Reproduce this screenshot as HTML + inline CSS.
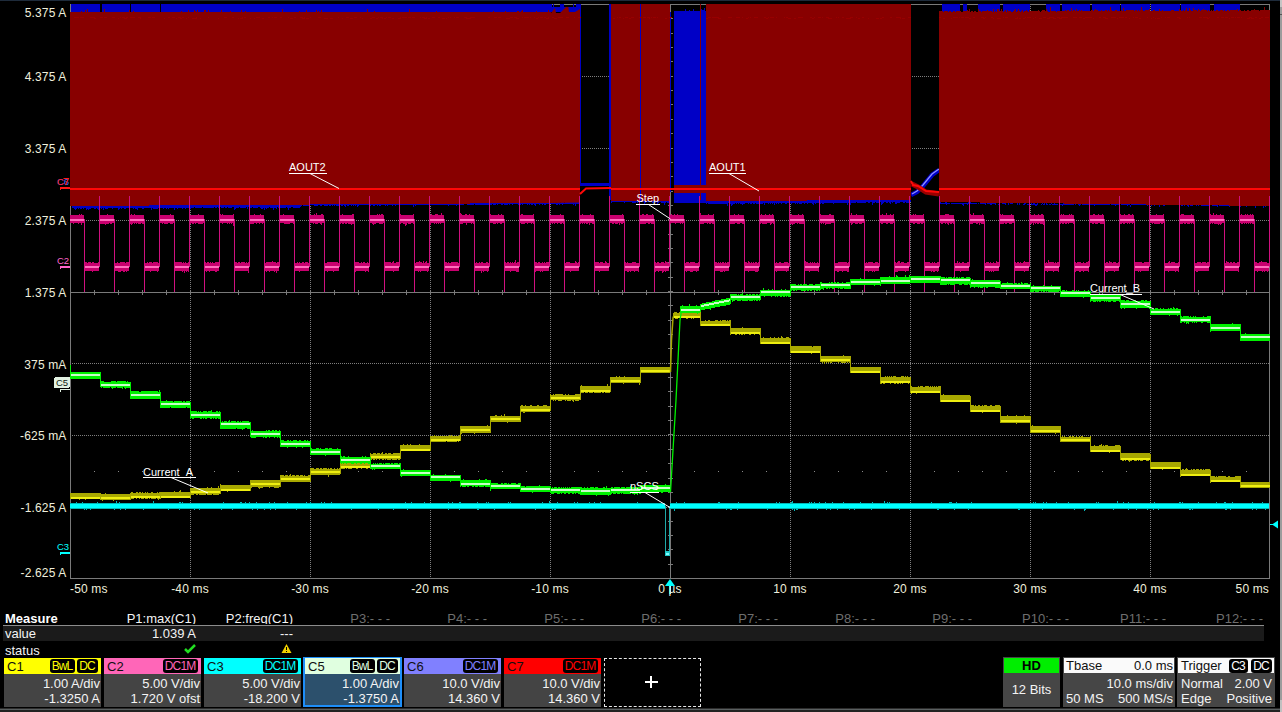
<!DOCTYPE html><html><head><meta charset="utf-8"><style>
html,body{margin:0;padding:0;background:#000;width:1282px;height:712px;overflow:hidden}
body{font-family:"Liberation Sans", sans-serif;position:relative;color:#efefdc}
svg{position:absolute;left:0;top:0}
.a{position:absolute;white-space:nowrap;line-height:1}
.bx{position:absolute;top:658px;width:97px;height:49px;background:#444}
.hd{position:absolute;left:0;top:0;right:0;height:16px}
.hl{position:absolute;left:3px;top:1px;font-size:13px;line-height:15px;color:#101010}
.bd{position:absolute;top:-1px;height:14px;border-radius:3px;background:#000;font-size:12px;line-height:14px;text-align:center;letter-spacing:-0.9px;text-indent:-0.9px}
.r1{position:absolute;right:1px;top:18px;font-size:13px;line-height:15px;color:#f4f4f4}
.r2{position:absolute;right:1px;top:33px;font-size:13px;line-height:15px;color:#f4f4f4}
</style></head><body>
<svg width="1282" height="712" viewBox="0 0 1282 712" shape-rendering="crispEdges" font-family='"Liberation Sans", sans-serif'>
<rect x="0" y="0" width="1282" height="712" fill="#000"/>
<rect x="0" y="0" width="1282" height="1" fill="#1e2b3b"/>
<rect x="1280" y="0" width="2" height="708" fill="#9c9c9c"/>
<rect x="1280" y="0" width="2" height="7" fill="#c4c4c4"/>
<rect x="1280" y="14" width="2" height="1" fill="#555"/>
<line x1="190.5" y1="4" x2="190.5" y2="578" stroke="#7e7e7e" stroke-width="1" stroke-dasharray="1 1"/>
<line x1="310.5" y1="4" x2="310.5" y2="578" stroke="#7e7e7e" stroke-width="1" stroke-dasharray="1 1"/>
<line x1="430.5" y1="4" x2="430.5" y2="578" stroke="#7e7e7e" stroke-width="1" stroke-dasharray="1 1"/>
<line x1="550.5" y1="4" x2="550.5" y2="578" stroke="#7e7e7e" stroke-width="1" stroke-dasharray="1 1"/>
<line x1="790.5" y1="4" x2="790.5" y2="578" stroke="#7e7e7e" stroke-width="1" stroke-dasharray="1 1"/>
<line x1="910.5" y1="4" x2="910.5" y2="578" stroke="#7e7e7e" stroke-width="1" stroke-dasharray="1 1"/>
<line x1="1030.5" y1="4" x2="1030.5" y2="578" stroke="#7e7e7e" stroke-width="1" stroke-dasharray="1 1"/>
<line x1="1150.5" y1="4" x2="1150.5" y2="578" stroke="#7e7e7e" stroke-width="1" stroke-dasharray="1 1"/>
<line x1="70" y1="76.5" x2="1269" y2="76.5" stroke="#7e7e7e" stroke-width="1" stroke-dasharray="1 1"/>
<line x1="70" y1="148.5" x2="1269" y2="148.5" stroke="#7e7e7e" stroke-width="1" stroke-dasharray="1 1"/>
<line x1="70" y1="220.5" x2="1269" y2="220.5" stroke="#7e7e7e" stroke-width="1" stroke-dasharray="1 1"/>
<line x1="70" y1="363.5" x2="1269" y2="363.5" stroke="#7e7e7e" stroke-width="1" stroke-dasharray="1 1"/>
<line x1="70" y1="435.5" x2="1269" y2="435.5" stroke="#7e7e7e" stroke-width="1" stroke-dasharray="1 1"/>
<line x1="70" y1="507.5" x2="1269" y2="507.5" stroke="#7e7e7e" stroke-width="1" stroke-dasharray="1 1"/>
<rect x="94" y="471" width="1" height="1" fill="#8a8a8a"/>
<rect x="118" y="471" width="1" height="1" fill="#8a8a8a"/>
<rect x="142" y="471" width="1" height="1" fill="#8a8a8a"/>
<rect x="166" y="471" width="1" height="1" fill="#8a8a8a"/>
<rect x="190" y="471" width="1" height="1" fill="#8a8a8a"/>
<rect x="214" y="471" width="1" height="1" fill="#8a8a8a"/>
<rect x="238" y="471" width="1" height="1" fill="#8a8a8a"/>
<rect x="262" y="471" width="1" height="1" fill="#8a8a8a"/>
<rect x="286" y="471" width="1" height="1" fill="#8a8a8a"/>
<rect x="310" y="471" width="1" height="1" fill="#8a8a8a"/>
<rect x="334" y="471" width="1" height="1" fill="#8a8a8a"/>
<rect x="358" y="471" width="1" height="1" fill="#8a8a8a"/>
<rect x="382" y="471" width="1" height="1" fill="#8a8a8a"/>
<rect x="406" y="471" width="1" height="1" fill="#8a8a8a"/>
<rect x="430" y="471" width="1" height="1" fill="#8a8a8a"/>
<rect x="454" y="471" width="1" height="1" fill="#8a8a8a"/>
<rect x="478" y="471" width="1" height="1" fill="#8a8a8a"/>
<rect x="502" y="471" width="1" height="1" fill="#8a8a8a"/>
<rect x="526" y="471" width="1" height="1" fill="#8a8a8a"/>
<rect x="550" y="471" width="1" height="1" fill="#8a8a8a"/>
<rect x="574" y="471" width="1" height="1" fill="#8a8a8a"/>
<rect x="598" y="471" width="1" height="1" fill="#8a8a8a"/>
<rect x="622" y="471" width="1" height="1" fill="#8a8a8a"/>
<rect x="646" y="471" width="1" height="1" fill="#8a8a8a"/>
<rect x="670" y="471" width="1" height="1" fill="#8a8a8a"/>
<rect x="694" y="471" width="1" height="1" fill="#8a8a8a"/>
<rect x="718" y="471" width="1" height="1" fill="#8a8a8a"/>
<rect x="742" y="471" width="1" height="1" fill="#8a8a8a"/>
<rect x="766" y="471" width="1" height="1" fill="#8a8a8a"/>
<rect x="790" y="471" width="1" height="1" fill="#8a8a8a"/>
<rect x="814" y="471" width="1" height="1" fill="#8a8a8a"/>
<rect x="838" y="471" width="1" height="1" fill="#8a8a8a"/>
<rect x="862" y="471" width="1" height="1" fill="#8a8a8a"/>
<rect x="886" y="471" width="1" height="1" fill="#8a8a8a"/>
<rect x="910" y="471" width="1" height="1" fill="#8a8a8a"/>
<rect x="934" y="471" width="1" height="1" fill="#8a8a8a"/>
<rect x="958" y="471" width="1" height="1" fill="#8a8a8a"/>
<rect x="982" y="471" width="1" height="1" fill="#8a8a8a"/>
<rect x="1006" y="471" width="1" height="1" fill="#8a8a8a"/>
<rect x="1030" y="471" width="1" height="1" fill="#8a8a8a"/>
<rect x="1054" y="471" width="1" height="1" fill="#8a8a8a"/>
<rect x="1078" y="471" width="1" height="1" fill="#8a8a8a"/>
<rect x="1102" y="471" width="1" height="1" fill="#8a8a8a"/>
<rect x="1126" y="471" width="1" height="1" fill="#8a8a8a"/>
<rect x="1150" y="471" width="1" height="1" fill="#8a8a8a"/>
<rect x="1174" y="471" width="1" height="1" fill="#8a8a8a"/>
<rect x="1198" y="471" width="1" height="1" fill="#8a8a8a"/>
<rect x="1222" y="471" width="1" height="1" fill="#8a8a8a"/>
<rect x="1246" y="471" width="1" height="1" fill="#8a8a8a"/>
<rect x="70" y="4" width="1200" height="1" fill="#7a7a7a"/>
<rect x="70" y="578" width="1200" height="1" fill="#7a7a7a"/>
<rect x="70" y="4" width="1" height="575" fill="#7a7a7a"/>
<rect x="1269" y="4" width="1" height="575" fill="#7a7a7a"/>
<rect x="670" y="4" width="1" height="575" fill="#7a7a7a"/>
<rect x="70" y="292" width="1200" height="1" fill="#7a7a7a"/>
<rect x="94" y="290" width="1" height="5" fill="#7a7a7a"/>
<rect x="118" y="290" width="1" height="5" fill="#7a7a7a"/>
<rect x="142" y="290" width="1" height="5" fill="#7a7a7a"/>
<rect x="166" y="290" width="1" height="5" fill="#7a7a7a"/>
<rect x="190" y="290" width="1" height="5" fill="#7a7a7a"/>
<rect x="214" y="290" width="1" height="5" fill="#7a7a7a"/>
<rect x="238" y="290" width="1" height="5" fill="#7a7a7a"/>
<rect x="262" y="290" width="1" height="5" fill="#7a7a7a"/>
<rect x="286" y="290" width="1" height="5" fill="#7a7a7a"/>
<rect x="310" y="290" width="1" height="5" fill="#7a7a7a"/>
<rect x="334" y="290" width="1" height="5" fill="#7a7a7a"/>
<rect x="358" y="290" width="1" height="5" fill="#7a7a7a"/>
<rect x="382" y="290" width="1" height="5" fill="#7a7a7a"/>
<rect x="406" y="290" width="1" height="5" fill="#7a7a7a"/>
<rect x="430" y="290" width="1" height="5" fill="#7a7a7a"/>
<rect x="454" y="290" width="1" height="5" fill="#7a7a7a"/>
<rect x="478" y="290" width="1" height="5" fill="#7a7a7a"/>
<rect x="502" y="290" width="1" height="5" fill="#7a7a7a"/>
<rect x="526" y="290" width="1" height="5" fill="#7a7a7a"/>
<rect x="550" y="290" width="1" height="5" fill="#7a7a7a"/>
<rect x="574" y="290" width="1" height="5" fill="#7a7a7a"/>
<rect x="598" y="290" width="1" height="5" fill="#7a7a7a"/>
<rect x="622" y="290" width="1" height="5" fill="#7a7a7a"/>
<rect x="646" y="290" width="1" height="5" fill="#7a7a7a"/>
<rect x="670" y="290" width="1" height="5" fill="#7a7a7a"/>
<rect x="694" y="290" width="1" height="5" fill="#7a7a7a"/>
<rect x="718" y="290" width="1" height="5" fill="#7a7a7a"/>
<rect x="742" y="290" width="1" height="5" fill="#7a7a7a"/>
<rect x="766" y="290" width="1" height="5" fill="#7a7a7a"/>
<rect x="790" y="290" width="1" height="5" fill="#7a7a7a"/>
<rect x="814" y="290" width="1" height="5" fill="#7a7a7a"/>
<rect x="838" y="290" width="1" height="5" fill="#7a7a7a"/>
<rect x="862" y="290" width="1" height="5" fill="#7a7a7a"/>
<rect x="886" y="290" width="1" height="5" fill="#7a7a7a"/>
<rect x="910" y="290" width="1" height="5" fill="#7a7a7a"/>
<rect x="934" y="290" width="1" height="5" fill="#7a7a7a"/>
<rect x="958" y="290" width="1" height="5" fill="#7a7a7a"/>
<rect x="982" y="290" width="1" height="5" fill="#7a7a7a"/>
<rect x="1006" y="290" width="1" height="5" fill="#7a7a7a"/>
<rect x="1030" y="290" width="1" height="5" fill="#7a7a7a"/>
<rect x="1054" y="290" width="1" height="5" fill="#7a7a7a"/>
<rect x="1078" y="290" width="1" height="5" fill="#7a7a7a"/>
<rect x="1102" y="290" width="1" height="5" fill="#7a7a7a"/>
<rect x="1126" y="290" width="1" height="5" fill="#7a7a7a"/>
<rect x="1150" y="290" width="1" height="5" fill="#7a7a7a"/>
<rect x="1174" y="290" width="1" height="5" fill="#7a7a7a"/>
<rect x="1198" y="290" width="1" height="5" fill="#7a7a7a"/>
<rect x="1222" y="290" width="1" height="5" fill="#7a7a7a"/>
<rect x="1246" y="290" width="1" height="5" fill="#7a7a7a"/>
<rect x="668" y="18" width="5" height="1" fill="#7a7a7a"/>
<rect x="668" y="33" width="5" height="1" fill="#7a7a7a"/>
<rect x="668" y="47" width="5" height="1" fill="#7a7a7a"/>
<rect x="668" y="61" width="5" height="1" fill="#7a7a7a"/>
<rect x="668" y="76" width="5" height="1" fill="#7a7a7a"/>
<rect x="668" y="90" width="5" height="1" fill="#7a7a7a"/>
<rect x="668" y="104" width="5" height="1" fill="#7a7a7a"/>
<rect x="668" y="119" width="5" height="1" fill="#7a7a7a"/>
<rect x="668" y="133" width="5" height="1" fill="#7a7a7a"/>
<rect x="668" y="148" width="5" height="1" fill="#7a7a7a"/>
<rect x="668" y="162" width="5" height="1" fill="#7a7a7a"/>
<rect x="668" y="176" width="5" height="1" fill="#7a7a7a"/>
<rect x="668" y="191" width="5" height="1" fill="#7a7a7a"/>
<rect x="668" y="205" width="5" height="1" fill="#7a7a7a"/>
<rect x="668" y="219" width="5" height="1" fill="#7a7a7a"/>
<rect x="668" y="234" width="5" height="1" fill="#7a7a7a"/>
<rect x="668" y="248" width="5" height="1" fill="#7a7a7a"/>
<rect x="668" y="262" width="5" height="1" fill="#7a7a7a"/>
<rect x="668" y="277" width="5" height="1" fill="#7a7a7a"/>
<rect x="668" y="291" width="5" height="1" fill="#7a7a7a"/>
<rect x="668" y="305" width="5" height="1" fill="#7a7a7a"/>
<rect x="668" y="320" width="5" height="1" fill="#7a7a7a"/>
<rect x="668" y="334" width="5" height="1" fill="#7a7a7a"/>
<rect x="668" y="348" width="5" height="1" fill="#7a7a7a"/>
<rect x="668" y="363" width="5" height="1" fill="#7a7a7a"/>
<rect x="668" y="377" width="5" height="1" fill="#7a7a7a"/>
<rect x="668" y="391" width="5" height="1" fill="#7a7a7a"/>
<rect x="668" y="406" width="5" height="1" fill="#7a7a7a"/>
<rect x="668" y="420" width="5" height="1" fill="#7a7a7a"/>
<rect x="668" y="434" width="5" height="1" fill="#7a7a7a"/>
<rect x="668" y="449" width="5" height="1" fill="#7a7a7a"/>
<rect x="668" y="463" width="5" height="1" fill="#7a7a7a"/>
<rect x="668" y="478" width="5" height="1" fill="#7a7a7a"/>
<rect x="668" y="492" width="5" height="1" fill="#7a7a7a"/>
<rect x="668" y="506" width="5" height="1" fill="#7a7a7a"/>
<rect x="668" y="521" width="5" height="1" fill="#7a7a7a"/>
<rect x="668" y="535" width="5" height="1" fill="#7a7a7a"/>
<rect x="668" y="549" width="5" height="1" fill="#7a7a7a"/>
<rect x="668" y="564" width="5" height="1" fill="#7a7a7a"/>
<rect x="71" y="4" width="509" height="8" fill="#0000c6"/>
<rect x="100" y="4" width="2" height="8" fill="#000"/>
<rect x="130" y="4" width="1" height="8" fill="#000"/>
<rect x="160" y="4" width="1" height="8" fill="#000"/>
<path fill="#0000c6" d="M72 205V205H73V205H74V205H75V205H76V204H77V205H78V202H79V204H80V205H81V205H82V204H83V205H84V205H85V205H86V205H87V204H88V205H89V205H90V205H91V205H92V205H93V205H94V204H95V204H96V204H97V205H98V205H99V205H100V205H101V205H102V205H103V205H104V205H105V204H106V204H107V205H108V205H109V204H110V204H111V204H112V205H113V205H114V204H115V205H116V205H117V204H118V205H119V205H120V205H121V204H122V205H123V205H124V204H125V204H126V204H127V204H128V204H129V204H130V202H131V205H132V205H133V205H134V205H135V203H136V204H137V205H138V204H139V203H140V205H141V205H142V205H143V204H144V205H145V204H146V205H147V204H148V205H149V204H150V205H151V205H152V205H153V204H154V205H155V205H156V205H157V204H158V204H159V204H160V204H161V203H162V205H163V202H164V204H165V205H166V205H167V204H168V205H169V205H170V205H171V204H172V205H173V204H174V205H175V204H176V204H177V204H178V205H179V204H180V204H181V204H182V205H183V204H184V205H185V205H186V203H187V205H188V205H189V205H190V204H191V205H192V204H193V205H194V204H195V204H196V204H197V204H198V205H199V204H200V205H201V205H202V204H203V204H204V204H205V203H206V204H207V205H208V203H209V204H210V204H211V205H212V204H213V205H214V203H215V204H216V204H217V205H218V204H219V204H220V204H221V205H222V204H223V205H224V204H225V204H226V204H227V204H228V205H229V204H230V204H231V204H232V204H233V205H234V204H235V204H236V204H237V204H238V205H239V204H240V205H241V204H242V204H243V204H244V204H245V205H246V204H247V204H248V205H249V204H250V202H251V204H252V203H253V204H254V204H255V204H256V205H257V204H258V204H259V204H260V205H261V204H262V204H263V203H264V204H265V205H266V202H267V204H268V204H269V204H270V203H271V204H272V204H273V204H274V204H275V204H276V204H277V204H278V204H279V203H280V205H281V204H282V204H283V204H284V204H285V205H286V204H287V204H288V203H289V202H290V204H291V204H292V204H293V202H294V204H295V204H296V205H297V203H298V204H299V204H300V208H299V208H298V208H297V208H296V208H295V208H294V208H293V207H292V207H291V208H290V208H289V210H288V208H287V207H286V208H285V208H284V208H283V208H282V208H281V208H280V207H279V208H278V207H277V209H276V208H275V208H274V210H273V208H272V208H271V208H270V207H269V208H268V208H267V209H266V208H265V210H264V208H263V209H262V209H261V208H260V207H259V207H258V208H257V208H256V208H255V208H254V208H253V207H252V208H251V208H250V208H249V207H248V209H247V207H246V208H245V208H244V208H243V208H242V208H241V208H240V207H239V208H238V208H237V208H236V209H235V210H234V207H233V207H232V208H231V208H230V208H229V208H228V207H227V208H226V208H225V207H224V208H223V208H222V208H221V207H220V208H219V208H218V207H217V208H216V208H215V207H214V208H213V208H212V208H211V208H210V208H209V208H208V208H207V208H206V208H205V208H204V208H203V207H202V208H201V208H200V208H199V208H198V208H197V208H196V208H195V207H194V208H193V208H192V208H191V209H190V208H189V208H188V208H187V208H186V209H185V208H184V208H183V209H182V208H181V208H180V208H179V208H178V209H177V208H176V208H175V210H174V208H173V208H172V208H171V208H170V208H169V209H168V208H167V209H166V208H165V208H164V209H163V208H162V208H161V208H160V208H159V208H158V209H157V209H156V209H155V209H154V209H153V208H152V210H151V208H150V208H149V208H148V208H147V208H146V208H145V208H144V209H143V209H142V208H141V208H140V208H139V208H138V210H137V209H136V209H135V208H134V209H133V208H132V208H131V208H130V208H129V208H128V208H127V208H126V209H125V209H124V208H123V208H122V209H121V208H120V209H119V210H118V208H117V208H116V208H115V208H114V208H113V209H112V208H111V208H110V208H109V208H108V209H107V209H106V209H105V208H104V210H103V208H102V209H101V208H100V210H99V210H98V209H97V208H96V209H95V209H94V208H93V208H92V208H91V209H90V209H89V210H88V209H87V210H86V208H85V208H84V209H83V208H82V209H81V209H80V208H79V209H78V208H77V209H76V210H75V209H74V208H73V208H72Z"/>
<path fill="#0000c6" d="M300 204V204H301V203H302V203H303V204H304V204H305V203H306V204H307V203H308V204H309V204H310V204H311V204H312V202H313V203H314V203H315V203H316V204H317V204H318V204H319V204H320V203H321V203H322V203H323V204H324V203H325V204H326V204H327V203H328V204H329V203H330V203H331V204H332V204H333V203H334V203H335V203H336V203H337V203H338V203H339V204H340V203H341V203H342V203H343V204H344V204H345V204H346V203H347V204H348V203H349V204H350V204H351V203H352V203H353V204H354V204H355V203H356V204H357V203H358V204H359V203H360V204H361V203H362V204H363V203H364V202H365V204H366V203H367V203H368V203H369V203H370V203H371V203H372V203H373V203H374V202H375V203H376V203H377V203H378V203H379V203H380V203H381V203H382V203H383V204H384V203H385V203H386V203H387V203H388V203H389V203H390V202H391V203H392V203H393V203H394V203H395V203H396V202H397V203H398V203H399V203H400V203H401V203H402V203H403V203H404V203H405V203H406V203H407V203H408V203H409V203H410V203H411V203H412V203H413V203H414V203H415V203H416V203H417V203H418V203H419V203H420V203H421V203H422V203H423V203H424V203H425V203H426V202H427V203H428V203H429V203H430V203H431V203H432V203H433V203H434V203H435V203H436V203H437V203H438V203H439V203H440V202H441V203H442V202H443V203H444V203H445V203H446V203H447V203H448V203H449V203H450V203H451V202H452V203H453V203H454V203H455V202H456V203H457V203H458V203H459V203H460V203H461V203H462V203H463V203H464V202H465V203H466V203H467V202H468V202H469V203H470V203H471V203H472V203H473V203H474V202H475V203H476V202H477V202H478V202H479V203H480V202H481V203H482V202H483V203H484V203H485V203H486V203H487V202H488V203H489V202H490V203H491V202H492V202H493V203H494V202H495V202H496V202H497V203H498V202H499V202H500V201H501V201H502V203H503V202H504V202H505V203H506V203H507V203H508V202H509V202H510V203H511V202H512V202H513V202H514V203H515V202H516V202H517V202H518V202H519V202H520V203H521V202H522V202H523V202H524V202H525V203H526V202H527V202H528V202H529V202H530V202H531V202H532V202H533V203H534V202H535V202H536V202H537V202H538V202H539V203H540V202H541V202H542V202H543V202H544V202H545V203H546V202H547V202H548V202H549V202H550V203H551V202H552V203H553V203H554V202H555V203H556V203H557V202H558V202H559V202H560V203H561V202H562V202H563V202H564V203H565V202H566V202H567V202H568V202H569V202H570V202H571V202H572V202H573V202H574V202H575V202H576V202H577V202H578V202H579V202H580V204H579V204H578V204H577V204H576V206H575V204H574V205H573V204H572V204H571V204H570V204H569V204H568V204H567V204H566V204H565V204H564V204H563V205H562V204H561V204H560V205H559V204H558V205H557V205H556V204H555V204H554V204H553V204H552V204H551V204H550V205H549V204H548V204H547V204H546V205H545V205H544V204H543V205H542V204H541V204H540V205H539V204H538V204H537V204H536V206H535V205H534V204H533V205H532V205H531V204H530V205H529V204H528V205H527V204H526V204H525V204H524V204H523V205H522V204H521V205H520V204H519V205H518V204H517V204H516V204H515V204H514V204H513V205H512V204H511V204H510V205H509V204H508V205H507V205H506V205H505V205H504V204H503V205H502V205H501V204H500V204H499V204H498V205H497V204H496V205H495V205H494V205H493V204H492V205H491V205H490V205H489V205H488V205H487V205H486V205H485V205H484V205H483V205H482V205H481V205H480V205H479V205H478V205H477V205H476V205H475V204H474V205H473V205H472V205H471V205H470V205H469V205H468V205H467V204H466V204H465V204H464V205H463V205H462V205H461V205H460V205H459V205H458V205H457V206H456V205H455V205H454V205H453V205H452V205H451V205H450V205H449V206H448V205H447V205H446V205H445V205H444V205H443V205H442V205H441V205H440V205H439V205H438V205H437V205H436V205H435V205H434V205H433V205H432V205H431V205H430V206H429V205H428V205H427V205H426V205H425V205H424V205H423V205H422V205H421V205H420V205H419V205H418V205H417V205H416V206H415V205H414V207H413V205H412V205H411V205H410V205H409V205H408V205H407V205H406V205H405V205H404V205H403V205H402V205H401V205H400V205H399V205H398V205H397V205H396V206H395V205H394V205H393V206H392V205H391V205H390V205H389V205H388V206H387V205H386V206H385V205H384V205H383V205H382V205H381V206H380V206H379V205H378V206H377V205H376V205H375V206H374V206H373V205H372V205H371V206H370V206H369V205H368V205H367V205H366V205H365V205H364V205H363V205H362V205H361V205H360V205H359V206H358V207H357V205H356V206H355V205H354V206H353V205H352V206H351V205H350V205H349V206H348V206H347V205H346V207H345V206H344V205H343V206H342V206H341V205H340V205H339V206H338V206H337V206H336V205H335V206H334V205H333V206H332V205H331V206H330V206H329V205H328V206H327V206H326V206H325V206H324V205H323V205H322V206H321V206H320V205H319V205H318V206H317V206H316V206H315V206H314V205H313V205H312V205H311V205H310V206H309V206H308V206H307V206H306V206H305V206H304V206H303V205H302V206H301V207H300Z"/>
<rect x="580" y="4" width="1" height="182" fill="#0000c6"/>
<rect x="580" y="183" width="30" height="3" fill="#0000c6"/>
<rect x="609" y="4" width="2" height="196" fill="#0000c6"/>
<rect x="640" y="4" width="1" height="196" fill="#0000c6"/>
<path fill="#0000c6" d="M611 198V198H612V198H613V197H614V199H615V199H616V199H617V199H618V198H619V199H620V198H621V199H622V197H623V198H624V199H625V199H626V198H627V198H628V198H629V197H630V199H631V199H632V198H633V199H634V199H635V198H636V198H637V198H638V199H639V198H640V199H641V199H642V199H643V199H644V198H645V198H646V199H647V199H648V199H649V199H650V198H651V199H652V199H653V199H654V198H655V199H656V199H657V198H658V199H659V199H660V199H661V199H662V199H663V199H664V199H665V199H666V199H667V199H668V199H669V199H670V203H669V203H668V203H667V202H666V203H665V205H664V203H663V203H662V203H661V202H660V202H659V203H658V204H657V202H656V203H655V202H654V202H653V203H652V202H651V202H650V202H649V202H648V202H647V202H646V203H645V204H644V202H643V202H642V202H641V202H640V203H639V202H638V203H637V202H636V203H635V203H634V203H633V203H632V202H631V202H630V202H629V202H628V202H627V202H626V202H625V203H624V202H623V202H622V202H621V202H620V202H619V202H618V202H617V202H616V202H615V202H614V202H613V202H612V203H611Z"/>
<path fill="#0000c6" d="M674 11V11H675V11H676V11H677V11H678V11H679V11H680V11H681V11H682V11H683V11H684V11H685V9H686V11H687V11H688V11H689V10H690V11H691V11H692V11H693V9H694V11H695V11H696V11H697V11H698V11H699V11H700V11H701V9H702V10H703V10H704V8H705V11H706V203L674 203Z"/>
<rect x="670" y="12" width="1" height="180" fill="#0000c6"/>
<path fill="#0000c6" d="M706 200V200H707V200H708V200H709V200H710V201H711V200H712V199H713V200H714V200H715V200H716V200H717V200H718V200H719V201H720V200H721V199H722V199H723V201H724V201H725V200H726V200H727V200H728V200H729V201H730V200H731V201H732V200H733V200H734V201H735V200H736V200H737V200H738V200H739V201H740V201H741V201H742V200H743V201H744V200H745V200H746V200H747V200H748V201H749V200H750V200H751V200H752V200H753V198H754V200H755V200H756V200H757V200H758V201H759V200H760V200H761V200H762V199H763V200H764V200H765V200H766V200H767V200H768V200H769V200H770V200H771V200H772V200H773V200H774V200H775V200H776V200H777V200H778V200H779V200H780V199H781V200H782V200H783V198H784V200H785V200H786V200H787V200H788V200H789V200H790V200H791V199H792V200H793V200H794V199H795V200H796V199H797V200H798V200H799V200H800V200H801V200H802V200H803V200H804V200H805V199H806V198H807V200H808V200H809V199H810V200H811V199H812V200H813V200H814V200H815V200H816V200H817V200H818V200H819V199H820V200H821V198H822V200H823V200H824V198H825V199H826V199H827V200H828V199H829V200H830V199H831V200H832V199H833V200H834V199H835V199H836V199H837V200H838V199H839V197H840V199H841V200H842V199H843V199H844V200H845V200H846V200H847V199H848V199H849V200H850V199H851V199H852V200H853V200H854V200H855V199H856V199H857V199H858V200H859V200H860V199H861V199H862V199H863V200H864V199H865V199H866V199H867V199H868V200H869V200H870V199H871V200H872V200H873V199H874V199H875V199H876V200H877V199H878V199H879V199H880V200H881V200H882V199H883V199H884V199H885V199H886V199H887V199H888V199H889V199H890V199H891V199H892V198H893V199H894V199H895V200H896V199H897V199H898V198H899V199H900V199H901V199H902V199H903V199H904V199H905V199H906V199H907V199H908V198H909V199H910V199H911V202H910V203H909V203H908V203H907V203H906V202H905V203H904V203H903V202H902V202H901V202H900V203H899V203H898V203H897V204H896V204H895V202H894V202H893V203H892V202H891V204H890V203H889V202H888V203H887V203H886V202H885V202H884V203H883V204H882V205H881V202H880V203H879V203H878V203H877V203H876V202H875V203H874V203H873V205H872V202H871V202H870V203H869V203H868V202H867V202H866V203H865V203H864V203H863V203H862V203H861V203H860V203H859V203H858V203H857V202H856V203H855V203H854V203H853V203H852V203H851V205H850V203H849V203H848V205H847V203H846V203H845V203H844V203H843V203H842V203H841V203H840V203H839V203H838V203H837V203H836V203H835V203H834V204H833V203H832V203H831V203H830V203H829V203H828V203H827V203H826V203H825V203H824V204H823V204H822V203H821V204H820V204H819V203H818V203H817V203H816V204H815V203H814V205H813V204H812V203H811V203H810V203H809V203H808V204H807V203H806V203H805V204H804V203H803V203H802V204H801V204H800V204H799V203H798V204H797V203H796V204H795V203H794V203H793V203H792V204H791V203H790V203H789V203H788V203H787V204H786V204H785V203H784V203H783V203H782V204H781V203H780V203H779V204H778V203H777V204H776V203H775V205H774V203H773V204H772V203H771V204H770V203H769V204H768V203H767V203H766V203H765V205H764V203H763V204H762V204H761V204H760V204H759V204H758V204H757V204H756V203H755V204H754V204H753V203H752V204H751V204H750V203H749V204H748V203H747V203H746V203H745V204H744V204H743V205H742V204H741V204H740V203H739V204H738V203H737V204H736V203H735V204H734V204H733V205H732V206H731V204H730V204H729V203H728V206H727V204H726V204H725V204H724V204H723V204H722V204H721V204H720V204H719V204H718V204H717V204H716V204H715V204H714V204H713V204H712V204H711V204H710V204H709V204H708V203H707V204H706Z"/>
<path fill="none" stroke="#0000c6" stroke-width="4.5" shape-rendering="auto" d="M911 195 L917 192 L923 186 L932 175 L939 170"/>
<path fill="none" stroke="#9090ff" stroke-width="1.3" shape-rendering="auto" d="M912 194 L917 191 L923 185 L932 174 L939 169"/>
<rect x="942" y="4" width="18" height="8" fill="#0000c6"/>
<rect x="963" y="4" width="4" height="8" fill="#0000c6"/>
<rect x="978" y="4" width="22" height="8" fill="#0000c6"/>
<rect x="1003" y="4" width="27" height="8" fill="#0000c6"/>
<rect x="1046" y="4" width="14" height="8" fill="#0000c6"/>
<rect x="1062" y="4" width="28" height="8" fill="#0000c6"/>
<rect x="1092" y="4" width="28" height="8" fill="#0000c6"/>
<rect x="1121" y="4" width="29" height="8" fill="#0000c6"/>
<rect x="1151" y="4" width="29" height="8" fill="#0000c6"/>
<rect x="1181" y="4" width="29" height="8" fill="#0000c6"/>
<rect x="1214" y="4" width="26" height="8" fill="#0000c6"/>
<path fill="#0000c6" d="M939 203V203H940V202H941V203H942V203H943V203H944V203H945V202H946V202H947V203H948V203H949V203H950V204H951V203H952V203H953V203H954V203H955V203H956V203H957V203H958V203H959V203H960V203H961V203H962V203H963V203H964V203H965V203H966V203H967V203H968V202H969V201H970V202H971V203H972V203H973V203H974V203H975V203H976V203H977V204H978V203H979V204H980V203H981V203H982V203H983V203H984V203H985V203H986V204H987V203H988V203H989V203H990V203H991V203H992V203H993V203H994V203H995V203H996V204H997V204H998V204H999V204H1000V204H1001V204H1002V203H1003V203H1004V203H1005V203H1006V204H1007V204H1008V203H1009V204H1010V202H1011V202H1012V203H1013V204H1014V204H1015V204H1016V204H1017V203H1018V204H1019V203H1020V204H1021V204H1022V204H1023V204H1024V203H1025V203H1026V204H1027V204H1028V204H1029V204H1030V204H1031V202H1032V204H1033V203H1034V203H1035V204H1036V204H1037V203H1038V204H1039V204H1040V204H1041V204H1042V203H1043V204H1044V203H1045V204H1046V203H1047V204H1048V204H1049V204H1050V204H1051V203H1052V204H1053V204H1054V203H1055V204H1056V204H1057V204H1058V204H1059V203H1060V204H1061V204H1062V204H1063V202H1064V204H1065V204H1066V204H1067V204H1068V204H1069V204H1070V204H1071V203H1072V204H1073V204H1074V204H1075V204H1076V203H1077V204H1078V204H1079V204H1080V204H1081V204H1082V204H1083V204H1084V204H1085V203H1086V204H1087V204H1088V204H1089V204H1090V204H1091V204H1092V204H1093V204H1094V204H1095V204H1096V204H1097V202H1098V204H1099V204H1100V204H1101V204H1102V202H1103V204H1104V204H1105V204H1106V204H1107V204H1108V204H1109V204H1110V205H1111V204H1112V204H1113V204H1114V204H1115V204H1116V204H1117V203H1118V204H1119V204H1120V205H1121V204H1122V204H1123V204H1124V204H1125V203H1126V204H1127V204H1128V204H1129V203H1130V205H1131V204H1132V203H1133V204H1134V204H1135V204H1136V204H1137V204H1138V204H1139V204H1140V204H1141V204H1142V204H1143V203H1144V204H1145V204H1146V204H1147V204H1148V205H1149V205H1150V204H1151V205H1152V204H1153V205H1154V205H1155V204H1156V205H1157V205H1158V204H1159V204H1160V204H1161V204H1162V204H1163V204H1164V204H1165V205H1166V205H1167V205H1168V205H1169V205H1170V204H1171V205H1172V205H1173V205H1174V205H1175V204H1176V204H1177V204H1178V204H1179V205H1180V204H1181V205H1182V205H1183V203H1184V204H1185V203H1186V205H1187V205H1188V205H1189V205H1190V205H1191V205H1192V205H1193V205H1194V204H1195V204H1196V205H1197V205H1198V205H1199V205H1200V205H1201V205H1202V205H1203V205H1204V205H1205V204H1206V205H1207V205H1208V204H1209V205H1210V205H1211V205H1212V204H1213V204H1214V205H1215V203H1216V205H1217V203H1218V205H1219V204H1220V205H1221V205H1222V205H1223V205H1224V205H1225V205H1226V205H1227V205H1228V205H1229V205H1230V205H1231V205H1232V205H1233V205H1234V205H1235V205H1236V205H1237V204H1238V205H1239V205H1240V205H1241V205H1242V205H1243V205H1244V205H1245V205H1246V205H1247V205H1248V204H1249V205H1250V205H1251V205H1252V205H1253V205H1254V204H1255V205H1256V205H1257V205H1258V205H1259V205H1260V205H1261V205H1262V205H1263V205H1264V204H1265V205H1266V205H1267V205H1268V204H1269V206H1268V206H1267V206H1266V207H1265V206H1264V208H1263V205H1262V206H1261V206H1260V206H1259V206H1258V206H1257V206H1256V208H1255V205H1254V206H1253V206H1252V206H1251V206H1250V206H1249V205H1248V206H1247V207H1246V205H1245V205H1244V206H1243V206H1242V206H1241V207H1240V205H1239V206H1238V205H1237V206H1236V205H1235V206H1234V206H1233V206H1232V206H1231V206H1230V207H1229V206H1228V206H1227V206H1226V206H1225V206H1224V206H1223V206H1222V206H1221V206H1220V206H1219V205H1218V207H1217V206H1216V206H1215V206H1214V206H1213V206H1212V205H1211V205H1210V205H1209V206H1208V206H1207V206H1206V206H1205V206H1204V206H1203V206H1202V206H1201V205H1200V205H1199V206H1198V205H1197V206H1196V205H1195V205H1194V205H1193V206H1192V206H1191V206H1190V205H1189V207H1188V206H1187V205H1186V205H1185V206H1184V205H1183V206H1182V206H1181V205H1180V207H1179V205H1178V205H1177V205H1176V205H1175V205H1174V205H1173V205H1172V205H1171V205H1170V205H1169V205H1168V205H1167V205H1166V205H1165V206H1164V206H1163V205H1162V205H1161V205H1160V207H1159V205H1158V205H1157V205H1156V205H1155V206H1154V205H1153V205H1152V206H1151V205H1150V205H1149V205H1148V206H1147V205H1146V205H1145V205H1144V205H1143V205H1142V205H1141V205H1140V205H1139V205H1138V205H1137V205H1136V205H1135V205H1134V205H1133V205H1132V205H1131V207H1130V205H1129V205H1128V206H1127V205H1126V205H1125V205H1124V205H1123V205H1122V205H1121V205H1120V205H1119V205H1118V205H1117V205H1116V206H1115V205H1114V205H1113V205H1112V205H1111V205H1110V205H1109V205H1108V205H1107V205H1106V205H1105V205H1104V205H1103V205H1102V205H1101V205H1100V205H1099V205H1098V205H1097V205H1096V205H1095V206H1094V205H1093V205H1092V205H1091V205H1090V205H1089V205H1088V205H1087V205H1086V205H1085V205H1084V205H1083V205H1082V204H1081V205H1080V206H1079V205H1078V204H1077V204H1076V205H1075V204H1074V205H1073V205H1072V205H1071V205H1070V205H1069V205H1068V205H1067V205H1066V205H1065V205H1064V205H1063V206H1062V205H1061V205H1060V205H1059V204H1058V205H1057V205H1056V205H1055V205H1054V205H1053V205H1052V204H1051V205H1050V205H1049V204H1048V205H1047V205H1046V204H1045V205H1044V205H1043V204H1042V205H1041V204H1040V204H1039V204H1038V205H1037V206H1036V206H1035V205H1034V205H1033V205H1032V205H1031V204H1030V206H1029V205H1028V205H1027V204H1026V204H1025V205H1024V205H1023V204H1022V204H1021V204H1020V205H1019V204H1018V205H1017V204H1016V204H1015V204H1014V204H1013V204H1012V204H1011V204H1010V204H1009V205H1008V204H1007V204H1006V205H1005V204H1004V204H1003V204H1002V204H1001V204H1000V205H999V205H998V204H997V204H996V205H995V204H994V204H993V204H992V205H991V205H990V204H989V204H988V204H987V204H986V205H985V204H984V204H983V204H982V204H981V204H980V204H979V204H978V204H977V204H976V204H975V204H974V204H973V204H972V204H971V204H970V204H969V204H968V205H967V204H966V204H965V204H964V206H963V205H962V204H961V204H960V204H959V204H958V204H957V204H956V204H955V204H954V204H953V204H952V204H951V204H950V204H949V204H948V204H947V205H946V204H945V204H944V204H943V204H942V204H941V204H940V204H939Z"/>
<path fill="#880000" d="M70 12V12H71V12H72V12H73V12H74V12H75V12H76V12H77V12H78V12H79V12H80V12H81V11H82V12H83V12H84V12H85V10H86V12H87V9H88V12H89V12H90V12H91V12H92V12H93V12H94V12H95V12H96V12H97V12H98V12H99V12H100V12H101V12H102V12H103V12H104V9H105V12H106V12H107V12H108V12H109V12H110V12H111V12H112V12H113V12H114V12H115V12H116V12H117V12H118V12H119V12H120V12H121V12H122V12H123V12H124V12H125V12H126V12H127V12H128V12H129V10H130V12H131V12H132V12H133V11H134V12H135V12H136V12H137V12H138V12H139V12H140V12H141V12H142V12H143V12H144V12H145V12H146V12H147V12H148V12H149V12H150V12H151V12H152V12H153V12H154V12H155V12H156V12H157V12H158V12H159V12H160V12H161V12H162V12H163V12H164V12H165V12H166V12H167V12H168V12H169V12H170V12H171V12H172V12H173V12H174V12H175V12H176V12H177V12H178V12H179V12H180V12H181V11H182V12H183V12H184V12H185V12H186V12H187V12H188V10H189V12H190V12H191V12H192V12H193V12H194V10H195V11H196V12H197V10H198V12H199V12H200V12H201V12H202V12H203V12H204V10H205V10H206V12H207V12H208V10H209V12H210V12H211V12H212V12H213V12H214V12H215V12H216V12H217V12H218V12H219V12H220V12H221V10H222V12H223V12H224V12H225V12H226V12H227V12H228V12H229V12H230V11H231V12H232V12H233V12H234V12H235V12H236V12H237V12H238V12H239V12H240V12H241V10H242V12H243V12H244V12H245V11H246V12H247V12H248V12H249V12H250V12H251V12H252V12H253V12H254V12H255V12H256V12H257V12H258V12H259V12H260V12H261V12H262V12H263V12H264V12H265V12H266V12H267V12H268V12H269V12H270V12H271V12H272V12H273V12H274V12H275V12H276V12H277V12H278V12H279V12H280V12H281V12H282V9H283V12H284V12H285V12H286V12H287V12H288V12H289V12H290V12H291V12H292V12H293V12H294V12H295V12H296V12H297V12H298V12H299V11H300V12H301V12H302V12H303V12H304V12H305V12H306V10H307V12H308V12H309V12H310V12H311V12H312V12H313V12H314V12H315V12H316V10H317V12H318V11H319V12H320V12H321V10H322V12H323V12H324V12H325V12H326V12H327V12H328V12H329V12H330V12H331V12H332V12H333V12H334V12H335V12H336V12H337V12H338V12H339V12H340V12H341V12H342V12H343V12H344V12H345V12H346V12H347V12H348V12H349V12H350V12H351V12H352V12H353V12H354V12H355V12H356V12H357V12H358V12H359V12H360V12H361V12H362V12H363V12H364V12H365V12H366V12H367V9H368V12H369V12H370V12H371V12H372V12H373V12H374V11H375V12H376V12H377V12H378V12H379V12H380V12H381V12H382V12H383V12H384V12H385V12H386V12H387V12H388V12H389V12H390V12H391V12H392V12H393V12H394V12H395V12H396V12H397V12H398V12H399V12H400V12H401V12H402V12H403V12H404V12H405V12H406V12H407V12H408V12H409V9H410V12H411V12H412V12H413V12H414V12H415V12H416V12H417V12H418V12H419V12H420V12H421V12H422V12H423V12H424V12H425V12H426V12H427V12H428V12H429V12H430V12H431V12H432V12H433V12H434V12H435V12H436V11H437V12H438V12H439V12H440V12H441V12H442V12H443V12H444V12H445V12H446V12H447V12H448V12H449V12H450V12H451V12H452V12H453V12H454V12H455V12H456V12H457V12H458V12H459V12H460V12H461V12H462V12H463V12H464V12H465V12H466V12H467V12H468V12H469V12H470V12H471V12H472V12H473V12H474V12H475V12H476V12H477V12H478V12H479V12H480V12H481V12H482V12H483V12H484V12H485V12H486V12H487V12H488V12H489V12H490V12H491V12H492V12H493V11H494V12H495V12H496V12H497V12H498V12H499V12H500V12H501V12H502V12H503V12H504V12H505V11H506V12H507V12H508V12H509V12H510V12H511V12H512V12H513V12H514V12H515V12H516V12H517V11H518V11H519V12H520V12H521V11H522V10H523V12H524V12H525V12H526V12H527V12H528V12H529V12H530V12H531V12H532V12H533V12H534V12H535V12H536V11H537V12H538V12H539V12H540V12H541V12H542V12H543V12H544V12H545V12H546V12H547V12H548V10H549V12H550V12H551V203L70 206Z"/>
<path fill="#880000" d="M551 13 L555 8 L556 13 L560 13 L568 5 L569 12 L575 12 L580 9 L580 202.5 L551 203 Z" shape-rendering="auto"/>
<rect x="552" y="4" width="1" height="3" fill="#000"/>
<rect x="552" y="4" width="1" height="1" fill="#7a7a7a"/>
<rect x="554" y="4" width="6" height="3" fill="#000"/>
<rect x="554" y="4" width="6" height="1" fill="#7a7a7a"/>
<rect x="564" y="4" width="9" height="3" fill="#000"/>
<rect x="564" y="4" width="9" height="1" fill="#7a7a7a"/>
<rect x="574" y="4" width="2" height="3" fill="#000"/>
<rect x="574" y="4" width="2" height="1" fill="#7a7a7a"/>
<rect x="611" y="4" width="29" height="197" fill="#880000"/>
<rect x="641" y="4" width="29" height="197" fill="#880000"/>
<rect x="700" y="4" width="1" height="196" fill="#880000"/>
<rect x="674" y="185" width="32" height="8" fill="#880000"/>
<path fill="#880000" d="M706 4 H911 V200 L706 201 Z"/>
<path fill="#880000" d="M939 11V11H940V11H941V11H942V11H943V12H944V11H945V11H946V11H947V11H948V12H949V11H950V11H951V12H952V12H953V11H954V11H955V12H956V11H957V11H958V11H959V11H960V11H961V12H962V12H963V11H964V11H965V11H966V11H967V10H968V11H969V9H970V12H971V11H972V11H973V12H974V11H975V11H976V12H977V12H978V9H979V11H980V11H981V12H982V11H983V11H984V11H985V11H986V11H987V10H988V11H989V11H990V11H991V11H992V12H993V9H994V12H995V11H996V12H997V9H998V9H999V11H1000V11H1001V9H1002V11H1003V12H1004V11H1005V10H1006V12H1007V10H1008V11H1009V11H1010V11H1011V12H1012V12H1013V11H1014V10H1015V9H1016V12H1017V11H1018V9H1019V11H1020V12H1021V11H1022V10H1023V12H1024V11H1025V11H1026V10H1027V11H1028V12H1029V10H1030V11H1031V11H1032V11H1033V11H1034V11H1035V11H1036V11H1037V11H1038V10H1039V11H1040V12H1041V11H1042V10H1043V10H1044V10H1045V11H1046V9H1047V11H1048V12H1049V12H1050V7H1051V11H1052V11H1053V11H1054V11H1055V11H1056V12H1057V11H1058V11H1059V11H1060V11H1061V11H1062V11H1063V11H1064V11H1065V10H1066V11H1067V10H1068V10H1069V11H1070V11H1071V8H1072V11H1073V10H1074V10H1075V11H1076V9H1077V11H1078V11H1079V10H1080V11H1081V10H1082V11H1083V11H1084V11H1085V11H1086V11H1087V11H1088V11H1089V11H1090V11H1091V10H1092V10H1093V11H1094V10H1095V9H1096V10H1097V10H1098V11H1099V11H1100V11H1101V10H1102V11H1103V11H1104V11H1105V10H1106V10H1107V11H1108V10H1109V11H1110V7H1111V10H1112V11H1113V11H1114V11H1115V10H1116V10H1117V11H1118V11H1119V11H1120V11H1121V10H1122V11H1123V8H1124V11H1125V11H1126V10H1127V10H1128V10H1129V10H1130V10H1131V10H1132V10H1133V10H1134V11H1135V10H1136V10H1137V11H1138V10H1139V11H1140V10H1141V7H1142V10H1143V11H1144V11H1145V10H1146V10H1147V10H1148V10H1149V9H1150V11H1151V11H1152V11H1153V10H1154V10H1155V11H1156V11H1157V11H1158V11H1159V9H1160V11H1161V11H1162V10H1163V11H1164V11H1165V11H1166V11H1167V11H1168V11H1169V11H1170V11H1171V10H1172V10H1173V10H1174V11H1175V11H1176V11H1177V11H1178V11H1179V9H1180V10H1181V11H1182V11H1183V10H1184V11H1185V10H1186V8H1187V11H1188V11H1189V8H1190V10H1191V11H1192V11H1193V8H1194V10H1195V10H1196V10H1197V11H1198V9H1199V10H1200V11H1201V10H1202V10H1203V9H1204V10H1205V10H1206V10H1207V11H1208V10H1209V11H1210V11H1211V10H1212V11H1213V10H1214V11H1215V11H1216V10H1217V10H1218V11H1219V11H1220V10H1221V10H1222V10H1223V11H1224V10H1225V11H1226V11H1227V10H1228V10H1229V11H1230V10H1231V10H1232V10H1233V10H1234V10H1235V10H1236V10H1237V9H1238V11H1239V10H1240V10H1241V11H1242V11H1243V11H1244V10H1245V11H1246V11H1247V10H1248V10H1249V11H1250V11H1251V10H1252V10H1253V10H1254V9H1255V10H1256V10H1257V10H1258V10H1259V11H1260V10H1261V10H1262V10H1263V10H1264V7H1265V10H1266V10H1267V10H1268V10H1269V10H1270V206L939 202Z"/>
<rect x="74" y="17" width="2" height="1" fill="#980000"/>
<rect x="76" y="17" width="3" height="1" fill="#980000"/>
<rect x="80" y="17" width="2" height="1" fill="#980000"/>
<rect x="82" y="17" width="2" height="1" fill="#980000"/>
<rect x="90" y="17" width="3" height="1" fill="#980000"/>
<rect x="92" y="17" width="3" height="1" fill="#980000"/>
<rect x="94" y="18" width="2" height="1" fill="#980000"/>
<rect x="100" y="17" width="3" height="1" fill="#980000"/>
<rect x="102" y="17" width="1" height="1" fill="#980000"/>
<rect x="104" y="17" width="2" height="1" fill="#980000"/>
<rect x="106" y="17" width="1" height="1" fill="#980000"/>
<rect x="112" y="17" width="3" height="1" fill="#980000"/>
<rect x="118" y="18" width="1" height="1" fill="#980000"/>
<rect x="120" y="17" width="1" height="1" fill="#980000"/>
<rect x="122" y="17" width="3" height="1" fill="#980000"/>
<rect x="124" y="18" width="3" height="1" fill="#980000"/>
<rect x="126" y="17" width="2" height="1" fill="#980000"/>
<rect x="130" y="17" width="2" height="1" fill="#980000"/>
<rect x="132" y="17" width="2" height="1" fill="#980000"/>
<rect x="134" y="17" width="1" height="1" fill="#980000"/>
<rect x="138" y="17" width="3" height="1" fill="#980000"/>
<rect x="140" y="18" width="1" height="1" fill="#980000"/>
<rect x="148" y="17" width="3" height="1" fill="#980000"/>
<rect x="150" y="17" width="1" height="1" fill="#980000"/>
<rect x="152" y="17" width="2" height="1" fill="#980000"/>
<rect x="154" y="17" width="1" height="1" fill="#980000"/>
<rect x="164" y="18" width="1" height="1" fill="#980000"/>
<rect x="168" y="17" width="2" height="1" fill="#980000"/>
<rect x="172" y="17" width="3" height="1" fill="#980000"/>
<rect x="174" y="17" width="1" height="1" fill="#980000"/>
<rect x="176" y="18" width="1" height="1" fill="#980000"/>
<rect x="178" y="17" width="3" height="1" fill="#980000"/>
<rect x="180" y="18" width="2" height="1" fill="#980000"/>
<rect x="182" y="17" width="2" height="1" fill="#980000"/>
<rect x="186" y="18" width="1" height="1" fill="#980000"/>
<rect x="188" y="17" width="1" height="1" fill="#980000"/>
<rect x="192" y="18" width="2" height="1" fill="#980000"/>
<rect x="194" y="18" width="3" height="1" fill="#980000"/>
<rect x="196" y="17" width="1" height="1" fill="#980000"/>
<rect x="200" y="18" width="1" height="1" fill="#980000"/>
<rect x="208" y="17" width="1" height="1" fill="#980000"/>
<rect x="218" y="18" width="1" height="1" fill="#980000"/>
<rect x="224" y="17" width="3" height="1" fill="#980000"/>
<rect x="226" y="17" width="1" height="1" fill="#980000"/>
<rect x="232" y="17" width="2" height="1" fill="#980000"/>
<rect x="238" y="18" width="1" height="1" fill="#980000"/>
<rect x="240" y="18" width="3" height="1" fill="#980000"/>
<rect x="242" y="17" width="1" height="1" fill="#980000"/>
<rect x="244" y="17" width="2" height="1" fill="#980000"/>
<rect x="250" y="18" width="1" height="1" fill="#980000"/>
<rect x="254" y="18" width="1" height="1" fill="#980000"/>
<rect x="256" y="17" width="2" height="1" fill="#980000"/>
<rect x="258" y="17" width="2" height="1" fill="#980000"/>
<rect x="262" y="18" width="2" height="1" fill="#980000"/>
<rect x="268" y="17" width="2" height="1" fill="#980000"/>
<rect x="272" y="17" width="1" height="1" fill="#980000"/>
<rect x="274" y="17" width="3" height="1" fill="#980000"/>
<rect x="276" y="17" width="1" height="1" fill="#980000"/>
<rect x="280" y="17" width="2" height="1" fill="#980000"/>
<rect x="288" y="17" width="1" height="1" fill="#980000"/>
<rect x="290" y="18" width="3" height="1" fill="#980000"/>
<rect x="294" y="17" width="2" height="1" fill="#980000"/>
<rect x="300" y="17" width="3" height="1" fill="#980000"/>
<rect x="302" y="18" width="3" height="1" fill="#980000"/>
<rect x="304" y="17" width="1" height="1" fill="#980000"/>
<rect x="306" y="18" width="3" height="1" fill="#980000"/>
<rect x="308" y="18" width="1" height="1" fill="#980000"/>
<rect x="310" y="17" width="1" height="1" fill="#980000"/>
<rect x="318" y="17" width="3" height="1" fill="#980000"/>
<rect x="324" y="18" width="2" height="1" fill="#980000"/>
<rect x="326" y="18" width="2" height="1" fill="#980000"/>
<rect x="330" y="18" width="3" height="1" fill="#980000"/>
<rect x="338" y="17" width="1" height="1" fill="#980000"/>
<rect x="342" y="18" width="1" height="1" fill="#980000"/>
<rect x="346" y="17" width="3" height="1" fill="#980000"/>
<rect x="350" y="18" width="2" height="1" fill="#980000"/>
<rect x="352" y="18" width="1" height="1" fill="#980000"/>
<rect x="354" y="17" width="2" height="1" fill="#980000"/>
<rect x="356" y="17" width="1" height="1" fill="#980000"/>
<rect x="360" y="17" width="1" height="1" fill="#980000"/>
<rect x="362" y="18" width="1" height="1" fill="#980000"/>
<rect x="370" y="18" width="2" height="1" fill="#980000"/>
<rect x="372" y="17" width="3" height="1" fill="#980000"/>
<rect x="376" y="18" width="2" height="1" fill="#980000"/>
<rect x="378" y="17" width="1" height="1" fill="#980000"/>
<rect x="380" y="17" width="3" height="1" fill="#980000"/>
<rect x="382" y="18" width="1" height="1" fill="#980000"/>
<rect x="384" y="18" width="2" height="1" fill="#980000"/>
<rect x="386" y="17" width="1" height="1" fill="#980000"/>
<rect x="388" y="17" width="3" height="1" fill="#980000"/>
<rect x="392" y="18" width="2" height="1" fill="#980000"/>
<rect x="398" y="18" width="3" height="1" fill="#980000"/>
<rect x="400" y="17" width="1" height="1" fill="#980000"/>
<rect x="402" y="17" width="2" height="1" fill="#980000"/>
<rect x="404" y="17" width="3" height="1" fill="#980000"/>
<rect x="406" y="17" width="1" height="1" fill="#980000"/>
<rect x="408" y="17" width="2" height="1" fill="#980000"/>
<rect x="410" y="17" width="1" height="1" fill="#980000"/>
<rect x="412" y="17" width="3" height="1" fill="#980000"/>
<rect x="420" y="17" width="1" height="1" fill="#980000"/>
<rect x="422" y="17" width="3" height="1" fill="#980000"/>
<rect x="424" y="18" width="3" height="1" fill="#980000"/>
<rect x="426" y="17" width="1" height="1" fill="#980000"/>
<rect x="428" y="18" width="2" height="1" fill="#980000"/>
<rect x="432" y="17" width="3" height="1" fill="#980000"/>
<rect x="434" y="17" width="1" height="1" fill="#980000"/>
<rect x="438" y="17" width="2" height="1" fill="#980000"/>
<rect x="442" y="18" width="3" height="1" fill="#980000"/>
<rect x="446" y="18" width="1" height="1" fill="#980000"/>
<rect x="448" y="17" width="1" height="1" fill="#980000"/>
<rect x="450" y="17" width="1" height="1" fill="#980000"/>
<rect x="454" y="17" width="1" height="1" fill="#980000"/>
<rect x="456" y="17" width="2" height="1" fill="#980000"/>
<rect x="458" y="17" width="1" height="1" fill="#980000"/>
<rect x="464" y="17" width="3" height="1" fill="#980000"/>
<rect x="466" y="18" width="3" height="1" fill="#980000"/>
<rect x="468" y="18" width="3" height="1" fill="#980000"/>
<rect x="470" y="17" width="2" height="1" fill="#980000"/>
<rect x="472" y="17" width="3" height="1" fill="#980000"/>
<rect x="488" y="17" width="2" height="1" fill="#980000"/>
<rect x="494" y="17" width="3" height="1" fill="#980000"/>
<rect x="498" y="17" width="3" height="1" fill="#980000"/>
<rect x="506" y="18" width="3" height="1" fill="#980000"/>
<rect x="508" y="18" width="2" height="1" fill="#980000"/>
<rect x="510" y="17" width="3" height="1" fill="#980000"/>
<rect x="514" y="17" width="3" height="1" fill="#980000"/>
<rect x="516" y="18" width="3" height="1" fill="#980000"/>
<rect x="522" y="17" width="1" height="1" fill="#980000"/>
<rect x="524" y="17" width="2" height="1" fill="#980000"/>
<rect x="526" y="17" width="3" height="1" fill="#980000"/>
<rect x="530" y="17" width="1" height="1" fill="#980000"/>
<rect x="534" y="17" width="1" height="1" fill="#980000"/>
<rect x="536" y="18" width="2" height="1" fill="#980000"/>
<rect x="538" y="17" width="1" height="1" fill="#980000"/>
<rect x="540" y="17" width="3" height="1" fill="#980000"/>
<rect x="544" y="17" width="2" height="1" fill="#980000"/>
<rect x="546" y="18" width="3" height="1" fill="#980000"/>
<rect x="548" y="17" width="1" height="1" fill="#980000"/>
<rect x="552" y="17" width="2" height="1" fill="#980000"/>
<rect x="554" y="18" width="3" height="1" fill="#980000"/>
<rect x="558" y="17" width="3" height="1" fill="#980000"/>
<rect x="560" y="17" width="2" height="1" fill="#980000"/>
<rect x="562" y="17" width="1" height="1" fill="#980000"/>
<rect x="566" y="17" width="3" height="1" fill="#980000"/>
<rect x="574" y="17" width="1" height="1" fill="#980000"/>
<rect x="578" y="17" width="3" height="1" fill="#980000"/>
<rect x="613" y="18" width="2" height="1" fill="#980000"/>
<rect x="617" y="17" width="1" height="1" fill="#980000"/>
<rect x="619" y="17" width="2" height="1" fill="#980000"/>
<rect x="623" y="18" width="1" height="1" fill="#980000"/>
<rect x="625" y="17" width="3" height="1" fill="#980000"/>
<rect x="629" y="18" width="2" height="1" fill="#980000"/>
<rect x="631" y="17" width="2" height="1" fill="#980000"/>
<rect x="633" y="17" width="1" height="1" fill="#980000"/>
<rect x="639" y="17" width="2" height="1" fill="#980000"/>
<rect x="643" y="17" width="3" height="1" fill="#980000"/>
<rect x="647" y="17" width="3" height="1" fill="#980000"/>
<rect x="649" y="18" width="1" height="1" fill="#980000"/>
<rect x="651" y="17" width="1" height="1" fill="#980000"/>
<rect x="653" y="17" width="3" height="1" fill="#980000"/>
<rect x="655" y="17" width="1" height="1" fill="#980000"/>
<rect x="657" y="17" width="1" height="1" fill="#980000"/>
<rect x="665" y="18" width="2" height="1" fill="#980000"/>
<rect x="669" y="17" width="3" height="1" fill="#980000"/>
<rect x="706" y="18" width="2" height="1" fill="#980000"/>
<rect x="708" y="17" width="3" height="1" fill="#980000"/>
<rect x="710" y="17" width="1" height="1" fill="#980000"/>
<rect x="712" y="17" width="3" height="1" fill="#980000"/>
<rect x="714" y="17" width="2" height="1" fill="#980000"/>
<rect x="716" y="17" width="3" height="1" fill="#980000"/>
<rect x="718" y="18" width="3" height="1" fill="#980000"/>
<rect x="728" y="17" width="2" height="1" fill="#980000"/>
<rect x="730" y="17" width="2" height="1" fill="#980000"/>
<rect x="736" y="17" width="3" height="1" fill="#980000"/>
<rect x="738" y="17" width="2" height="1" fill="#980000"/>
<rect x="742" y="17" width="1" height="1" fill="#980000"/>
<rect x="746" y="18" width="2" height="1" fill="#980000"/>
<rect x="748" y="17" width="1" height="1" fill="#980000"/>
<rect x="750" y="17" width="1" height="1" fill="#980000"/>
<rect x="754" y="17" width="3" height="1" fill="#980000"/>
<rect x="756" y="17" width="2" height="1" fill="#980000"/>
<rect x="764" y="17" width="2" height="1" fill="#980000"/>
<rect x="766" y="18" width="2" height="1" fill="#980000"/>
<rect x="768" y="17" width="1" height="1" fill="#980000"/>
<rect x="770" y="17" width="2" height="1" fill="#980000"/>
<rect x="772" y="17" width="2" height="1" fill="#980000"/>
<rect x="776" y="17" width="1" height="1" fill="#980000"/>
<rect x="784" y="17" width="1" height="1" fill="#980000"/>
<rect x="786" y="17" width="2" height="1" fill="#980000"/>
<rect x="788" y="18" width="3" height="1" fill="#980000"/>
<rect x="794" y="18" width="2" height="1" fill="#980000"/>
<rect x="798" y="17" width="3" height="1" fill="#980000"/>
<rect x="800" y="17" width="3" height="1" fill="#980000"/>
<rect x="802" y="17" width="1" height="1" fill="#980000"/>
<rect x="810" y="17" width="2" height="1" fill="#980000"/>
<rect x="812" y="18" width="2" height="1" fill="#980000"/>
<rect x="814" y="17" width="1" height="1" fill="#980000"/>
<rect x="818" y="17" width="3" height="1" fill="#980000"/>
<rect x="820" y="17" width="1" height="1" fill="#980000"/>
<rect x="822" y="17" width="1" height="1" fill="#980000"/>
<rect x="826" y="17" width="3" height="1" fill="#980000"/>
<rect x="828" y="18" width="3" height="1" fill="#980000"/>
<rect x="830" y="18" width="2" height="1" fill="#980000"/>
<rect x="836" y="17" width="1" height="1" fill="#980000"/>
<rect x="838" y="17" width="1" height="1" fill="#980000"/>
<rect x="842" y="17" width="2" height="1" fill="#980000"/>
<rect x="846" y="18" width="3" height="1" fill="#980000"/>
<rect x="848" y="18" width="3" height="1" fill="#980000"/>
<rect x="850" y="17" width="2" height="1" fill="#980000"/>
<rect x="852" y="17" width="1" height="1" fill="#980000"/>
<rect x="856" y="17" width="1" height="1" fill="#980000"/>
<rect x="858" y="18" width="2" height="1" fill="#980000"/>
<rect x="862" y="17" width="2" height="1" fill="#980000"/>
<rect x="868" y="18" width="1" height="1" fill="#980000"/>
<rect x="876" y="18" width="2" height="1" fill="#980000"/>
<rect x="878" y="18" width="1" height="1" fill="#980000"/>
<rect x="880" y="18" width="2" height="1" fill="#980000"/>
<rect x="882" y="17" width="2" height="1" fill="#980000"/>
<rect x="890" y="17" width="2" height="1" fill="#980000"/>
<rect x="896" y="17" width="2" height="1" fill="#980000"/>
<rect x="898" y="17" width="3" height="1" fill="#980000"/>
<rect x="900" y="18" width="1" height="1" fill="#980000"/>
<rect x="902" y="18" width="3" height="1" fill="#980000"/>
<rect x="908" y="17" width="3" height="1" fill="#980000"/>
<rect x="939" y="17" width="2" height="1" fill="#980000"/>
<rect x="943" y="18" width="2" height="1" fill="#980000"/>
<rect x="951" y="18" width="1" height="1" fill="#980000"/>
<rect x="953" y="17" width="3" height="1" fill="#980000"/>
<rect x="955" y="17" width="3" height="1" fill="#980000"/>
<rect x="959" y="17" width="1" height="1" fill="#980000"/>
<rect x="961" y="17" width="3" height="1" fill="#980000"/>
<rect x="965" y="17" width="2" height="1" fill="#980000"/>
<rect x="967" y="17" width="2" height="1" fill="#980000"/>
<rect x="969" y="18" width="2" height="1" fill="#980000"/>
<rect x="973" y="17" width="2" height="1" fill="#980000"/>
<rect x="981" y="17" width="3" height="1" fill="#980000"/>
<rect x="983" y="18" width="2" height="1" fill="#980000"/>
<rect x="985" y="17" width="1" height="1" fill="#980000"/>
<rect x="991" y="17" width="2" height="1" fill="#980000"/>
<rect x="993" y="18" width="1" height="1" fill="#980000"/>
<rect x="997" y="18" width="3" height="1" fill="#980000"/>
<rect x="999" y="18" width="2" height="1" fill="#980000"/>
<rect x="1003" y="17" width="1" height="1" fill="#980000"/>
<rect x="1005" y="17" width="2" height="1" fill="#980000"/>
<rect x="1007" y="17" width="1" height="1" fill="#980000"/>
<rect x="1015" y="18" width="3" height="1" fill="#980000"/>
<rect x="1017" y="17" width="1" height="1" fill="#980000"/>
<rect x="1019" y="18" width="2" height="1" fill="#980000"/>
<rect x="1023" y="18" width="2" height="1" fill="#980000"/>
<rect x="1025" y="17" width="1" height="1" fill="#980000"/>
<rect x="1027" y="17" width="3" height="1" fill="#980000"/>
<rect x="1029" y="17" width="2" height="1" fill="#980000"/>
<rect x="1033" y="18" width="1" height="1" fill="#980000"/>
<rect x="1035" y="17" width="1" height="1" fill="#980000"/>
<rect x="1039" y="18" width="3" height="1" fill="#980000"/>
<rect x="1043" y="17" width="3" height="1" fill="#980000"/>
<rect x="1047" y="18" width="3" height="1" fill="#980000"/>
<rect x="1049" y="17" width="3" height="1" fill="#980000"/>
<rect x="1051" y="17" width="3" height="1" fill="#980000"/>
<rect x="1053" y="18" width="3" height="1" fill="#980000"/>
<rect x="1057" y="17" width="3" height="1" fill="#980000"/>
<rect x="1059" y="18" width="3" height="1" fill="#980000"/>
<rect x="1061" y="17" width="2" height="1" fill="#980000"/>
<rect x="1063" y="17" width="3" height="1" fill="#980000"/>
<rect x="1065" y="17" width="3" height="1" fill="#980000"/>
<rect x="1073" y="17" width="2" height="1" fill="#980000"/>
<rect x="1075" y="17" width="2" height="1" fill="#980000"/>
<rect x="1079" y="17" width="2" height="1" fill="#980000"/>
<rect x="1081" y="17" width="1" height="1" fill="#980000"/>
<rect x="1083" y="18" width="2" height="1" fill="#980000"/>
<rect x="1085" y="17" width="3" height="1" fill="#980000"/>
<rect x="1087" y="17" width="3" height="1" fill="#980000"/>
<rect x="1089" y="17" width="3" height="1" fill="#980000"/>
<rect x="1093" y="18" width="1" height="1" fill="#980000"/>
<rect x="1099" y="17" width="2" height="1" fill="#980000"/>
<rect x="1103" y="17" width="3" height="1" fill="#980000"/>
<rect x="1105" y="18" width="3" height="1" fill="#980000"/>
<rect x="1111" y="17" width="2" height="1" fill="#980000"/>
<rect x="1113" y="17" width="3" height="1" fill="#980000"/>
<rect x="1115" y="17" width="1" height="1" fill="#980000"/>
<rect x="1117" y="18" width="1" height="1" fill="#980000"/>
<rect x="1119" y="17" width="3" height="1" fill="#980000"/>
<rect x="1121" y="17" width="2" height="1" fill="#980000"/>
<rect x="1123" y="17" width="1" height="1" fill="#980000"/>
<rect x="1125" y="17" width="2" height="1" fill="#980000"/>
<rect x="1129" y="18" width="1" height="1" fill="#980000"/>
<rect x="1133" y="17" width="1" height="1" fill="#980000"/>
<rect x="1135" y="17" width="3" height="1" fill="#980000"/>
<rect x="1139" y="18" width="2" height="1" fill="#980000"/>
<rect x="1147" y="17" width="1" height="1" fill="#980000"/>
<rect x="1151" y="18" width="1" height="1" fill="#980000"/>
<rect x="1153" y="17" width="1" height="1" fill="#980000"/>
<rect x="1155" y="18" width="1" height="1" fill="#980000"/>
<rect x="1157" y="18" width="3" height="1" fill="#980000"/>
<rect x="1161" y="17" width="1" height="1" fill="#980000"/>
<rect x="1165" y="17" width="1" height="1" fill="#980000"/>
<rect x="1167" y="17" width="3" height="1" fill="#980000"/>
<rect x="1177" y="17" width="3" height="1" fill="#980000"/>
<rect x="1179" y="18" width="2" height="1" fill="#980000"/>
<rect x="1187" y="17" width="1" height="1" fill="#980000"/>
<rect x="1189" y="17" width="1" height="1" fill="#980000"/>
<rect x="1199" y="17" width="3" height="1" fill="#980000"/>
<rect x="1203" y="17" width="2" height="1" fill="#980000"/>
<rect x="1205" y="17" width="3" height="1" fill="#980000"/>
<rect x="1207" y="18" width="2" height="1" fill="#980000"/>
<rect x="1209" y="17" width="1" height="1" fill="#980000"/>
<rect x="1217" y="17" width="2" height="1" fill="#980000"/>
<rect x="1221" y="17" width="3" height="1" fill="#980000"/>
<rect x="1223" y="17" width="1" height="1" fill="#980000"/>
<rect x="1225" y="17" width="3" height="1" fill="#980000"/>
<rect x="1229" y="18" width="1" height="1" fill="#980000"/>
<rect x="1231" y="17" width="3" height="1" fill="#980000"/>
<rect x="1233" y="17" width="1" height="1" fill="#980000"/>
<rect x="1235" y="17" width="1" height="1" fill="#980000"/>
<rect x="1237" y="17" width="3" height="1" fill="#980000"/>
<rect x="1241" y="17" width="1" height="1" fill="#980000"/>
<rect x="1247" y="18" width="3" height="1" fill="#980000"/>
<rect x="1249" y="17" width="3" height="1" fill="#980000"/>
<rect x="1251" y="18" width="3" height="1" fill="#980000"/>
<rect x="1253" y="18" width="1" height="1" fill="#980000"/>
<rect x="1255" y="17" width="2" height="1" fill="#980000"/>
<rect x="1259" y="18" width="2" height="1" fill="#980000"/>
<rect x="1261" y="17" width="2" height="1" fill="#980000"/>
<rect x="1265" y="17" width="2" height="1" fill="#980000"/>
<rect x="1267" y="17" width="2" height="1" fill="#980000"/>
<rect x="70" y="188" width="510" height="2" fill="#ff0808"/>
<path fill="none" stroke="#ff0808" stroke-width="2" shape-rendering="auto" d="M580 194 L586 188.5 L611 188"/>
<rect x="611" y="188" width="300" height="2" fill="#ff0808"/>
<rect x="939" y="188" width="331" height="2" fill="#ff0808"/>
<path fill="none" stroke="#9a0000" stroke-width="5" shape-rendering="auto" d="M912 184 L918 187 L926 192 L939 194"/>
<path fill="none" stroke="#ff0808" stroke-width="2" shape-rendering="auto" d="M911 181 L913 185 L918 186 L926 191 L939 192"/>
<path fill="#c8006e" d="M70 215V215H71V215H72V215H73V215H74V215H75V215H76V215H77V215H78V215H79V214H80V215H81V214H82V215H83V215H84V223H83V223H82V225H81V223H80V223H79V224H78V223H77V223H76V223H75V223H74V224H73V223H72V223H71V223H70Z"/>
<rect x="70" y="219" width="14" height="2" fill="#ff6cbc"/>
<path fill="#c8006e" d="M84 262V262H85V262H86V262H87V263H88V262H89V262H90V262H91V263H92V262H93V262H94V263H95V263H96V263H97V263H98V262H99V271H98V271H97V271H96V271H95V271H94V271H93V272H92V271H91V271H90V271H89V271H88V271H87V271H86V271H85V271H84Z"/>
<rect x="84" y="266" width="15" height="2" fill="#ff6cbc"/>
<rect x="84" y="219" width="1" height="73" fill="#d0107f"/>
<path fill="#c8006e" d="M99 215V215H100V215H101V215H102V215H103V215H104V215H105V215H106V215H107V214H108V215H109V215H110V215H111V215H112V215H113V215H114V223H113V223H112V224H111V224H110V223H109V224H108V224H107V224H106V225H105V224H104V224H103V224H102V224H101V224H100V223H99Z"/>
<rect x="99" y="219" width="15" height="2" fill="#ff6cbc"/>
<path fill="#c8006e" d="M114 261V261H115V263H116V263H117V262H118V263H119V263H120V262H121V262H122V262H123V262H124V262H125V263H126V262H127V262H128V262H129V271H128V271H127V272H126V271H125V272H124V272H123V271H122V271H121V272H120V272H119V272H118V271H117V271H116V271H115V271H114Z"/>
<rect x="114" y="266" width="15" height="2" fill="#ff6cbc"/>
<rect x="99" y="196" width="1" height="71" fill="#d0107f"/>
<rect x="114" y="219" width="1" height="73" fill="#d0107f"/>
<path fill="#c8006e" d="M129 215V215H130V215H131V214H132V215H133V215H134V214H135V215H136V215H137V215H138V215H139V215H140V215H141V215H142V215H143V215H144V224H143V224H142V223H141V224H140V224H139V224H138V223H137V224H136V223H135V224H134V223H133V224H132V225H131V224H130V224H129Z"/>
<rect x="129" y="219" width="15" height="2" fill="#ff6cbc"/>
<path fill="#c8006e" d="M144 263V263H145V263H146V263H147V262H148V263H149V262H150V262H151V262H152V263H153V262H154V262H155V262H156V262H157V262H158V263H159V271H158V272H157V271H156V271H155V271H154V271H153V271H152V271H151V272H150V271H149V271H148V271H147V271H146V271H145V271H144Z"/>
<rect x="144" y="266" width="15" height="2" fill="#ff6cbc"/>
<rect x="129" y="196" width="1" height="71" fill="#d0107f"/>
<rect x="144" y="219" width="1" height="73" fill="#d0107f"/>
<path fill="#c8006e" d="M159 215V215H160V215H161V215H162V215H163V215H164V215H165V215H166V215H167V215H168V215H169V215H170V214H171V215H172V215H173V215H174V223H173V224H172V224H171V224H170V223H169V223H168V224H167V224H166V224H165V224H164V223H163V224H162V223H161V223H160V224H159Z"/>
<rect x="159" y="219" width="15" height="2" fill="#ff6cbc"/>
<path fill="#c8006e" d="M174 263V263H175V262H176V262H177V262H178V262H179V262H180V262H181V262H182V263H183V262H184V263H185V262H186V263H187V263H188V262H189V272H188V271H187V272H186V271H185V273H184V271H183V272H182V271H181V271H180V271H179V271H178V271H177V271H176V271H175V271H174Z"/>
<rect x="174" y="266" width="15" height="2" fill="#ff6cbc"/>
<rect x="159" y="196" width="1" height="71" fill="#d0107f"/>
<rect x="174" y="219" width="1" height="73" fill="#d0107f"/>
<path fill="#c8006e" d="M189 214V214H190V215H191V215H192V215H193V215H194V215H195V215H196V215H197V215H198V214H199V215H200V215H201V215H202V215H203V215H204V223H203V224H202V224H201V224H200V224H199V224H198V223H197V223H196V224H195V223H194V224H193V224H192V223H191V224H190V225H189Z"/>
<rect x="189" y="219" width="15" height="2" fill="#ff6cbc"/>
<path fill="#c8006e" d="M204 262V262H205V262H206V263H207V262H208V262H209V263H210V262H211V263H212V262H213V263H214V263H215V262H216V262H217V262H218V262H219V271H218V271H217V272H216V272H215V271H214V271H213V271H212V271H211V271H210V272H209V271H208V271H207V272H206V271H205V271H204Z"/>
<rect x="204" y="266" width="15" height="2" fill="#ff6cbc"/>
<rect x="189" y="196" width="1" height="71" fill="#d0107f"/>
<rect x="204" y="219" width="1" height="73" fill="#d0107f"/>
<path fill="#c8006e" d="M219 215V215H220V214H221V215H222V214H223V215H224V215H225V215H226V215H227V215H228V215H229V215H230V215H231V215H232V215H233V214H234V226H233V223H232V224H231V223H230V224H229V223H228V224H227V223H226V223H225V223H224V223H223V224H222V223H221V223H220V223H219Z"/>
<rect x="219" y="219" width="15" height="2" fill="#ff6cbc"/>
<path fill="#c8006e" d="M234 262V262H235V262H236V262H237V263H238V262H239V262H240V263H241V262H242V262H243V262H244V262H245V263H246V262H247V263H248V262H249V273H248V271H247V271H246V271H245V271H244V271H243V271H242V271H241V271H240V271H239V271H238V271H237V271H236V271H235V271H234Z"/>
<rect x="234" y="266" width="15" height="2" fill="#ff6cbc"/>
<rect x="219" y="196" width="1" height="71" fill="#d0107f"/>
<rect x="234" y="219" width="1" height="73" fill="#d0107f"/>
<path fill="#c8006e" d="M249 215V215H250V215H251V215H252V215H253V215H254V214H255V215H256V215H257V215H258V215H259V215H260V214H261V215H262V215H263V215H264V223H263V224H262V223H261V223H260V224H259V223H258V223H257V224H256V223H255V223H254V224H253V224H252V224H251V224H250V223H249Z"/>
<rect x="249" y="219" width="15" height="2" fill="#ff6cbc"/>
<path fill="#c8006e" d="M264 262V262H265V263H266V262H267V262H268V262H269V262H270V262H271V262H272V261H273V262H274V262H275V262H276V263H277V262H278V262H279V271H278V271H277V273H276V271H275V272H274V271H273V271H272V271H271V271H270V272H269V271H268V271H267V272H266V271H265V271H264Z"/>
<rect x="264" y="266" width="15" height="2" fill="#ff6cbc"/>
<rect x="249" y="196" width="1" height="71" fill="#d0107f"/>
<rect x="264" y="219" width="1" height="73" fill="#d0107f"/>
<path fill="#c8006e" d="M279 214V214H280V215H281V215H282V215H283V214H284V215H285V215H286V215H287V215H288V215H289V215H290V215H291V215H292V215H293V215H294V224H293V223H292V223H291V223H290V224H289V224H288V224H287V224H286V224H285V224H284V223H283V223H282V223H281V223H280V224H279Z"/>
<rect x="279" y="219" width="15" height="2" fill="#ff6cbc"/>
<path fill="#c8006e" d="M294 263V263H295V263H296V263H297V262H298V263H299V262H300V263H301V263H302V262H303V262H304V263H305V262H306V262H307V262H308V263H309V271H308V271H307V271H306V271H305V271H304V271H303V271H302V271H301V271H300V272H299V271H298V271H297V271H296V271H295V271H294Z"/>
<rect x="294" y="266" width="15" height="2" fill="#ff6cbc"/>
<rect x="279" y="196" width="1" height="71" fill="#d0107f"/>
<rect x="294" y="219" width="1" height="73" fill="#d0107f"/>
<path fill="#c8006e" d="M309 214V214H310V215H311V215H312V215H313V215H314V214H315V215H316V213H317V215H318V215H319V215H320V215H321V214H322V214H323V215H324V223H323V223H322V225H321V224H320V223H319V223H318V224H317V224H316V224H315V223H314V224H313V223H312V223H311V223H310V224H309Z"/>
<rect x="309" y="219" width="15" height="2" fill="#ff6cbc"/>
<path fill="#c8006e" d="M324 262V262H325V263H326V263H327V262H328V262H329V262H330V262H331V262H332V262H333V262H334V262H335V262H336V262H337V262H338V263H339V271H338V271H337V271H336V271H335V271H334V272H333V271H332V271H331V271H330V271H329V271H328V272H327V271H326V271H325V271H324Z"/>
<rect x="324" y="266" width="15" height="2" fill="#ff6cbc"/>
<rect x="309" y="196" width="1" height="71" fill="#d0107f"/>
<rect x="324" y="219" width="1" height="73" fill="#d0107f"/>
<path fill="#c8006e" d="M339 215V215H340V215H341V215H342V214H343V215H344V215H345V215H346V215H347V215H348V215H349V215H350V215H351V215H352V214H353V214H354V224H353V224H352V225H351V224H350V224H349V224H348V223H347V224H346V224H345V223H344V224H343V224H342V223H341V224H340V224H339Z"/>
<rect x="339" y="219" width="15" height="2" fill="#ff6cbc"/>
<path fill="#c8006e" d="M354 262V262H355V262H356V262H357V262H358V262H359V263H360V263H361V262H362V263H363V262H364V262H365V263H366V263H367V262H368V263H369V272H368V271H367V271H366V272H365V271H364V271H363V271H362V271H361V271H360V271H359V271H358V271H357V271H356V272H355V271H354Z"/>
<rect x="354" y="266" width="15" height="2" fill="#ff6cbc"/>
<rect x="339" y="196" width="1" height="71" fill="#d0107f"/>
<rect x="354" y="219" width="1" height="73" fill="#d0107f"/>
<path fill="#c8006e" d="M369 215V215H370V215H371V215H372V215H373V215H374V215H375V215H376V215H377V214H378V215H379V214H380V215H381V214H382V214H383V215H384V223H383V224H382V224H381V224H380V224H379V223H378V223H377V223H376V224H375V224H374V225H373V224H372V223H371V223H370V224H369Z"/>
<rect x="369" y="219" width="15" height="2" fill="#ff6cbc"/>
<path fill="#c8006e" d="M384 262V262H385V262H386V262H387V262H388V262H389V262H390V262H391V263H392V262H393V261H394V263H395V263H396V262H397V262H398V262H399V271H398V271H397V271H396V271H395V271H394V272H393V271H392V271H391V271H390V271H389V271H388V271H387V271H386V271H385V272H384Z"/>
<rect x="384" y="266" width="15" height="2" fill="#ff6cbc"/>
<rect x="369" y="196" width="1" height="71" fill="#d0107f"/>
<rect x="384" y="219" width="1" height="73" fill="#d0107f"/>
<path fill="#c8006e" d="M399 215V215H400V214H401V215H402V215H403V215H404V215H405V215H406V215H407V215H408V215H409V215H410V215H411V215H412V215H413V214H414V224H413V223H412V223H411V224H410V224H409V224H408V223H407V225H406V226H405V224H404V224H403V223H402V223H401V224H400V224H399Z"/>
<rect x="399" y="219" width="15" height="2" fill="#ff6cbc"/>
<path fill="#c8006e" d="M414 262V262H415V263H416V262H417V262H418V262H419V261H420V262H421V262H422V263H423V261H424V263H425V262H426V261H427V263H428V263H429V271H428V272H427V271H426V271H425V271H424V271H423V271H422V271H421V272H420V271H419V272H418V271H417V271H416V271H415V271H414Z"/>
<rect x="414" y="266" width="15" height="2" fill="#ff6cbc"/>
<rect x="399" y="196" width="1" height="71" fill="#d0107f"/>
<rect x="414" y="219" width="1" height="73" fill="#d0107f"/>
<path fill="#c8006e" d="M429 215V215H430V215H431V214H432V215H433V215H434V215H435V214H436V214H437V214H438V215H439V215H440V215H441V213H442V215H443V215H444V223H443V223H442V223H441V224H440V223H439V224H438V223H437V224H436V223H435V224H434V223H433V223H432V223H431V225H430V224H429Z"/>
<rect x="429" y="219" width="15" height="2" fill="#ff6cbc"/>
<path fill="#c8006e" d="M444 262V262H445V262H446V262H447V263H448V262H449V263H450V263H451V262H452V262H453V262H454V262H455V262H456V262H457V262H458V263H459V271H458V271H457V271H456V271H455V271H454V271H453V271H452V271H451V271H450V271H449V272H448V271H447V271H446V271H445V271H444Z"/>
<rect x="444" y="266" width="15" height="2" fill="#ff6cbc"/>
<rect x="429" y="196" width="1" height="71" fill="#d0107f"/>
<rect x="444" y="219" width="1" height="73" fill="#d0107f"/>
<path fill="#c8006e" d="M459 215V215H460V213H461V214H462V215H463V215H464V215H465V214H466V214H467V215H468V215H469V214H470V215H471V215H472V215H473V215H474V224H473V223H472V224H471V223H470V223H469V223H468V223H467V225H466V223H465V223H464V223H463V224H462V224H461V224H460V223H459Z"/>
<rect x="459" y="219" width="15" height="2" fill="#ff6cbc"/>
<path fill="#c8006e" d="M474 263V263H475V263H476V262H477V263H478V263H479V262H480V263H481V262H482V262H483V263H484V263H485V263H486V262H487V262H488V263H489V271H488V272H487V271H486V271H485V271H484V272H483V271H482V273H481V271H480V271H479V271H478V271H477V271H476V271H475V271H474Z"/>
<rect x="474" y="266" width="15" height="2" fill="#ff6cbc"/>
<rect x="459" y="196" width="1" height="71" fill="#d0107f"/>
<rect x="474" y="219" width="1" height="73" fill="#d0107f"/>
<path fill="#c8006e" d="M489 215V215H490V214H491V215H492V215H493V215H494V215H495V215H496V215H497V215H498V214H499V215H500V215H501V214H502V215H503V215H504V223H503V223H502V224H501V224H500V223H499V223H498V224H497V223H496V224H495V224H494V224H493V223H492V223H491V223H490V223H489Z"/>
<rect x="489" y="219" width="15" height="2" fill="#ff6cbc"/>
<path fill="#c8006e" d="M504 263V263H505V262H506V263H507V262H508V262H509V263H510V262H511V263H512V262H513V263H514V262H515V260H516V263H517V262H518V262H519V272H518V272H517V272H516V271H515V271H514V271H513V271H512V271H511V272H510V271H509V271H508V271H507V271H506V271H505V272H504Z"/>
<rect x="504" y="266" width="15" height="2" fill="#ff6cbc"/>
<rect x="489" y="196" width="1" height="71" fill="#d0107f"/>
<rect x="504" y="219" width="1" height="73" fill="#d0107f"/>
<path fill="#c8006e" d="M519 215V215H520V215H521V214H522V214H523V215H524V215H525V215H526V215H527V215H528V215H529V215H530V215H531V215H532V215H533V214H534V224H533V223H532V224H531V223H530V223H529V223H528V224H527V223H526V223H525V224H524V224H523V224H522V224H521V223H520V223H519Z"/>
<rect x="519" y="219" width="15" height="2" fill="#ff6cbc"/>
<path fill="#c8006e" d="M534 262V262H535V262H536V262H537V263H538V262H539V262H540V263H541V263H542V262H543V263H544V262H545V263H546V262H547V262H548V262H549V271H548V271H547V271H546V271H545V271H544V271H543V272H542V271H541V272H540V271H539V271H538V271H537V271H536V272H535V271H534Z"/>
<rect x="534" y="266" width="15" height="2" fill="#ff6cbc"/>
<rect x="519" y="196" width="1" height="71" fill="#d0107f"/>
<rect x="534" y="219" width="1" height="73" fill="#d0107f"/>
<path fill="#c8006e" d="M549 215V215H550V215H551V215H552V215H553V215H554V215H555V215H556V215H557V215H558V215H559V215H560V214H561V215H562V215H563V215H564V224H563V223H562V224H561V224H560V223H559V223H558V224H557V223H556V223H555V224H554V223H553V224H552V223H551V224H550V224H549Z"/>
<rect x="549" y="219" width="15" height="2" fill="#ff6cbc"/>
<path fill="#c8006e" d="M564 262V262H565V263H566V262H567V262H568V262H569V262H570V263H571V263H572V263H573V263H574V263H575V261H576V262H577V263H578V262H579V271H578V271H577V271H576V271H575V271H574V271H573V271H572V271H571V272H570V271H569V271H568V271H567V271H566V271H565V271H564Z"/>
<rect x="564" y="266" width="15" height="2" fill="#ff6cbc"/>
<rect x="549" y="196" width="1" height="71" fill="#d0107f"/>
<rect x="564" y="219" width="1" height="73" fill="#d0107f"/>
<path fill="#c8006e" d="M579 215V215H580V215H581V215H582V214H583V215H584V215H585V215H586V215H587V215H588V215H589V215H590V214H591V215H592V215H593V215H594V224H593V224H592V223H591V223H590V225H589V223H588V224H587V224H586V223H585V224H584V223H583V224H582V223H581V224H580V224H579Z"/>
<rect x="579" y="219" width="15" height="2" fill="#ff6cbc"/>
<path fill="#c8006e" d="M594 262V262H595V262H596V262H597V262H598V262H599V263H600V262H601V262H602V262H603V263H604V263H605V261H606V262H607V263H608V263H609V271H608V271H607V271H606V271H605V271H604V271H603V271H602V271H601V271H600V272H599V271H598V271H597V271H596V271H595V272H594Z"/>
<rect x="594" y="266" width="15" height="2" fill="#ff6cbc"/>
<rect x="579" y="196" width="1" height="71" fill="#d0107f"/>
<rect x="594" y="219" width="1" height="73" fill="#d0107f"/>
<path fill="#c8006e" d="M609 215V215H610V215H611V215H612V215H613V215H614V215H615V215H616V215H617V215H618V215H619V215H620V215H621V215H622V214H623V215H624V223H623V224H622V224H621V223H620V225H619V223H618V224H617V224H616V224H615V223H614V224H613V224H612V223H611V223H610V224H609Z"/>
<rect x="609" y="219" width="15" height="2" fill="#ff6cbc"/>
<path fill="#c8006e" d="M624 262V262H625V262H626V263H627V262H628V263H629V263H630V263H631V263H632V262H633V262H634V262H635V262H636V263H637V263H638V263H639V272H638V271H637V271H636V271H635V272H634V271H633V271H632V271H631V272H630V271H629V272H628V272H627V271H626V271H625V271H624Z"/>
<rect x="624" y="266" width="15" height="2" fill="#ff6cbc"/>
<rect x="609" y="196" width="1" height="71" fill="#d0107f"/>
<rect x="624" y="219" width="1" height="73" fill="#d0107f"/>
<path fill="#c8006e" d="M639 214V214H640V215H641V215H642V214H643V214H644V215H645V215H646V214H647V214H648V215H649V215H650V215H651V215H652V214H653V215H654V224H653V224H652V224H651V223H650V224H649V224H648V223H647V223H646V224H645V224H644V224H643V224H642V224H641V224H640V223H639Z"/>
<rect x="639" y="219" width="15" height="2" fill="#ff6cbc"/>
<path fill="#c8006e" d="M654 262V262H655V262H656V263H657V262H658V262H659V263H660V263H661V262H662V262H663V262H664V263H665V261H666V262H667V262H668V263H669V271H668V271H667V271H666V272H665V271H664V272H663V273H662V271H661V271H660V271H659V272H658V271H657V271H656V272H655V271H654Z"/>
<rect x="654" y="266" width="15" height="2" fill="#ff6cbc"/>
<rect x="639" y="196" width="1" height="71" fill="#d0107f"/>
<rect x="654" y="219" width="1" height="73" fill="#d0107f"/>
<path fill="#c8006e" d="M669 215V215H670V215H671V214H672V215H673V215H674V214H675V215H676V215H677V214H678V215H679V215H680V215H681V215H682V215H683V215H684V223H683V224H682V223H681V224H680V223H679V223H678V223H677V223H676V224H675V223H674V223H673V223H672V223H671V224H670V223H669Z"/>
<rect x="669" y="219" width="15" height="2" fill="#ff6cbc"/>
<path fill="#c8006e" d="M684 263V263H685V263H686V262H687V262H688V262H689V263H690V262H691V262H692V262H693V262H694V262H695V263H696V263H697V263H698V262H699V271H698V271H697V272H696V271H695V271H694V271H693V272H692V272H691V272H690V271H689V271H688V271H687V272H686V271H685V271H684Z"/>
<rect x="684" y="266" width="15" height="2" fill="#ff6cbc"/>
<rect x="669" y="196" width="1" height="71" fill="#d0107f"/>
<rect x="684" y="219" width="1" height="73" fill="#d0107f"/>
<path fill="#c8006e" d="M699 214V214H700V213H701V215H702V215H703V215H704V215H705V215H706V215H707V215H708V214H709V215H710V215H711V215H712V215H713V214H714V224H713V224H712V223H711V224H710V224H709V223H708V224H707V223H706V223H705V223H704V224H703V224H702V224H701V224H700V223H699Z"/>
<rect x="699" y="219" width="15" height="2" fill="#ff6cbc"/>
<path fill="#c8006e" d="M714 262V262H715V262H716V262H717V263H718V262H719V263H720V262H721V263H722V262H723V262H724V263H725V262H726V263H727V262H728V262H729V271H728V271H727V271H726V271H725V272H724V271H723V272H722V272H721V272H720V271H719V271H718V271H717V271H716V271H715V272H714Z"/>
<rect x="714" y="266" width="15" height="2" fill="#ff6cbc"/>
<rect x="699" y="196" width="1" height="71" fill="#d0107f"/>
<rect x="714" y="219" width="1" height="73" fill="#d0107f"/>
<path fill="#c8006e" d="M729 214V214H730V215H731V215H732V215H733V215H734V214H735V215H736V215H737V215H738V214H739V215H740V215H741V215H742V215H743V215H744V224H743V224H742V223H741V223H740V224H739V224H738V224H737V223H736V223H735V224H734V224H733V224H732V224H731V224H730V223H729Z"/>
<rect x="729" y="219" width="15" height="2" fill="#ff6cbc"/>
<path fill="#c8006e" d="M744 263V263H745V262H746V262H747V263H748V261H749V262H750V263H751V262H752V263H753V262H754V263H755V262H756V262H757V263H758V262H759V271H758V272H757V272H756V272H755V271H754V271H753V271H752V271H751V271H750V271H749V272H748V271H747V271H746V271H745V272H744Z"/>
<rect x="744" y="266" width="15" height="2" fill="#ff6cbc"/>
<rect x="729" y="196" width="1" height="71" fill="#d0107f"/>
<rect x="744" y="219" width="1" height="73" fill="#d0107f"/>
<path fill="#c8006e" d="M759 215V215H760V215H761V214H762V215H763V215H764V215H765V214H766V215H767V215H768V215H769V214H770V215H771V215H772V214H773V215H774V224H773V223H772V224H771V225H770V223H769V223H768V223H767V224H766V224H765V224H764V224H763V224H762V223H761V224H760V224H759Z"/>
<rect x="759" y="219" width="15" height="2" fill="#ff6cbc"/>
<path fill="#c8006e" d="M774 262V262H775V263H776V262H777V263H778V263H779V262H780V262H781V263H782V263H783V263H784V262H785V262H786V262H787V262H788V263H789V271H788V271H787V272H786V271H785V271H784V271H783V271H782V271H781V271H780V271H779V271H778V271H777V272H776V271H775V271H774Z"/>
<rect x="774" y="266" width="15" height="2" fill="#ff6cbc"/>
<rect x="759" y="196" width="1" height="71" fill="#d0107f"/>
<rect x="774" y="219" width="1" height="73" fill="#d0107f"/>
<path fill="#c8006e" d="M789 215V215H790V215H791V214H792V215H793V215H794V215H795V215H796V215H797V215H798V214H799V215H800V215H801V215H802V214H803V215H804V224H803V224H802V224H801V224H800V224H799V223H798V224H797V223H796V223H795V224H794V224H793V225H792V224H791V224H790V223H789Z"/>
<rect x="789" y="219" width="15" height="2" fill="#ff6cbc"/>
<path fill="#c8006e" d="M804 263V263H805V261H806V262H807V262H808V263H809V263H810V262H811V263H812V262H813V263H814V262H815V263H816V263H817V262H818V263H819V272H818V271H817V271H816V271H815V271H814V271H813V271H812V271H811V271H810V272H809V271H808V271H807V271H806V271H805V271H804Z"/>
<rect x="804" y="266" width="15" height="2" fill="#ff6cbc"/>
<rect x="789" y="196" width="1" height="71" fill="#d0107f"/>
<rect x="804" y="219" width="1" height="73" fill="#d0107f"/>
<path fill="#c8006e" d="M819 215V215H820V214H821V215H822V215H823V215H824V215H825V215H826V215H827V215H828V215H829V214H830V214H831V215H832V215H833V215H834V223H833V223H832V223H831V224H830V224H829V224H828V224H827V224H826V225H825V223H824V224H823V223H822V224H821V223H820V223H819Z"/>
<rect x="819" y="219" width="15" height="2" fill="#ff6cbc"/>
<path fill="#c8006e" d="M834 263V263H835V263H836V263H837V263H838V262H839V262H840V262H841V262H842V262H843V262H844V262H845V262H846V262H847V263H848V262H849V272H848V272H847V271H846V271H845V271H844V271H843V272H842V271H841V271H840V271H839V272H838V272H837V271H836V271H835V271H834Z"/>
<rect x="834" y="266" width="15" height="2" fill="#ff6cbc"/>
<rect x="819" y="196" width="1" height="71" fill="#d0107f"/>
<rect x="834" y="219" width="1" height="73" fill="#d0107f"/>
<path fill="#c8006e" d="M849 214V214H850V215H851V213H852V215H853V215H854V215H855V215H856V214H857V215H858V215H859V215H860V215H861V215H862V215H863V215H864V223H863V223H862V224H861V224H860V224H859V223H858V224H857V224H856V224H855V223H854V223H853V224H852V225H851V223H850V223H849Z"/>
<rect x="849" y="219" width="15" height="2" fill="#ff6cbc"/>
<path fill="#c8006e" d="M864 263V263H865V263H866V262H867V263H868V262H869V262H870V262H871V262H872V262H873V263H874V263H875V262H876V262H877V262H878V263H879V271H878V271H877V271H876V271H875V272H874V271H873V272H872V271H871V271H870V271H869V272H868V271H867V271H866V271H865V271H864Z"/>
<rect x="864" y="266" width="15" height="2" fill="#ff6cbc"/>
<rect x="849" y="196" width="1" height="71" fill="#d0107f"/>
<rect x="864" y="219" width="1" height="73" fill="#d0107f"/>
<path fill="#c8006e" d="M879 215V215H880V215H881V215H882V214H883V215H884V215H885V215H886V213H887V215H888V215H889V215H890V214H891V215H892V215H893V214H894V223H893V224H892V224H891V224H890V223H889V223H888V224H887V224H886V223H885V223H884V223H883V224H882V224H881V223H880V224H879Z"/>
<rect x="879" y="219" width="15" height="2" fill="#ff6cbc"/>
<path fill="#c8006e" d="M894 262V262H895V262H896V263H897V262H898V261H899V261H900V263H901V262H902V262H903V262H904V263H905V263H906V263H907V262H908V262H909V271H908V271H907V271H906V272H905V271H904V271H903V271H902V271H901V271H900V271H899V271H898V272H897V272H896V272H895V271H894Z"/>
<rect x="894" y="266" width="15" height="2" fill="#ff6cbc"/>
<rect x="879" y="196" width="1" height="71" fill="#d0107f"/>
<rect x="894" y="219" width="1" height="73" fill="#d0107f"/>
<path fill="#c8006e" d="M909 214V214H910V215H911V215H912V215H913V214H914V215H915V214H916V215H917V215H918V215H919V215H920V215H921V215H922V215H923V214H924V223H923V224H922V224H921V223H920V224H919V224H918V224H917V223H916V223H915V224H914V224H913V223H912V223H911V223H910V223H909Z"/>
<rect x="909" y="219" width="15" height="2" fill="#ff6cbc"/>
<path fill="#c8006e" d="M924 263V263H925V262H926V262H927V262H928V262H929V262H930V263H931V263H932V262H933V263H934V262H935V263H936V263H937V262H938V262H939V271H938V272H937V271H936V271H935V272H934V272H933V271H932V272H931V271H930V271H929V271H928V271H927V271H926V271H925V271H924Z"/>
<rect x="924" y="266" width="15" height="2" fill="#ff6cbc"/>
<rect x="909" y="196" width="1" height="71" fill="#d0107f"/>
<rect x="924" y="219" width="1" height="73" fill="#d0107f"/>
<path fill="#c8006e" d="M939 215V215H940V215H941V215H942V215H943V215H944V215H945V214H946V214H947V214H948V214H949V215H950V215H951V215H952V215H953V215H954V224H953V223H952V224H951V224H950V223H949V225H948V224H947V223H946V224H945V223H944V223H943V224H942V224H941V223H940V224H939Z"/>
<rect x="939" y="219" width="15" height="2" fill="#ff6cbc"/>
<path fill="#c8006e" d="M954 263V263H955V263H956V263H957V261H958V263H959V262H960V263H961V263H962V262H963V262H964V263H965V263H966V263H967V262H968V262H969V271H968V271H967V271H966V271H965V271H964V271H963V271H962V271H961V272H960V271H959V271H958V271H957V271H956V271H955V271H954Z"/>
<rect x="954" y="266" width="15" height="2" fill="#ff6cbc"/>
<rect x="939" y="196" width="1" height="71" fill="#d0107f"/>
<rect x="954" y="219" width="1" height="73" fill="#d0107f"/>
<path fill="#c8006e" d="M969 215V215H970V214H971V215H972V215H973V213H974V215H975V215H976V215H977V215H978V215H979V215H980V215H981V215H982V214H983V215H984V224H983V224H982V224H981V223H980V225H979V223H978V224H977V224H976V223H975V223H974V223H973V224H972V224H971V224H970V224H969Z"/>
<rect x="969" y="219" width="15" height="2" fill="#ff6cbc"/>
<path fill="#c8006e" d="M984 262V262H985V263H986V262H987V262H988V262H989V263H990V262H991V263H992V263H993V262H994V263H995V263H996V261H997V262H998V262H999V271H998V271H997V271H996V271H995V271H994V272H993V271H992V272H991V271H990V272H989V271H988V271H987V271H986V271H985V271H984Z"/>
<rect x="984" y="266" width="15" height="2" fill="#ff6cbc"/>
<rect x="969" y="196" width="1" height="71" fill="#d0107f"/>
<rect x="984" y="219" width="1" height="73" fill="#d0107f"/>
<path fill="#c8006e" d="M999 214V214H1000V214H1001V215H1002V214H1003V215H1004V215H1005V215H1006V215H1007V215H1008V215H1009V215H1010V215H1011V214H1012V215H1013V215H1014V223H1013V223H1012V224H1011V224H1010V224H1009V223H1008V223H1007V224H1006V224H1005V223H1004V224H1003V224H1002V224H1001V224H1000V224H999Z"/>
<rect x="999" y="219" width="15" height="2" fill="#ff6cbc"/>
<path fill="#c8006e" d="M1014 263V263H1015V262H1016V263H1017V262H1018V262H1019V263H1020V262H1021V263H1022V263H1023V262H1024V261H1025V262H1026V262H1027V262H1028V262H1029V271H1028V271H1027V271H1026V271H1025V272H1024V271H1023V271H1022V271H1021V271H1020V271H1019V271H1018V271H1017V271H1016V271H1015V271H1014Z"/>
<rect x="1014" y="266" width="15" height="2" fill="#ff6cbc"/>
<rect x="999" y="196" width="1" height="71" fill="#d0107f"/>
<rect x="1014" y="219" width="1" height="73" fill="#d0107f"/>
<path fill="#c8006e" d="M1029 214V214H1030V214H1031V215H1032V215H1033V215H1034V214H1035V215H1036V215H1037V215H1038V214H1039V215H1040V215H1041V214H1042V214H1043V215H1044V225H1043V224H1042V224H1041V224H1040V223H1039V224H1038V224H1037V223H1036V224H1035V223H1034V225H1033V223H1032V224H1031V224H1030V224H1029Z"/>
<rect x="1029" y="219" width="15" height="2" fill="#ff6cbc"/>
<path fill="#c8006e" d="M1044 262V262H1045V263H1046V262H1047V263H1048V260H1049V262H1050V262H1051V262H1052V262H1053V262H1054V263H1055V262H1056V263H1057V262H1058V262H1059V272H1058V271H1057V271H1056V271H1055V271H1054V272H1053V271H1052V271H1051V271H1050V271H1049V271H1048V272H1047V271H1046V271H1045V272H1044Z"/>
<rect x="1044" y="266" width="15" height="2" fill="#ff6cbc"/>
<rect x="1029" y="196" width="1" height="71" fill="#d0107f"/>
<rect x="1044" y="219" width="1" height="73" fill="#d0107f"/>
<path fill="#c8006e" d="M1059 215V215H1060V215H1061V214H1062V215H1063V214H1064V215H1065V215H1066V215H1067V215H1068V215H1069V214H1070V215H1071V214H1072V215H1073V215H1074V224H1073V223H1072V223H1071V223H1070V223H1069V224H1068V223H1067V224H1066V224H1065V223H1064V224H1063V224H1062V223H1061V224H1060V224H1059Z"/>
<rect x="1059" y="219" width="15" height="2" fill="#ff6cbc"/>
<path fill="#c8006e" d="M1074 262V262H1075V262H1076V263H1077V262H1078V262H1079V262H1080V262H1081V263H1082V263H1083V262H1084V263H1085V263H1086V262H1087V262H1088V261H1089V272H1088V271H1087V271H1086V271H1085V271H1084V272H1083V271H1082V271H1081V272H1080V272H1079V271H1078V271H1077V271H1076V272H1075V273H1074Z"/>
<rect x="1074" y="266" width="15" height="2" fill="#ff6cbc"/>
<rect x="1059" y="196" width="1" height="71" fill="#d0107f"/>
<rect x="1074" y="219" width="1" height="73" fill="#d0107f"/>
<path fill="#c8006e" d="M1089 215V215H1090V215H1091V215H1092V215H1093V214H1094V214H1095V215H1096V215H1097V215H1098V214H1099V215H1100V215H1101V215H1102V214H1103V215H1104V224H1103V224H1102V224H1101V224H1100V223H1099V223H1098V224H1097V224H1096V224H1095V223H1094V224H1093V224H1092V223H1091V223H1090V223H1089Z"/>
<rect x="1089" y="219" width="15" height="2" fill="#ff6cbc"/>
<path fill="#c8006e" d="M1104 263V263H1105V263H1106V262H1107V262H1108V263H1109V261H1110V262H1111V262H1112V263H1113V262H1114V262H1115V262H1116V263H1117V263H1118V262H1119V271H1118V271H1117V271H1116V271H1115V272H1114V271H1113V271H1112V271H1111V271H1110V271H1109V271H1108V272H1107V272H1106V271H1105V271H1104Z"/>
<rect x="1104" y="266" width="15" height="2" fill="#ff6cbc"/>
<rect x="1089" y="196" width="1" height="71" fill="#d0107f"/>
<rect x="1104" y="219" width="1" height="73" fill="#d0107f"/>
<path fill="#c8006e" d="M1119 215V215H1120V214H1121V215H1122V215H1123V215H1124V214H1125V215H1126V215H1127V215H1128V214H1129V214H1130V215H1131V215H1132V214H1133V215H1134V223H1133V224H1132V223H1131V223H1130V224H1129V223H1128V224H1127V223H1126V223H1125V224H1124V224H1123V223H1122V224H1121V224H1120V224H1119Z"/>
<rect x="1119" y="219" width="15" height="2" fill="#ff6cbc"/>
<path fill="#c8006e" d="M1134 262V262H1135V262H1136V262H1137V262H1138V262H1139V262H1140V262H1141V262H1142V263H1143V263H1144V262H1145V262H1146V262H1147V262H1148V262H1149V271H1148V271H1147V271H1146V271H1145V271H1144V271H1143V271H1142V271H1141V272H1140V271H1139V272H1138V271H1137V271H1136V271H1135V273H1134Z"/>
<rect x="1134" y="266" width="15" height="2" fill="#ff6cbc"/>
<rect x="1119" y="196" width="1" height="71" fill="#d0107f"/>
<rect x="1134" y="219" width="1" height="73" fill="#d0107f"/>
<path fill="#c8006e" d="M1149 215V215H1150V215H1151V215H1152V215H1153V215H1154V215H1155V215H1156V214H1157V215H1158V215H1159V215H1160V215H1161V215H1162V215H1163V214H1164V223H1163V224H1162V224H1161V223H1160V224H1159V224H1158V224H1157V224H1156V224H1155V224H1154V223H1153V224H1152V223H1151V223H1150V223H1149Z"/>
<rect x="1149" y="219" width="15" height="2" fill="#ff6cbc"/>
<path fill="#c8006e" d="M1164 261V261H1165V263H1166V263H1167V263H1168V262H1169V261H1170V263H1171V262H1172V262H1173V262H1174V262H1175V263H1176V263H1177V263H1178V262H1179V272H1178V271H1177V271H1176V272H1175V271H1174V271H1173V271H1172V271H1171V271H1170V271H1169V272H1168V271H1167V271H1166V271H1165V271H1164Z"/>
<rect x="1164" y="266" width="15" height="2" fill="#ff6cbc"/>
<rect x="1149" y="196" width="1" height="71" fill="#d0107f"/>
<rect x="1164" y="219" width="1" height="73" fill="#d0107f"/>
<path fill="#c8006e" d="M1179 215V215H1180V215H1181V214H1182V214H1183V214H1184V215H1185V215H1186V215H1187V215H1188V215H1189V215H1190V215H1191V214H1192V215H1193V215H1194V224H1193V223H1192V224H1191V223H1190V224H1189V224H1188V224H1187V223H1186V224H1185V224H1184V223H1183V224H1182V224H1181V224H1180V224H1179Z"/>
<rect x="1179" y="219" width="15" height="2" fill="#ff6cbc"/>
<path fill="#c8006e" d="M1194 262V262H1195V263H1196V263H1197V262H1198V262H1199V262H1200V262H1201V263H1202V262H1203V262H1204V262H1205V262H1206V263H1207V262H1208V262H1209V271H1208V271H1207V271H1206V271H1205V271H1204V271H1203V271H1202V271H1201V271H1200V271H1199V271H1198V272H1197V272H1196V271H1195V271H1194Z"/>
<rect x="1194" y="266" width="15" height="2" fill="#ff6cbc"/>
<rect x="1179" y="196" width="1" height="71" fill="#d0107f"/>
<rect x="1194" y="219" width="1" height="73" fill="#d0107f"/>
<path fill="#c8006e" d="M1209 215V215H1210V214H1211V215H1212V215H1213V213H1214V215H1215V215H1216V214H1217V215H1218V215H1219V215H1220V214H1221V215H1222V215H1223V215H1224V223H1223V223H1222V224H1221V225H1220V224H1219V225H1218V224H1217V224H1216V224H1215V224H1214V223H1213V224H1212V223H1211V224H1210V223H1209Z"/>
<rect x="1209" y="219" width="15" height="2" fill="#ff6cbc"/>
<path fill="#c8006e" d="M1224 261V261H1225V263H1226V261H1227V262H1228V262H1229V263H1230V262H1231V262H1232V263H1233V262H1234V262H1235V263H1236V263H1237V262H1238V262H1239V272H1238V271H1237V271H1236V271H1235V271H1234V271H1233V271H1232V271H1231V271H1230V271H1229V271H1228V271H1227V271H1226V271H1225V271H1224Z"/>
<rect x="1224" y="266" width="15" height="2" fill="#ff6cbc"/>
<rect x="1209" y="196" width="1" height="71" fill="#d0107f"/>
<rect x="1224" y="219" width="1" height="73" fill="#d0107f"/>
<path fill="#c8006e" d="M1239 215V215H1240V215H1241V214H1242V215H1243V215H1244V215H1245V214H1246V215H1247V214H1248V215H1249V215H1250V214H1251V215H1252V214H1253V215H1254V224H1253V224H1252V223H1251V224H1250V223H1249V224H1248V223H1247V224H1246V223H1245V224H1244V223H1243V224H1242V224H1241V223H1240V223H1239Z"/>
<rect x="1239" y="219" width="15" height="2" fill="#ff6cbc"/>
<path fill="#c8006e" d="M1254 261V261H1255V262H1256V262H1257V263H1258V263H1259V262H1260V262H1261V261H1262V262H1263V262H1264V262H1265V262H1266V262H1267V263H1268V263H1269V271H1268V272H1267V271H1266V271H1265V272H1264V271H1263V272H1262V271H1261V271H1260V271H1259V271H1258V272H1257V271H1256V271H1255V271H1254Z"/>
<rect x="1254" y="266" width="15" height="2" fill="#ff6cbc"/>
<rect x="1239" y="196" width="1" height="71" fill="#d0107f"/>
<rect x="1254" y="219" width="1" height="73" fill="#d0107f"/>
<rect x="1269" y="196" width="1" height="71" fill="#d0107f"/>
<rect x="100" y="493" width="1" height="7" fill="#a8a800"/>
<rect x="130" y="493" width="1" height="7" fill="#a8a800"/>
<rect x="160" y="492" width="1" height="7" fill="#a8a800"/>
<rect x="190" y="488" width="1" height="10" fill="#a8a800"/>
<rect x="220" y="485" width="1" height="9" fill="#a8a800"/>
<rect x="250" y="481" width="1" height="10" fill="#a8a800"/>
<rect x="280" y="476" width="1" height="11" fill="#a8a800"/>
<rect x="310" y="469" width="1" height="13" fill="#a8a800"/>
<rect x="340" y="462" width="1" height="12" fill="#a8a800"/>
<rect x="370" y="454" width="1" height="15" fill="#a8a800"/>
<rect x="400" y="445" width="1" height="14" fill="#a8a800"/>
<rect x="430" y="436" width="1" height="15" fill="#a8a800"/>
<rect x="460" y="426" width="1" height="15" fill="#a8a800"/>
<rect x="490" y="416" width="1" height="17" fill="#a8a800"/>
<rect x="520" y="406" width="1" height="16" fill="#a8a800"/>
<rect x="550" y="394" width="1" height="17" fill="#a8a800"/>
<rect x="580" y="386" width="1" height="14" fill="#a8a800"/>
<rect x="610" y="377" width="1" height="15" fill="#a8a800"/>
<rect x="640" y="367" width="1" height="16" fill="#a8a800"/>
<path fill="#a8a800" d="M70 493V493H71V493H72V493H73V493H74V493H75V493H76V493H77V493H78V493H79V493H80V493H81V493H82V493H83V493H84V493H85V493H86V493H87V493H88V493H89V493H90V493H91V493H92V493H93V493H94V493H95V493H96V493H97V493H98V493H99V493H100V499H99V499H98V499H97V499H96V499H95V499H94V499H93V499H92V499H91V499H90V499H89V499H88V499H87V499H86V500H85V499H84V499H83V499H82V499H81V499H80V500H79V499H78V499H77V499H76V499H75V499H74V499H73V499H72V499H71V499H70Z"/>
<rect x="71" y="497" width="29" height="2" fill="#eeee10"/>
<path fill="#a8a800" d="M100 494V494H101V494H102V494H103V494H104V494H105V493H106V494H107V494H108V494H109V494H110V494H111V494H112V494H113V494H114V494H115V494H116V494H117V494H118V494H119V494H120V494H121V494H122V494H123V494H124V494H125V494H126V494H127V494H128V494H129V494H130V500H129V500H128V500H127V500H126V500H125V500H124V500H123V500H122V500H121V500H120V500H119V500H118V500H117V500H116V500H115V500H114V501H113V500H112V500H111V500H110V500H109V500H108V500H107V500H106V500H105V500H104V500H103V501H102V500H101V500H100Z"/>
<rect x="101" y="497" width="29" height="2" fill="#eeee10"/>
<path fill="#a8a800" d="M130 493V493H131V492H132V492H133V493H134V493H135V493H136V492H137V492H138V493H139V492H140V492H141V493H142V492H143V493H144V493H145V492H146V493H147V492H148V493H149V493H150V493H151V492H152V492H153V493H154V493H155V493H156V493H157V492H158V493H159V492H160V499H159V500H158V499H157V498H156V499H155V499H154V499H153V499H152V499H151V498H150V499H149V498H148V499H147V499H146V499H145V498H144V499H143V499H142V499H141V498H140V499H139V498H138V498H137V499H136V498H135V498H134V499H133V499H132V499H131V498H130Z"/>
<rect x="131" y="496" width="29" height="2" fill="#eeee10"/>
<path fill="#a8a800" d="M160 492V492H161V492H162V492H163V492H164V492H165V492H166V492H167V492H168V492H169V492H170V492H171V492H172V492H173V492H174V491H175V492H176V492H177V492H178V492H179V491H180V490H181V492H182V492H183V492H184V492H185V492H186V492H187V492H188V492H189V492H190V498H189V498H188V498H187V498H186V498H185V498H184V498H183V498H182V498H181V498H180V498H179V498H178V498H177V498H176V498H175V498H174V498H173V498H172V498H171V498H170V498H169V498H168V498H167V498H166V498H165V498H164V498H163V498H162V498H161V498H160Z"/>
<rect x="161" y="496" width="29" height="2" fill="#eeee10"/>
<path fill="#a8a800" d="M190 488V488H191V488H192V488H193V488H194V488H195V488H196V488H197V488H198V488H199V488H200V488H201V488H202V488H203V488H204V488H205V488H206V488H207V487H208V488H209V488H210V488H211V487H212V488H213V488H214V488H215V488H216V488H217V488H218V486H219V488H220V494H219V495H218V495H217V495H216V495H215V495H214V495H213V494H212V495H211V495H210V495H209V495H208V495H207V494H206V495H205V495H204V495H203V495H202V495H201V495H200V495H199V494H198V495H197V495H196V494H195V494H194V495H193V495H192V495H191V494H190Z"/>
<rect x="191" y="491" width="29" height="2" fill="#eeee10"/>
<path fill="#a8a800" d="M220 484V484H221V485H222V485H223V485H224V485H225V485H226V485H227V485H228V485H229V485H230V485H231V485H232V485H233V485H234V485H235V485H236V485H237V485H238V485H239V485H240V485H241V485H242V485H243V485H244V485H245V485H246V485H247V485H248V485H249V485H250V491H249V491H248V491H247V491H246V491H245V491H244V491H243V491H242V491H241V491H240V491H239V491H238V491H237V491H236V491H235V491H234V491H233V491H232V491H231V491H230V491H229V491H228V492H227V491H226V491H225V491H224V491H223V491H222V491H221V491H220Z"/>
<rect x="221" y="489" width="29" height="2" fill="#eeee10"/>
<path fill="#a8a800" d="M250 480V480H251V480H252V480H253V480H254V480H255V480H256V480H257V480H258V480H259V480H260V480H261V480H262V480H263V480H264V480H265V480H266V480H267V480H268V480H269V480H270V480H271V480H272V480H273V480H274V480H275V480H276V480H277V480H278V480H279V480H280V487H279V488H278V488H277V488H276V488H275V488H274V487H273V487H272V487H271V487H270V488H269V487H268V487H267V487H266V487H265V487H264V487H263V488H262V488H261V488H260V489H259V488H258V487H257V487H256V487H255V487H254V487H253V487H252V488H251V487H250Z"/>
<rect x="251" y="483" width="29" height="2" fill="#eeee10"/>
<path fill="#a8a800" d="M280 475V475H281V475H282V475H283V475H284V476H285V475H286V475H287V475H288V476H289V475H290V474H291V476H292V475H293V475H294V475H295V476H296V475H297V475H298V475H299V476H300V475H301V475H302V475H303V476H304V475H305V476H306V476H307V476H308V475H309V475H310V482H309V482H308V482H307V482H306V482H305V482H304V482H303V482H302V482H301V482H300V482H299V482H298V482H297V482H296V482H295V482H294V482H293V482H292V482H291V482H290V482H289V482H288V482H287V482H286V482H285V482H284V482H283V482H282V482H281V482H280Z"/>
<rect x="281" y="478" width="29" height="2" fill="#eeee10"/>
<path fill="#a8a800" d="M310 468V468H311V468H312V468H313V468H314V469H315V469H316V468H317V468H318V468H319V469H320V468H321V468H322V469H323V468H324V468H325V468H326V468H327V469H328V468H329V469H330V468H331V468H332V469H333V469H334V468H335V469H336V469H337V468H338V469H339V468H340V475H339V475H338V475H337V475H336V475H335V475H334V475H333V475H332V475H331V475H330V475H329V477H328V475H327V475H326V475H325V475H324V475H323V475H322V475H321V475H320V475H319V475H318V475H317V475H316V475H315V475H314V475H313V475H312V475H311V475H310Z"/>
<rect x="311" y="471" width="29" height="2" fill="#eeee10"/>
<path fill="#a8a800" d="M340 462V462H341V462H342V463H343V462H344V463H345V462H346V462H347V463H348V462H349V463H350V463H351V462H352V463H353V463H354V462H355V462H356V462H357V462H358V462H359V462H360V462H361V462H362V462H363V462H364V462H365V463H366V463H367V462H368V462H369V463H370V468H369V468H368V469H367V469H366V468H365V468H364V468H363V468H362V469H361V468H360V468H359V468H358V469H357V469H356V468H355V468H354V468H353V468H352V469H351V469H350V469H349V469H348V468H347V469H346V468H345V469H344V469H343V469H342V469H341V468H340Z"/>
<rect x="341" y="466" width="29" height="2" fill="#eeee10"/>
<path fill="#a8a800" d="M370 453V453H371V454H372V454H373V453H374V453H375V453H376V454H377V453H378V453H379V453H380V454H381V453H382V452H383V454H384V454H385V453H386V453H387V454H388V453H389V453H390V453H391V454H392V454H393V453H394V453H395V453H396V453H397V453H398V453H399V453H400V460H399V460H398V459H397V460H396V460H395V460H394V460H393V460H392V459H391V460H390V460H389V460H388V460H387V459H386V460H385V459H384V460H383V460H382V459H381V459H380V460H379V459H378V459H377V460H376V459H375V460H374V460H373V459H372V460H371V460H370Z"/>
<rect x="371" y="456" width="29" height="2" fill="#eeee10"/>
<path fill="#a8a800" d="M400 445V445H401V445H402V445H403V444H404V445H405V445H406V445H407V444H408V445H409V445H410V444H411V445H412V445H413V445H414V445H415V445H416V445H417V445H418V445H419V444H420V445H421V445H422V445H423V445H424V445H425V445H426V445H427V445H428V445H429V445H430V451H429V451H428V451H427V451H426V451H425V451H424V451H423V451H422V451H421V451H420V451H419V451H418V451H417V451H416V451H415V451H414V451H413V451H412V451H411V451H410V451H409V451H408V451H407V451H406V451H405V451H404V451H403V451H402V451H401V451H400Z"/>
<rect x="401" y="449" width="29" height="2" fill="#eeee10"/>
<path fill="#a8a800" d="M430 436V436H431V436H432V436H433V436H434V435H435V436H436V436H437V436H438V436H439V436H440V436H441V436H442V436H443V436H444V436H445V436H446V436H447V436H448V436H449V435H450V436H451V435H452V436H453V436H454V436H455V436H456V436H457V436H458V436H459V435H460V441H459V442H458V441H457V442H456V442H455V442H454V442H453V442H452V442H451V442H450V442H449V442H448V442H447V441H446V442H445V442H444V442H443V442H442V442H441V442H440V442H439V442H438V442H437V442H436V442H435V442H434V442H433V442H432V442H431V441H430Z"/>
<rect x="431" y="439" width="29" height="2" fill="#eeee10"/>
<path fill="#a8a800" d="M460 426V426H461V426H462V426H463V426H464V426H465V426H466V426H467V426H468V426H469V426H470V426H471V426H472V426H473V426H474V426H475V426H476V426H477V426H478V426H479V426H480V426H481V426H482V426H483V426H484V426H485V426H486V426H487V425H488V426H489V426H490V433H489V433H488V433H487V433H486V433H485V433H484V433H483V433H482V433H481V433H480V433H479V433H478V433H477V433H476V433H475V434H474V433H473V433H472V433H471V433H470V433H469V433H468V433H467V433H466V433H465V433H464V433H463V433H462V434H461V433H460Z"/>
<rect x="461" y="429" width="29" height="2" fill="#eeee10"/>
<path fill="#a8a800" d="M490 416V416H491V416H492V416H493V416H494V416H495V415H496V415H497V416H498V416H499V416H500V416H501V415H502V416H503V416H504V414H505V416H506V416H507V416H508V416H509V416H510V416H511V416H512V416H513V416H514V416H515V416H516V416H517V416H518V416H519V416H520V422H519V422H518V422H517V422H516V422H515V422H514V422H513V422H512V422H511V422H510V422H509V422H508V423H507V422H506V422H505V422H504V422H503V422H502V422H501V422H500V422H499V422H498V422H497V422H496V422H495V422H494V422H493V422H492V422H491V422H490Z"/>
<rect x="491" y="418" width="29" height="2" fill="#eeee10"/>
<path fill="#a8a800" d="M520 406V406H521V405H522V405H523V406H524V406H525V405H526V406H527V406H528V406H529V406H530V405H531V405H532V406H533V406H534V406H535V406H536V406H537V405H538V405H539V406H540V406H541V406H542V406H543V405H544V405H545V405H546V405H547V406H548V406H549V406H550V412H549V412H548V412H547V412H546V412H545V412H544V412H543V412H542V412H541V412H540V412H539V412H538V412H537V412H536V412H535V412H534V412H533V412H532V412H531V412H530V412H529V412H528V412H527V412H526V412H525V413H524V413H523V412H522V412H521V412H520Z"/>
<rect x="521" y="409" width="29" height="2" fill="#eeee10"/>
<path fill="#a8a800" d="M550 394V394H551V395H552V395H553V394H554V395H555V394H556V394H557V394H558V394H559V394H560V394H561V394H562V394H563V395H564V395H565V394H566V395H567V395H568V394H569V395H570V395H571V395H572V395H573V395H574V395H575V394H576V394H577V394H578V394H579V394H580V400H579V401H578V401H577V401H576V401H575V400H574V402H573V401H572V400H571V401H570V401H569V401H568V401H567V400H566V401H565V400H564V400H563V400H562V401H561V401H560V401H559V401H558V400H557V400H556V401H555V400H554V401H553V400H552V400H551V401H550Z"/>
<rect x="551" y="397" width="29" height="2" fill="#eeee10"/>
<path fill="#a8a800" d="M580 386V386H581V385H582V386H583V386H584V386H585V386H586V386H587V386H588V386H589V386H590V386H591V386H592V386H593V386H594V386H595V386H596V386H597V386H598V386H599V386H600V386H601V386H602V386H603V386H604V386H605V386H606V386H607V384H608V386H609V386H610V393H609V393H608V393H607V393H606V393H605V392H604V393H603V393H602V392H601V393H600V393H599V393H598V393H597V393H596V393H595V393H594V392H593V393H592V393H591V393H590V393H589V392H588V393H587V393H586V393H585V392H584V393H583V393H582V393H581V392H580Z"/>
<rect x="581" y="390" width="29" height="2" fill="#eeee10"/>
<path fill="#a8a800" d="M610 377V377H611V377H612V377H613V377H614V377H615V377H616V376H617V377H618V377H619V376H620V377H621V377H622V377H623V377H624V376H625V377H626V377H627V377H628V377H629V377H630V377H631V377H632V377H633V377H634V377H635V377H636V377H637V377H638V377H639V377H640V385H639V383H638V383H637V383H636V383H635V383H634V383H633V383H632V383H631V383H630V383H629V383H628V383H627V383H626V383H625V383H624V384H623V383H622V383H621V383H620V383H619V383H618V383H617V383H616V383H615V383H614V383H613V383H612V383H611V383H610Z"/>
<rect x="611" y="380" width="29" height="2" fill="#eeee10"/>
<path fill="#a8a800" d="M640 367V367H641V367H642V367H643V367H644V367H645V367H646V367H647V367H648V367H649V367H650V367H651V367H652V367H653V367H654V367H655V367H656V367H657V367H658V367H659V367H660V367H661V367H662V367H663V367H664V367H665V367H666V367H667V367H668V367H669V367H670V373H669V373H668V373H667V373H666V373H665V373H664V373H663V373H662V373H661V373H660V373H659V373H658V373H657V373H656V373H655V373H654V373H653V373H652V373H651V373H650V373H649V373H648V373H647V373H646V373H645V373H644V373H643V373H642V373H641V373H640Z"/>
<rect x="641" y="370" width="29" height="2" fill="#eeee10"/>
<path fill="none" stroke="#a8a800" stroke-width="1.5" shape-rendering="auto" d="M670.5 372 L671.5 340 L673 318 L675 312"/>
<rect x="700" y="312" width="1" height="14" fill="#a8a800"/>
<rect x="730" y="320" width="1" height="14" fill="#a8a800"/>
<rect x="760" y="328" width="1" height="16" fill="#a8a800"/>
<rect x="790" y="338" width="1" height="15" fill="#a8a800"/>
<rect x="820" y="346" width="1" height="16" fill="#a8a800"/>
<rect x="850" y="356" width="1" height="17" fill="#a8a800"/>
<rect x="880" y="367" width="1" height="16" fill="#a8a800"/>
<rect x="910" y="377" width="1" height="16" fill="#a8a800"/>
<rect x="940" y="386" width="1" height="15" fill="#a8a800"/>
<rect x="970" y="396" width="1" height="16" fill="#a8a800"/>
<rect x="1000" y="406" width="1" height="17" fill="#a8a800"/>
<rect x="1030" y="416" width="1" height="16" fill="#a8a800"/>
<rect x="1060" y="426" width="1" height="16" fill="#a8a800"/>
<rect x="1090" y="436" width="1" height="16" fill="#a8a800"/>
<rect x="1120" y="446" width="1" height="14" fill="#a8a800"/>
<rect x="1150" y="454" width="1" height="15" fill="#a8a800"/>
<rect x="1180" y="462" width="1" height="13" fill="#a8a800"/>
<rect x="1210" y="470" width="1" height="13" fill="#a8a800"/>
<rect x="1240" y="476" width="1" height="12" fill="#a8a800"/>
<path fill="#a8a800" d="M673 313V313H674V313H675V312H676V312H677V313H678V313H679V312H680V313H681V312H682V313H683V313H684V313H685V313H686V313H687V313H688V313H689V313H690V313H691V312H692V313H693V312H694V313H695V313H696V313H697V313H698V313H699V313H700V318H699V318H698V318H697V318H696V318H695V318H694V319H693V318H692V319H691V318H690V318H689V318H688V319H687V319H686V318H685V318H684V318H683V318H682V318H681V318H680V318H679V318H678V319H677V319H676V319H675V318H674V318H673Z"/>
<rect x="674" y="316" width="26" height="2" fill="#eeee10"/>
<path fill="#a8a800" d="M700 320V320H701V321H702V321H703V321H704V321H705V320H706V321H707V321H708V320H709V320H710V321H711V321H712V321H713V321H714V321H715V320H716V320H717V320H718V321H719V321H720V320H721V321H722V320H723V320H724V320H725V320H726V321H727V320H728V321H729V320H730V326H729V326H728V326H727V326H726V326H725V326H724V326H723V326H722V326H721V326H720V326H719V326H718V326H717V326H716V326H715V326H714V326H713V326H712V326H711V326H710V326H709V326H708V326H707V326H706V326H705V326H704V326H703V326H702V326H701V326H700Z"/>
<rect x="701" y="324" width="29" height="2" fill="#eeee10"/>
<path fill="#a8a800" d="M730 328V328H731V328H732V328H733V328H734V328H735V328H736V328H737V328H738V328H739V328H740V328H741V328H742V327H743V328H744V328H745V328H746V328H747V328H748V328H749V328H750V328H751V328H752V328H753V328H754V328H755V328H756V328H757V328H758V328H759V328H760V335H759V334H758V334H757V334H756V334H755V335H754V334H753V334H752V334H751V335H750V335H749V334H748V334H747V334H746V334H745V335H744V334H743V335H742V335H741V334H740V335H739V334H738V334H737V335H736V335H735V334H734V334H733V334H732V334H731V335H730Z"/>
<rect x="731" y="332" width="29" height="2" fill="#eeee10"/>
<path fill="#a8a800" d="M760 338V338H761V338H762V338H763V337H764V338H765V338H766V338H767V338H768V338H769V338H770V337H771V338H772V338H773V338H774V337H775V338H776V338H777V338H778V337H779V338H780V338H781V336H782V337H783V338H784V338H785V338H786V337H787V337H788V337H789V338H790V344H789V344H788V344H787V344H786V344H785V344H784V344H783V344H782V344H781V344H780V344H779V344H778V344H777V344H776V344H775V344H774V344H773V344H772V344H771V344H770V344H769V344H768V344H767V344H766V344H765V343H764V344H763V344H762V344H761V344H760Z"/>
<rect x="761" y="342" width="29" height="2" fill="#eeee10"/>
<path fill="#a8a800" d="M790 346V346H791V346H792V346H793V346H794V346H795V346H796V346H797V346H798V346H799V346H800V346H801V346H802V346H803V346H804V346H805V346H806V346H807V346H808V346H809V346H810V346H811V346H812V347H813V346H814V346H815V346H816V346H817V346H818V346H819V346H820V353H819V352H818V353H817V353H816V353H815V353H814V353H813V353H812V354H811V353H810V353H809V353H808V353H807V353H806V353H805V352H804V353H803V353H802V353H801V353H800V353H799V353H798V353H797V353H796V353H795V353H794V353H793V352H792V353H791V353H790Z"/>
<rect x="791" y="351" width="29" height="2" fill="#eeee10"/>
<path fill="#a8a800" d="M820 356V356H821V356H822V356H823V356H824V356H825V356H826V356H827V356H828V356H829V356H830V356H831V356H832V356H833V356H834V356H835V356H836V356H837V356H838V356H839V356H840V356H841V356H842V356H843V355H844V356H845V356H846V356H847V356H848V356H849V356H850V363H849V362H848V363H847V362H846V363H845V363H844V363H843V363H842V363H841V362H840V362H839V363H838V362H837V362H836V362H835V362H834V362H833V362H832V363H831V363H830V362H829V363H828V362H827V363H826V362H825V364H824V362H823V363H822V362H821V362H820Z"/>
<rect x="821" y="359" width="29" height="2" fill="#eeee10"/>
<path fill="#a8a800" d="M850 367V367H851V367H852V367H853V367H854V367H855V367H856V367H857V367H858V367H859V367H860V367H861V367H862V367H863V367H864V367H865V367H866V367H867V367H868V367H869V367H870V367H871V367H872V367H873V367H874V367H875V367H876V367H877V367H878V367H879V367H880V373H879V373H878V373H877V373H876V373H875V373H874V373H873V373H872V373H871V373H870V373H869V373H868V373H867V373H866V373H865V373H864V373H863V373H862V373H861V373H860V373H859V373H858V373H857V373H856V373H855V373H854V373H853V373H852V373H851V373H850Z"/>
<rect x="851" y="371" width="29" height="2" fill="#eeee10"/>
<path fill="#a8a800" d="M880 376V376H881V377H882V377H883V377H884V377H885V376H886V377H887V376H888V377H889V376H890V377H891V376H892V377H893V376H894V376H895V376H896V377H897V377H898V377H899V377H900V377H901V376H902V376H903V376H904V377H905V376H906V377H907V376H908V377H909V377H910V383H909V384H908V383H907V383H906V383H905V383H904V383H903V384H902V383H901V384H900V383H899V384H898V384H897V383H896V384H895V384H894V383H893V383H892V383H891V384H890V383H889V383H888V383H887V383H886V383H885V384H884V384H883V383H882V384H881V384H880Z"/>
<rect x="881" y="381" width="29" height="2" fill="#eeee10"/>
<path fill="#a8a800" d="M910 386V386H911V386H912V387H913V387H914V387H915V387H916V387H917V387H918V386H919V387H920V386H921V386H922V386H923V387H924V387H925V386H926V386H927V386H928V386H929V387H930V386H931V387H932V386H933V387H934V386H935V387H936V386H937V387H938V386H939V386H940V392H939V392H938V392H937V393H936V392H935V392H934V393H933V393H932V393H931V392H930V392H929V393H928V392H927V392H926V393H925V392H924V393H923V393H922V392H921V393H920V393H919V393H918V392H917V394H916V392H915V393H914V393H913V393H912V394H911V392H910Z"/>
<rect x="911" y="391" width="29" height="2" fill="#eeee10"/>
<path fill="#a8a800" d="M940 395V395H941V395H942V395H943V394H944V395H945V395H946V395H947V395H948V395H949V395H950V395H951V395H952V395H953V395H954V395H955V395H956V395H957V395H958V395H959V395H960V395H961V395H962V395H963V395H964V395H965V395H966V395H967V395H968V395H969V395H970V402H969V402H968V402H967V402H966V402H965V402H964V402H963V402H962V402H961V402H960V402H959V402H958V402H957V402H956V402H955V402H954V402H953V402H952V402H951V402H950V402H949V402H948V402H947V402H946V402H945V402H944V402H943V402H942V402H941V402H940Z"/>
<rect x="941" y="400" width="29" height="2" fill="#eeee10"/>
<path fill="#a8a800" d="M970 405V405H971V405H972V405H973V405H974V406H975V405H976V406H977V406H978V405H979V405H980V406H981V406H982V405H983V406H984V405H985V405H986V405H987V406H988V406H989V406H990V405H991V405H992V406H993V406H994V406H995V405H996V405H997V405H998V405H999V405H1000V412H999V412H998V412H997V412H996V412H995V412H994V412H993V412H992V412H991V412H990V412H989V412H988V412H987V412H986V412H985V412H984V412H983V413H982V412H981V412H980V412H979V412H978V412H977V412H976V412H975V412H974V412H973V412H972V412H971V412H970Z"/>
<rect x="971" y="410" width="29" height="2" fill="#eeee10"/>
<path fill="#a8a800" d="M1000 416V416H1001V416H1002V416H1003V416H1004V416H1005V416H1006V416H1007V415H1008V416H1009V416H1010V416H1011V416H1012V416H1013V416H1014V416H1015V416H1016V415H1017V416H1018V416H1019V416H1020V416H1021V416H1022V416H1023V416H1024V415H1025V416H1026V416H1027V416H1028V416H1029V416H1030V423H1029V423H1028V423H1027V423H1026V423H1025V423H1024V423H1023V423H1022V423H1021V423H1020V423H1019V423H1018V423H1017V424H1016V423H1015V423H1014V423H1013V423H1012V423H1011V423H1010V423H1009V423H1008V423H1007V423H1006V423H1005V423H1004V423H1003V423H1002V423H1001V423H1000Z"/>
<rect x="1001" y="420" width="29" height="2" fill="#eeee10"/>
<path fill="#a8a800" d="M1030 426V426H1031V426H1032V425H1033V426H1034V426H1035V426H1036V426H1037V426H1038V426H1039V426H1040V426H1041V426H1042V426H1043V426H1044V426H1045V426H1046V426H1047V426H1048V426H1049V426H1050V426H1051V426H1052V426H1053V426H1054V426H1055V426H1056V426H1057V426H1058V426H1059V426H1060V433H1059V433H1058V433H1057V433H1056V434H1055V433H1054V433H1053V433H1052V433H1051V433H1050V433H1049V433H1048V433H1047V433H1046V433H1045V433H1044V433H1043V433H1042V433H1041V433H1040V433H1039V433H1038V433H1037V433H1036V433H1035V433H1034V433H1033V433H1032V433H1031V433H1030Z"/>
<rect x="1031" y="430" width="29" height="2" fill="#eeee10"/>
<path fill="#a8a800" d="M1060 437V437H1061V437H1062V436H1063V437H1064V436H1065V437H1066V437H1067V437H1068V437H1069V436H1070V436H1071V437H1072V436H1073V436H1074V437H1075V437H1076V436H1077V437H1078V437H1079V436H1080V437H1081V436H1082V436H1083V437H1084V437H1085V437H1086V437H1087V437H1088V437H1089V437H1090V442H1089V442H1088V442H1087V442H1086V442H1085V442H1084V442H1083V442H1082V442H1081V442H1080V442H1079V442H1078V442H1077V442H1076V442H1075V442H1074V442H1073V442H1072V442H1071V442H1070V442H1069V442H1068V442H1067V442H1066V442H1065V442H1064V442H1063V442H1062V442H1061V442H1060Z"/>
<rect x="1061" y="439" width="29" height="2" fill="#eeee10"/>
<path fill="#a8a800" d="M1090 445V445H1091V446H1092V446H1093V446H1094V445H1095V446H1096V446H1097V446H1098V446H1099V445H1100V445H1101V444H1102V446H1103V445H1104V446H1105V445H1106V445H1107V445H1108V446H1109V446H1110V446H1111V446H1112V446H1113V446H1114V446H1115V445H1116V445H1117V445H1118V445H1119V445H1120V452H1119V452H1118V452H1117V452H1116V452H1115V452H1114V452H1113V452H1112V452H1111V452H1110V453H1109V452H1108V452H1107V452H1106V452H1105V452H1104V452H1103V452H1102V452H1101V452H1100V452H1099V452H1098V452H1097V452H1096V452H1095V452H1094V452H1093V452H1092V452H1091V452H1090Z"/>
<rect x="1091" y="450" width="29" height="2" fill="#eeee10"/>
<path fill="#a8a800" d="M1120 453V453H1121V453H1122V453H1123V453H1124V453H1125V453H1126V453H1127V453H1128V453H1129V453H1130V453H1131V453H1132V453H1133V453H1134V453H1135V453H1136V453H1137V453H1138V453H1139V453H1140V453H1141V453H1142V453H1143V453H1144V453H1145V453H1146V453H1147V453H1148V453H1149V453H1150V460H1149V461H1148V461H1147V461H1146V460H1145V460H1144V460H1143V461H1142V461H1141V461H1140V460H1139V461H1138V460H1137V461H1136V461H1135V461H1134V460H1133V460H1132V461H1131V461H1130V462H1129V461H1128V460H1127V460H1126V461H1125V460H1124V461H1123V461H1122V460H1121V460H1120Z"/>
<rect x="1121" y="458" width="29" height="2" fill="#eeee10"/>
<path fill="#a8a800" d="M1150 462V462H1151V462H1152V462H1153V462H1154V462H1155V462H1156V462H1157V462H1158V462H1159V462H1160V462H1161V462H1162V462H1163V462H1164V462H1165V462H1166V462H1167V462H1168V462H1169V462H1170V462H1171V462H1172V462H1173V462H1174V462H1175V462H1176V462H1177V462H1178V462H1179V462H1180V469H1179V469H1178V469H1177V469H1176V469H1175V469H1174V469H1173V469H1172V469H1171V469H1170V469H1169V469H1168V469H1167V469H1166V469H1165V469H1164V469H1163V470H1162V469H1161V469H1160V469H1159V469H1158V469H1157V469H1156V469H1155V469H1154V469H1153V469H1152V469H1151V469H1150Z"/>
<rect x="1151" y="467" width="29" height="2" fill="#eeee10"/>
<path fill="#a8a800" d="M1180 470V470H1181V470H1182V469H1183V469H1184V470H1185V469H1186V468H1187V469H1188V470H1189V470H1190V470H1191V469H1192V470H1193V469H1194V469H1195V470H1196V469H1197V469H1198V469H1199V470H1200V469H1201V469H1202V470H1203V469H1204V470H1205V469H1206V469H1207V469H1208V469H1209V469H1210V476H1209V475H1208V476H1207V475H1206V476H1205V476H1204V475H1203V476H1202V476H1201V476H1200V475H1199V476H1198V476H1197V476H1196V476H1195V476H1194V475H1193V475H1192V476H1191V476H1190V476H1189V475H1188V475H1187V476H1186V475H1185V475H1184V476H1183V475H1182V476H1181V477H1180Z"/>
<rect x="1181" y="474" width="29" height="2" fill="#eeee10"/>
<path fill="#a8a800" d="M1210 476V476H1211V476H1212V476H1213V476H1214V476H1215V477H1216V476H1217V477H1218V476H1219V476H1220V476H1221V476H1222V476H1223V476H1224V476H1225V476H1226V477H1227V477H1228V476H1229V476H1230V477H1231V477H1232V477H1233V477H1234V477H1235V476H1236V476H1237V476H1238V476H1239V476H1240V482H1239V482H1238V482H1237V482H1236V482H1235V482H1234V482H1233V482H1232V482H1231V482H1230V482H1229V482H1228V482H1227V482H1226V482H1225V482H1224V482H1223V482H1222V482H1221V482H1220V482H1219V482H1218V482H1217V482H1216V482H1215V482H1214V482H1213V482H1212V482H1211V482H1210Z"/>
<rect x="1211" y="480" width="29" height="2" fill="#eeee10"/>
<path fill="#a8a800" d="M1240 482V482H1241V482H1242V482H1243V482H1244V482H1245V482H1246V482H1247V482H1248V482H1249V482H1250V482H1251V482H1252V482H1253V482H1254V482H1255V482H1256V482H1257V482H1258V482H1259V482H1260V482H1261V482H1262V482H1263V482H1264V482H1265V482H1266V482H1267V482H1268V482H1269V482H1270V488H1269V488H1268V488H1267V488H1266V488H1265V488H1264V488H1263V488H1262V488H1261V488H1260V488H1259V488H1258V488H1257V488H1256V488H1255V488H1254V488H1253V488H1252V488H1251V488H1250V488H1249V488H1248V488H1247V488H1246V488H1245V488H1244V488H1243V488H1242V488H1241V488H1240Z"/>
<rect x="1241" y="485" width="29" height="2" fill="#eeee10"/>
<rect x="100" y="372" width="1" height="15" fill="#00f000"/>
<rect x="130" y="382" width="1" height="16" fill="#00f000"/>
<rect x="160" y="392" width="1" height="16" fill="#00f000"/>
<rect x="190" y="402" width="1" height="16" fill="#00f000"/>
<rect x="220" y="412" width="1" height="16" fill="#00f000"/>
<rect x="250" y="422" width="1" height="15" fill="#00f000"/>
<rect x="280" y="431" width="1" height="16" fill="#00f000"/>
<rect x="310" y="441" width="1" height="14" fill="#00f000"/>
<rect x="340" y="449" width="1" height="14" fill="#00f000"/>
<rect x="370" y="457" width="1" height="12" fill="#00f000"/>
<rect x="400" y="463" width="1" height="13" fill="#00f000"/>
<rect x="430" y="470" width="1" height="11" fill="#00f000"/>
<rect x="460" y="475" width="1" height="11" fill="#00f000"/>
<rect x="490" y="480" width="1" height="9" fill="#00f000"/>
<rect x="520" y="483" width="1" height="9" fill="#00f000"/>
<rect x="550" y="486" width="1" height="7" fill="#00f000"/>
<rect x="580" y="488" width="1" height="7" fill="#00f000"/>
<rect x="610" y="488" width="1" height="7" fill="#00f000"/>
<rect x="640" y="486" width="1" height="8" fill="#00f000"/>
<path fill="#00f000" d="M70 372V372H71V372H72V372H73V372H74V372H75V372H76V372H77V372H78V372H79V372H80V372H81V372H82V372H83V372H84V372H85V372H86V372H87V372H88V372H89V372H90V372H91V372H92V372H93V372H94V372H95V372H96V372H97V372H98V372H99V372H100V379H99V379H98V379H97V379H96V379H95V379H94V379H93V379H92V379H91V379H90V379H89V379H88V379H87V379H86V379H85V379H84V379H83V379H82V379H81V379H80V379H79V379H78V379H77V379H76V379H75V379H74V379H73V379H72V379H71V379H70Z"/>
<rect x="71" y="374" width="29" height="2" fill="#c8ffc8"/>
<path fill="#00f000" d="M100 381V381H101V381H102V381H103V381H104V382H105V382H106V382H107V382H108V382H109V382H110V382H111V381H112V381H113V381H114V381H115V381H116V382H117V381H118V381H119V381H120V381H121V381H122V381H123V381H124V381H125V381H126V382H127V381H128V382H129V382H130V388H129V388H128V388H127V388H126V389H125V388H124V387H123V389H122V388H121V388H120V388H119V388H118V388H117V387H116V388H115V388H114V388H113V389H112V388H111V387H110V388H109V388H108V388H107V388H106V388H105V388H104V388H103V387H102V388H101V387H100Z"/>
<rect x="101" y="384" width="29" height="2" fill="#c8ffc8"/>
<path fill="#00f000" d="M130 391V391H131V391H132V391H133V391H134V391H135V391H136V391H137V391H138V391H139V392H140V392H141V391H142V391H143V391H144V391H145V391H146V391H147V391H148V391H149V391H150V391H151V391H152V391H153V391H154V391H155V391H156V391H157V391H158V392H159V390H160V399H159V399H158V399H157V399H156V399H155V399H154V399H153V399H152V399H151V399H150V399H149V399H148V399H147V399H146V399H145V399H144V399H143V399H142V399H141V399H140V399H139V399H138V399H137V399H136V399H135V399H134V399H133V399H132V399H131V399H130Z"/>
<rect x="131" y="394" width="29" height="2" fill="#c8ffc8"/>
<path fill="#00f000" d="M160 402V402H161V401H162V401H163V401H164V401H165V401H166V400H167V401H168V401H169V401H170V401H171V401H172V401H173V402H174V401H175V401H176V401H177V401H178V401H179V401H180V401H181V401H182V402H183V401H184V401H185V402H186V401H187V401H188V401H189V401H190V408H189V408H188V408H187V407H186V408H185V408H184V408H183V408H182V408H181V408H180V408H179V408H178V408H177V408H176V408H175V408H174V408H173V408H172V408H171V407H170V408H169V408H168V408H167V408H166V408H165V408H164V408H163V408H162V408H161V408H160Z"/>
<rect x="161" y="403" width="29" height="2" fill="#c8ffc8"/>
<path fill="#00f000" d="M190 411V411H191V411H192V411H193V411H194V411H195V411H196V411H197V412H198V411H199V412H200V411H201V412H202V412H203V411H204V411H205V411H206V411H207V412H208V411H209V411H210V411H211V410H212V412H213V412H214V412H215V412H216V411H217V411H218V412H219V411H220V419H219V419H218V418H217V419H216V419H215V418H214V419H213V418H212V419H211V419H210V418H209V418H208V418H207V419H206V419H205V418H204V419H203V418H202V419H201V419H200V418H199V418H198V418H197V418H196V418H195V418H194V419H193V419H192V418H191V419H190Z"/>
<rect x="191" y="414" width="29" height="2" fill="#c8ffc8"/>
<path fill="#00f000" d="M220 421V421H221V422H222V421H223V422H224V421H225V421H226V421H227V422H228V421H229V420H230V422H231V421H232V421H233V421H234V421H235V421H236V422H237V421H238V421H239V422H240V421H241V422H242V421H243V421H244V421H245V421H246V421H247V421H248V421H249V422H250V429H249V429H248V429H247V428H246V428H245V429H244V429H243V430H242V429H241V429H240V429H239V429H238V429H237V428H236V429H235V429H234V429H233V429H232V429H231V429H230V429H229V429H228V429H227V429H226V429H225V429H224V429H223V429H222V429H221V429H220Z"/>
<rect x="221" y="423" width="29" height="2" fill="#c8ffc8"/>
<path fill="#00f000" d="M250 431V431H251V431H252V430H253V431H254V431H255V431H256V431H257V431H258V431H259V431H260V431H261V431H262V431H263V431H264V431H265V431H266V430H267V431H268V430H269V430H270V431H271V431H272V430H273V430H274V431H275V430H276V430H277V431H278V431H279V430H280V438H279V437H278V438H277V437H276V437H275V438H274V437H273V437H272V437H271V437H270V438H269V437H268V437H267V438H266V438H265V437H264V438H263V437H262V437H261V437H260V437H259V437H258V437H257V437H256V438H255V438H254V438H253V438H252V438H251V437H250Z"/>
<rect x="251" y="433" width="29" height="2" fill="#c8ffc8"/>
<path fill="#00f000" d="M280 440V440H281V440H282V440H283V440H284V441H285V441H286V441H287V440H288V440H289V441H290V440H291V441H292V441H293V440H294V440H295V440H296V440H297V441H298V441H299V440H300V440H301V441H302V441H303V441H304V440H305V440H306V441H307V440H308V441H309V441H310V447H309V447H308V447H307V447H306V447H305V447H304V447H303V448H302V447H301V447H300V447H299V447H298V447H297V448H296V447H295V447H294V447H293V447H292V447H291V447H290V447H289V447H288V448H287V447H286V447H285V447H284V447H283V447H282V447H281V447H280Z"/>
<rect x="281" y="443" width="29" height="2" fill="#c8ffc8"/>
<path fill="#00f000" d="M310 449V449H311V448H312V449H313V449H314V449H315V449H316V448H317V448H318V448H319V449H320V448H321V449H322V449H323V449H324V449H325V448H326V448H327V448H328V449H329V448H330V448H331V448H332V449H333V449H334V449H335V449H336V449H337V448H338V449H339V449H340V455H339V455H338V455H337V455H336V455H335V455H334V455H333V455H332V455H331V455H330V455H329V455H328V455H327V455H326V456H325V455H324V455H323V455H322V455H321V455H320V455H319V455H318V455H317V455H316V455H315V455H314V455H313V455H312V455H311V455H310Z"/>
<rect x="311" y="451" width="29" height="2" fill="#c8ffc8"/>
<path fill="#00f000" d="M340 457V457H341V456H342V457H343V456H344V456H345V457H346V457H347V457H348V456H349V457H350V457H351V457H352V457H353V457H354V457H355V457H356V457H357V457H358V457H359V457H360V457H361V457H362V456H363V457H364V457H365V456H366V457H367V457H368V457H369V457H370V464H369V464H368V463H367V463H366V463H365V464H364V463H363V463H362V464H361V464H360V463H359V463H358V463H357V464H356V463H355V463H354V464H353V464H352V464H351V463H350V463H349V463H348V463H347V464H346V463H345V463H344V464H343V463H342V464H341V463H340Z"/>
<rect x="341" y="459" width="29" height="2" fill="#c8ffc8"/>
<path fill="#00f000" d="M370 464V464H371V464H372V464H373V463H374V464H375V463H376V464H377V463H378V464H379V463H380V463H381V463H382V464H383V463H384V464H385V463H386V463H387V463H388V463H389V463H390V464H391V463H392V463H393V464H394V463H395V463H396V463H397V463H398V464H399V463H400V469H399V469H398V469H397V469H396V469H395V469H394V469H393V469H392V469H391V469H390V469H389V469H388V469H387V469H386V469H385V469H384V469H383V469H382V469H381V469H380V469H379V469H378V469H377V469H376V469H375V470H374V469H373V470H372V469H371V469H370Z"/>
<rect x="371" y="465" width="29" height="2" fill="#c8ffc8"/>
<path fill="#00f000" d="M400 470V470H401V470H402V470H403V469H404V470H405V470H406V470H407V470H408V470H409V470H410V470H411V470H412V470H413V470H414V470H415V470H416V470H417V470H418V470H419V470H420V470H421V470H422V470H423V470H424V470H425V470H426V470H427V470H428V470H429V470H430V476H429V476H428V476H427V476H426V476H425V476H424V476H423V476H422V476H421V476H420V476H419V476H418V476H417V476H416V476H415V476H414V476H413V476H412V476H411V476H410V476H409V476H408V476H407V476H406V476H405V476H404V476H403V476H402V477H401V476H400Z"/>
<rect x="401" y="472" width="29" height="2" fill="#c8ffc8"/>
<path fill="#00f000" d="M430 475V475H431V475H432V475H433V474H434V475H435V475H436V475H437V475H438V475H439V475H440V475H441V475H442V475H443V475H444V475H445V474H446V475H447V475H448V475H449V475H450V475H451V475H452V475H453V475H454V475H455V475H456V475H457V475H458V475H459V475H460V481H459V481H458V481H457V481H456V481H455V481H454V481H453V481H452V481H451V482H450V481H449V481H448V481H447V481H446V481H445V481H444V481H443V481H442V481H441V481H440V481H439V481H438V481H437V481H436V481H435V481H434V481H433V481H432V481H431V481H430Z"/>
<rect x="431" y="476" width="29" height="2" fill="#c8ffc8"/>
<path fill="#00f000" d="M460 480V480H461V480H462V480H463V479H464V480H465V480H466V480H467V480H468V480H469V480H470V480H471V480H472V480H473V480H474V480H475V480H476V480H477V480H478V480H479V479H480V480H481V480H482V480H483V480H484V480H485V479H486V479H487V480H488V480H489V480H490V487H489V487H488V487H487V487H486V487H485V486H484V487H483V487H482V487H481V487H480V487H479V486H478V487H477V487H476V487H475V486H474V487H473V487H472V486H471V486H470V486H469V487H468V487H467V486H466V487H465V487H464V487H463V487H462V486H461V487H460Z"/>
<rect x="461" y="483" width="29" height="2" fill="#c8ffc8"/>
<path fill="#00f000" d="M490 483V483H491V483H492V483H493V483H494V483H495V483H496V483H497V483H498V484H499V484H500V484H501V483H502V483H503V484H504V483H505V483H506V483H507V484H508V483H509V484H510V484H511V483H512V483H513V483H514V483H515V483H516V484H517V484H518V483H519V483H520V489H519V489H518V489H517V489H516V489H515V489H514V489H513V489H512V489H511V489H510V489H509V489H508V489H507V489H506V489H505V489H504V489H503V489H502V489H501V489H500V489H499V489H498V489H497V489H496V489H495V489H494V489H493V489H492V489H491V491H490Z"/>
<rect x="491" y="485" width="29" height="2" fill="#c8ffc8"/>
<path fill="#00f000" d="M520 486V486H521V486H522V486H523V486H524V486H525V487H526V486H527V486H528V486H529V486H530V486H531V486H532V486H533V486H534V486H535V486H536V486H537V486H538V486H539V485H540V486H541V486H542V486H543V486H544V486H545V486H546V486H547V486H548V486H549V486H550V492H549V492H548V492H547V492H546V492H545V492H544V492H543V492H542V492H541V492H540V492H539V492H538V492H537V492H536V492H535V492H534V492H533V493H532V492H531V492H530V492H529V492H528V492H527V492H526V492H525V492H524V492H523V492H522V492H521V492H520Z"/>
<rect x="521" y="488" width="29" height="2" fill="#c8ffc8"/>
<path fill="#00f000" d="M550 487V487H551V488H552V487H553V488H554V487H555V487H556V487H557V488H558V487H559V487H560V488H561V487H562V488H563V487H564V488H565V487H566V488H567V487H568V488H569V487H570V488H571V487H572V487H573V487H574V487H575V487H576V487H577V487H578V487H579V487H580V494H579V494H578V493H577V493H576V494H575V493H574V494H573V494H572V493H571V493H570V494H569V494H568V493H567V493H566V494H565V494H564V493H563V493H562V494H561V493H560V494H559V494H558V494H557V493H556V493H555V493H554V494H553V494H552V494H551V493H550Z"/>
<rect x="551" y="489" width="29" height="2" fill="#c8ffc8"/>
<path fill="#00f000" d="M580 487V487H581V487H582V488H583V488H584V487H585V488H586V488H587V487H588V488H589V488H590V487H591V487H592V487H593V487H594V488H595V487H596V487H597V487H598V488H599V488H600V488H601V488H602V488H603V487H604V487H605V488H606V486H607V488H608V488H609V488H610V495H609V496H608V495H607V495H606V495H605V495H604V495H603V495H602V495H601V495H600V495H599V495H598V495H597V496H596V495H595V495H594V495H593V495H592V495H591V495H590V495H589V495H588V495H587V495H586V495H585V495H584V495H583V495H582V495H581V495H580Z"/>
<rect x="581" y="490" width="29" height="2" fill="#c8ffc8"/>
<path fill="#00f000" d="M610 488V488H611V487H612V487H613V488H614V487H615V487H616V487H617V487H618V487H619V487H620V488H621V487H622V487H623V487H624V487H625V488H626V487H627V487H628V487H629V487H630V486H631V487H632V487H633V487H634V488H635V487H636V487H637V487H638V487H639V487H640V494H639V493H638V495H637V494H636V494H635V495H634V494H633V494H632V493H631V494H630V494H629V494H628V494H627V494H626V494H625V494H624V494H623V493H622V494H621V493H620V494H619V494H618V494H617V493H616V494H615V494H614V494H613V493H612V494H611V494H610Z"/>
<rect x="611" y="489" width="29" height="2" fill="#c8ffc8"/>
<path fill="#00f000" d="M640 485V485H641V485H642V485H643V485H644V485H645V485H646V485H647V485H648V485H649V485H650V485H651V485H652V485H653V485H654V485H655V485H656V485H657V485H658V485H659V485H660V485H661V485H662V485H663V485H664V485H665V484H666V485H667V485H668V485H669V485H670V493H669V492H668V492H667V492H666V492H665V492H664V492H663V493H662V493H661V492H660V492H659V492H658V492H657V492H656V492H655V492H654V492H653V493H652V492H651V492H650V492H649V493H648V493H647V492H646V492H645V492H644V492H643V492H642V492H641V492H640Z"/>
<rect x="641" y="487" width="29" height="2" fill="#c8ffc8"/>
<path fill="none" stroke="#00f000" stroke-width="1.3" shape-rendering="auto" d="M670.5 492 L676 400 L680 320 L682 308"/>
<rect x="700" y="304" width="1" height="8" fill="#00f000"/>
<rect x="730" y="294" width="1" height="10" fill="#00f000"/>
<rect x="760" y="290" width="1" height="10" fill="#00f000"/>
<rect x="790" y="284" width="1" height="12" fill="#00f000"/>
<rect x="820" y="282" width="1" height="8" fill="#00f000"/>
<rect x="850" y="279" width="1" height="10" fill="#00f000"/>
<rect x="880" y="278" width="1" height="8" fill="#00f000"/>
<rect x="910" y="276" width="1" height="7" fill="#00f000"/>
<rect x="940" y="276" width="1" height="8" fill="#00f000"/>
<rect x="970" y="278" width="1" height="9" fill="#00f000"/>
<rect x="1000" y="281" width="1" height="8" fill="#00f000"/>
<rect x="1030" y="283" width="1" height="8" fill="#00f000"/>
<rect x="1060" y="286" width="1" height="11" fill="#00f000"/>
<rect x="1090" y="291" width="1" height="10" fill="#00f000"/>
<rect x="1120" y="295" width="1" height="12" fill="#00f000"/>
<rect x="1150" y="301" width="1" height="14" fill="#00f000"/>
<rect x="1180" y="309" width="1" height="14" fill="#00f000"/>
<rect x="1210" y="316" width="1" height="14" fill="#00f000"/>
<rect x="1240" y="324" width="1" height="16" fill="#00f000"/>
<path fill="#00f000" d="M680 306V306H681V306H682V305H683V306H684V306H685V306H686V306H687V306H688V306H689V304H690V306H691V306H692V306H693V306H694V306H695V306H696V305H697V306H698V306H699V306H700V313H699V313H698V314H697V313H696V313H695V313H694V313H693V313H692V313H691V313H690V313H689V313H688V313H687V313H686V313H685V313H684V313H683V313H682V313H681V313H680Z"/>
<rect x="681" y="309" width="19" height="2" fill="#c8ffc8"/>
<path fill="#00f000" d="M700 304V304H701V304H702V303H703V303H704V303H705V303H706V302H707V302H708V302H709V302H710V302H711V302H712V301H713V301H714V301H715V300H716V300H717V300H718V300H719V300H720V300H721V299H722V299H723V299H724V299H725V299H726V298H727V298H728V298H729V298H730V305H729V305H728V305H727V305H726V306H725V306H724V306H723V306H722V306H721V306H720V307H719V307H718V307H717V307H716V307H715V308H714V308H713V308H712V308H711V310H710V309H709V309H708V309H707V309H706V309H705V310H704V310H703V310H702V310H701V310H700Z"/>
<path fill="#c8ffc8" d="M701 305.2288353114642 L730 299.2288353114642 V301.2288353114642 L701 307.2288353114642Z"/>
<path fill="#00f000" d="M730 294V294H731V294H732V294H733V294H734V294H735V294H736V294H737V295H738V294H739V295H740V294H741V294H742V293H743V295H744V295H745V295H746V294H747V294H748V295H749V294H750V294H751V295H752V294H753V294H754V294H755V295H756V294H757V294H758V295H759V294H760V301H759V300H758V301H757V301H756V300H755V301H754V300H753V301H752V301H751V301H750V301H749V300H748V301H747V301H746V301H745V301H744V301H743V301H742V300H741V301H740V301H739V301H738V301H737V300H736V300H735V301H734V301H733V302H732V300H731V301H730Z"/>
<rect x="731" y="296" width="29" height="2" fill="#c8ffc8"/>
<path fill="#00f000" d="M760 290V290H761V290H762V290H763V288H764V290H765V290H766V290H767V290H768V289H769V290H770V290H771V290H772V289H773V290H774V290H775V290H776V290H777V290H778V290H779V290H780V290H781V289H782V290H783V290H784V290H785V289H786V290H787V290H788V290H789V290H790V297H789V297H788V296H787V297H786V296H785V297H784V297H783V296H782V297H781V297H780V296H779V296H778V297H777V296H776V297H775V296H774V296H773V296H772V297H771V296H770V296H769V296H768V296H767V296H766V296H765V297H764V296H763V296H762V296H761V296H760Z"/>
<rect x="761" y="291" width="29" height="2" fill="#c8ffc8"/>
<path fill="#00f000" d="M790 284V284H791V284H792V284H793V284H794V284H795V284H796V285H797V285H798V284H799V285H800V284H801V284H802V285H803V284H804V284H805V284H806V284H807V285H808V285H809V284H810V284H811V284H812V284H813V285H814V285H815V284H816V284H817V284H818V284H819V284H820V291H819V290H818V291H817V291H816V290H815V291H814V290H813V290H812V291H811V291H810V290H809V291H808V291H807V290H806V291H805V291H804V291H803V291H802V291H801V290H800V290H799V290H798V290H797V291H796V290H795V291H794V291H793V290H792V291H791V291H790Z"/>
<rect x="791" y="286" width="29" height="2" fill="#c8ffc8"/>
<path fill="#00f000" d="M820 283V283H821V282H822V283H823V283H824V283H825V283H826V283H827V283H828V283H829V282H830V283H831V282H832V282H833V283H834V282H835V282H836V283H837V282H838V282H839V283H840V283H841V283H842V282H843V283H844V283H845V283H846V282H847V282H848V282H849V282H850V289H849V289H848V289H847V289H846V289H845V289H844V288H843V289H842V289H841V289H840V288H839V289H838V288H837V288H836V288H835V288H834V289H833V289H832V288H831V288H830V289H829V288H828V289H827V289H826V288H825V288H824V290H823V289H822V289H821V289H820Z"/>
<rect x="821" y="284" width="29" height="2" fill="#c8ffc8"/>
<path fill="#00f000" d="M850 279V279H851V279H852V279H853V279H854V279H855V279H856V279H857V279H858V279H859V279H860V278H861V279H862V279H863V279H864V279H865V279H866V279H867V279H868V279H869V279H870V279H871V279H872V279H873V279H874V279H875V279H876V279H877V279H878V279H879V279H880V285H879V285H878V285H877V285H876V285H875V286H874V285H873V285H872V285H871V285H870V285H869V285H868V285H867V285H866V285H865V285H864V285H863V285H862V285H861V285H860V285H859V285H858V285H857V285H856V285H855V285H854V285H853V285H852V285H851V285H850Z"/>
<rect x="851" y="281" width="29" height="2" fill="#c8ffc8"/>
<path fill="#00f000" d="M880 277V277H881V277H882V277H883V277H884V277H885V277H886V277H887V277H888V277H889V276H890V277H891V277H892V277H893V277H894V277H895V277H896V275H897V276H898V277H899V277H900V277H901V277H902V277H903V277H904V277H905V275H906V277H907V277H908V277H909V275H910V284H909V284H908V284H907V284H906V284H905V284H904V284H903V284H902V284H901V284H900V284H899V284H898V284H897V284H896V284H895V284H894V284H893V284H892V284H891V284H890V284H889V284H888V284H887V284H886V284H885V284H884V284H883V284H882V284H881V284H880Z"/>
<rect x="881" y="280" width="29" height="2" fill="#c8ffc8"/>
<path fill="#00f000" d="M910 276V276H911V276H912V276H913V276H914V276H915V276H916V276H917V276H918V276H919V276H920V276H921V276H922V276H923V276H924V276H925V276H926V276H927V276H928V276H929V276H930V276H931V276H932V276H933V276H934V276H935V276H936V276H937V276H938V276H939V276H940V283H939V283H938V283H937V283H936V283H935V283H934V283H933V283H932V283H931V283H930V283H929V283H928V283H927V283H926V283H925V283H924V283H923V283H922V283H921V283H920V283H919V283H918V283H917V283H916V283H915V283H914V283H913V283H912V283H911V283H910Z"/>
<rect x="911" y="278" width="29" height="2" fill="#c8ffc8"/>
<path fill="#00f000" d="M940 277V277H941V277H942V277H943V277H944V277H945V278H946V277H947V278H948V277H949V277H950V277H951V277H952V278H953V277H954V277H955V278H956V277H957V277H958V278H959V277H960V278H961V277H962V277H963V277H964V278H965V278H966V277H967V277H968V277H969V277H970V285H969V284H968V285H967V285H966V285H965V285H964V284H963V284H962V285H961V285H960V285H959V284H958V284H957V284H956V284H955V285H954V285H953V285H952V285H951V285H950V284H949V285H948V284H947V285H946V285H945V285H944V285H943V285H942V285H941V285H940Z"/>
<rect x="941" y="279" width="29" height="2" fill="#c8ffc8"/>
<path fill="#00f000" d="M970 280V280H971V280H972V279H973V280H974V280H975V280H976V280H977V280H978V280H979V280H980V280H981V280H982V280H983V280H984V280H985V280H986V280H987V280H988V280H989V280H990V280H991V280H992V280H993V280H994V280H995V280H996V280H997V280H998V280H999V280H1000V288H999V288H998V288H997V288H996V288H995V287H994V287H993V287H992V287H991V287H990V287H989V287H988V288H987V288H986V287H985V288H984V287H983V288H982V288H981V288H980V287H979V288H978V287H977V287H976V287H975V288H974V287H973V287H972V287H971V288H970Z"/>
<rect x="971" y="282" width="29" height="2" fill="#c8ffc8"/>
<path fill="#00f000" d="M1000 284V284H1001V284H1002V283H1003V283H1004V283H1005V283H1006V283H1007V282H1008V283H1009V283H1010V283H1011V283H1012V283H1013V284H1014V283H1015V283H1016V283H1017V284H1018V283H1019V283H1020V284H1021V282H1022V283H1023V284H1024V283H1025V283H1026V283H1027V283H1028V284H1029V284H1030V289H1029V289H1028V289H1027V289H1026V289H1025V289H1024V289H1023V289H1022V289H1021V289H1020V289H1019V289H1018V289H1017V289H1016V289H1015V289H1014V289H1013V289H1012V289H1011V289H1010V289H1009V289H1008V289H1007V289H1006V289H1005V289H1004V289H1003V289H1002V289H1001V289H1000Z"/>
<rect x="1001" y="285" width="29" height="2" fill="#c8ffc8"/>
<path fill="#00f000" d="M1030 286V286H1031V286H1032V286H1033V285H1034V286H1035V286H1036V286H1037V286H1038V286H1039V286H1040V286H1041V286H1042V286H1043V285H1044V286H1045V286H1046V286H1047V286H1048V286H1049V286H1050V286H1051V285H1052V286H1053V286H1054V286H1055V286H1056V286H1057V286H1058V286H1059V286H1060V291H1059V292H1058V292H1057V292H1056V292H1055V292H1054V292H1053V292H1052V292H1051V292H1050V292H1049V292H1048V291H1047V292H1046V291H1045V292H1044V292H1043V291H1042V292H1041V291H1040V291H1039V292H1038V292H1037V292H1036V292H1035V291H1034V292H1033V292H1032V292H1031V292H1030Z"/>
<rect x="1031" y="287" width="29" height="2" fill="#c8ffc8"/>
<path fill="#00f000" d="M1060 291V291H1061V291H1062V290H1063V290H1064V290H1065V291H1066V290H1067V291H1068V291H1069V291H1070V291H1071V291H1072V290H1073V290H1074V291H1075V291H1076V290H1077V291H1078V291H1079V291H1080V291H1081V291H1082V291H1083V291H1084V290H1085V291H1086V291H1087V291H1088V290H1089V291H1090V297H1089V297H1088V297H1087V297H1086V297H1085V297H1084V298H1083V297H1082V297H1081V297H1080V297H1079V297H1078V297H1077V297H1076V297H1075V297H1074V297H1073V297H1072V297H1071V297H1070V297H1069V297H1068V297H1067V297H1066V297H1065V297H1064V297H1063V297H1062V297H1061V297H1060Z"/>
<rect x="1061" y="292" width="29" height="2" fill="#c8ffc8"/>
<path fill="#00f000" d="M1090 294V294H1091V295H1092V294H1093V295H1094V295H1095V294H1096V294H1097V295H1098V295H1099V293H1100V294H1101V295H1102V295H1103V295H1104V294H1105V295H1106V294H1107V294H1108V294H1109V294H1110V294H1111V295H1112V295H1113V294H1114V294H1115V295H1116V295H1117V295H1118V294H1119V295H1120V302H1119V301H1118V301H1117V301H1116V302H1115V302H1114V302H1113V301H1112V301H1111V302H1110V302H1109V302H1108V301H1107V302H1106V301H1105V302H1104V301H1103V301H1102V301H1101V302H1100V302H1099V301H1098V302H1097V301H1096V302H1095V302H1094V302H1093V301H1092V301H1091V302H1090Z"/>
<rect x="1091" y="297" width="29" height="2" fill="#c8ffc8"/>
<path fill="#00f000" d="M1120 301V301H1121V300H1122V300H1123V300H1124V300H1125V301H1126V300H1127V300H1128V300H1129V301H1130V301H1131V301H1132V301H1133V301H1134V301H1135V300H1136V301H1137V301H1138V301H1139V301H1140V301H1141V300H1142V300H1143V300H1144V301H1145V300H1146V300H1147V301H1148V301H1149V301H1150V309H1149V308H1148V308H1147V308H1146V308H1145V308H1144V308H1143V308H1142V308H1141V308H1140V308H1139V308H1138V308H1137V309H1136V308H1135V308H1134V308H1133V308H1132V308H1131V308H1130V308H1129V308H1128V308H1127V308H1126V308H1125V309H1124V308H1123V308H1122V309H1121V308H1120Z"/>
<rect x="1121" y="303" width="29" height="2" fill="#c8ffc8"/>
<path fill="#00f000" d="M1150 309V309H1151V309H1152V309H1153V309H1154V309H1155V308H1156V308H1157V308H1158V309H1159V309H1160V308H1161V309H1162V309H1163V308H1164V309H1165V309H1166V309H1167V309H1168V308H1169V309H1170V308H1171V308H1172V309H1173V307H1174V308H1175V309H1176V308H1177V308H1178V309H1179V309H1180V315H1179V315H1178V316H1177V315H1176V315H1175V315H1174V315H1173V315H1172V315H1171V315H1170V316H1169V315H1168V315H1167V315H1166V315H1165V315H1164V315H1163V315H1162V315H1161V315H1160V315H1159V315H1158V315H1157V315H1156V315H1155V315H1154V315H1153V315H1152V315H1151V315H1150Z"/>
<rect x="1151" y="311" width="29" height="2" fill="#c8ffc8"/>
<path fill="#00f000" d="M1180 317V317H1181V316H1182V317H1183V316H1184V316H1185V316H1186V316H1187V316H1188V316H1189V317H1190V316H1191V317H1192V317H1193V316H1194V317H1195V316H1196V317H1197V317H1198V317H1199V317H1200V317H1201V317H1202V317H1203V316H1204V317H1205V317H1206V317H1207V316H1208V316H1209V316H1210V323H1209V323H1208V323H1207V322H1206V322H1205V322H1204V322H1203V323H1202V323H1201V322H1200V322H1199V322H1198V322H1197V323H1196V322H1195V323H1194V322H1193V323H1192V322H1191V322H1190V322H1189V324H1188V323H1187V324H1186V322H1185V323H1184V322H1183V322H1182V323H1181V322H1180Z"/>
<rect x="1181" y="319" width="29" height="2" fill="#c8ffc8"/>
<path fill="#00f000" d="M1210 324V324H1211V324H1212V324H1213V324H1214V324H1215V324H1216V324H1217V324H1218V324H1219V324H1220V324H1221V324H1222V324H1223V324H1224V324H1225V324H1226V324H1227V324H1228V324H1229V324H1230V324H1231V324H1232V323H1233V324H1234V324H1235V324H1236V324H1237V324H1238V324H1239V324H1240V331H1239V331H1238V331H1237V331H1236V331H1235V331H1234V331H1233V331H1232V331H1231V331H1230V331H1229V331H1228V331H1227V331H1226V331H1225V331H1224V331H1223V331H1222V331H1221V331H1220V331H1219V331H1218V331H1217V331H1216V331H1215V331H1214V331H1213V331H1212V331H1211V332H1210Z"/>
<rect x="1211" y="327" width="29" height="2" fill="#c8ffc8"/>
<path fill="#00f000" d="M1240 334V334H1241V334H1242V334H1243V334H1244V334H1245V333H1246V334H1247V334H1248V334H1249V334H1250V334H1251V334H1252V334H1253V334H1254V334H1255V334H1256V334H1257V334H1258V334H1259V334H1260V334H1261V334H1262V334H1263V334H1264V334H1265V334H1266V334H1267V334H1268V334H1269V334H1270V341H1269V341H1268V341H1267V341H1266V341H1265V341H1264V341H1263V341H1262V341H1261V341H1260V341H1259V341H1258V341H1257V341H1256V341H1255V341H1254V341H1253V341H1252V341H1251V341H1250V341H1249V341H1248V341H1247V341H1246V341H1245V341H1244V341H1243V341H1242V341H1241V341H1240Z"/>
<rect x="1241" y="336" width="29" height="2" fill="#c8ffc8"/>
<rect x="70" y="365" width="1" height="10" fill="#00f000"/>
<path fill="#00b8b8" d="M70 503V503H71V503H72V503H73V503H74V503H75V503H76V502H77V503H78V503H79V503H80V503H81V503H82V502H83V503H84V503H85V503H86V503H87V503H88V503H89V503H90V503H91V503H92V503H93V503H94V503H95V503H96V503H97V502H98V503H99V503H100V503H101V503H102V503H103V503H104V503H105V503H106V503H107V503H108V503H109V503H110V503H111V503H112V503H113V503H114V503H115V503H116V501H117V503H118V503H119V502H120V503H121V503H122V503H123V503H124V503H125V503H126V503H127V503H128V503H129V503H130V503H131V503H132V503H133V503H134V503H135V503H136V503H137V503H138V503H139V503H140V503H141V503H142V503H143V503H144V503H145V503H146V503H147V503H148V503H149V503H150V503H151V503H152V503H153V501H154V503H155V503H156V503H157V503H158V503H159V503H160V503H161V503H162V503H163V503H164V503H165V503H166V503H167V503H168V503H169V503H170V503H171V503H172V503H173V503H174V503H175V503H176V503H177V503H178V503H179V502H180V502H181V503H182V502H183V503H184V503H185V503H186V503H187V503H188V503H189V503H190V503H191V503H192V503H193V503H194V503H195V503H196V503H197V503H198V503H199V503H200V503H201V503H202V503H203V503H204V503H205V503H206V503H207V503H208V503H209V503H210V503H211V503H212V503H213V503H214V503H215V503H216V503H217V503H218V503H219V503H220V503H221V503H222V503H223V502H224V503H225V503H226V503H227V503H228V503H229V503H230V503H231V503H232V503H233V503H234V503H235V503H236V503H237V503H238V503H239V503H240V502H241V502H242V503H243V503H244V503H245V502H246V503H247V503H248V503H249V502H250V503H251V503H252V503H253V503H254V503H255V503H256V502H257V503H258V503H259V503H260V503H261V503H262V503H263V503H264V503H265V503H266V503H267V503H268V503H269V502H270V503H271V503H272V503H273V503H274V502H275V503H276V503H277V503H278V503H279V503H280V503H281V503H282V503H283V503H284V503H285V503H286V503H287V502H288V503H289V503H290V503H291V503H292V503H293V503H294V503H295V503H296V503H297V503H298V503H299V503H300V503H301V503H302V503H303V503H304V503H305V503H306V502H307V503H308V503H309V503H310V502H311V503H312V503H313V503H314V503H315V503H316V503H317V503H318V503H319V503H320V503H321V502H322V503H323V503H324V502H325V503H326V503H327V503H328V503H329V503H330V503H331V502H332V503H333V503H334V503H335V503H336V503H337V503H338V503H339V503H340V503H341V503H342V503H343V503H344V503H345V503H346V503H347V503H348V503H349V503H350V503H351V503H352V503H353V503H354V503H355V503H356V503H357V503H358V503H359V503H360V503H361V503H362V503H363V503H364V503H365V503H366V503H367V503H368V503H369V503H370V503H371V503H372V503H373V503H374V503H375V503H376V503H377V503H378V503H379V503H380V503H381V503H382V503H383V503H384V503H385V503H386V503H387V503H388V503H389V503H390V503H391V503H392V503H393V503H394V503H395V503H396V503H397V503H398V503H399V503H400V503H401V503H402V503H403V503H404V503H405V502H406V503H407V503H408V503H409V503H410V503H411V502H412V503H413V503H414V503H415V503H416V503H417V503H418V503H419V503H420V503H421V503H422V503H423V503H424V502H425V503H426V503H427V503H428V503H429V503H430V503H431V503H432V503H433V503H434V503H435V503H436V503H437V503H438V503H439V503H440V503H441V503H442V503H443V503H444V503H445V503H446V503H447V503H448V502H449V503H450V503H451V503H452V502H453V503H454V503H455V503H456V503H457V503H458V503H459V502H460V502H461V503H462V503H463V503H464V503H465V503H466V503H467V503H468V503H469V503H470V503H471V503H472V503H473V503H474V503H475V503H476V503H477V502H478V503H479V503H480V503H481V503H482V503H483V503H484V503H485V503H486V502H487V503H488V502H489V503H490V503H491V503H492V503H493V503H494V503H495V503H496V503H497V503H498V503H499V503H500V503H501V503H502V503H503V503H504V503H505V503H506V503H507V503H508V502H509V503H510V502H511V503H512V503H513V503H514V503H515V503H516V503H517V503H518V503H519V503H520V503H521V503H522V503H523V503H524V503H525V503H526V503H527V503H528V503H529V503H530V503H531V503H532V503H533V503H534V503H535V503H536V503H537V503H538V503H539V503H540V503H541V503H542V502H543V503H544V503H545V503H546V503H547V503H548V503H549V501H550V503H551V503H552V503H553V503H554V503H555V503H556V503H557V502H558V503H559V503H560V503H561V503H562V503H563V503H564V503H565V503H566V503H567V503H568V503H569V503H570V503H571V503H572V503H573V503H574V502H575V503H576V503H577V502H578V503H579V503H580V503H581V503H582V503H583V503H584V503H585V503H586V503H587V503H588V503H589V502H590V503H591V503H592V503H593V503H594V502H595V503H596V503H597V503H598V503H599V503H600V502H601V503H602V503H603V503H604V503H605V503H606V503H607V503H608V503H609V503H610V503H611V503H612V503H613V503H614V503H615V503H616V503H617V503H618V503H619V503H620V503H621V503H622V503H623V503H624V503H625V503H626V503H627V503H628V503H629V503H630V503H631V503H632V503H633V503H634V503H635V503H636V503H637V502H638V503H639V503H640V503H641V503H642V503H643V503H644V503H645V503H646V503H647V503H648V503H649V503H650V503H651V503H652V503H653V503H654V503H655V503H656V503H657V503H658V503H659V503H660V503H661V503H662V503H663V503H664V503H665V509H664V509H663V509H662V509H661V509H660V509H659V509H658V509H657V509H656V509H655V509H654V509H653V509H652V509H651V509H650V509H649V509H648V509H647V509H646V509H645V509H644V509H643V509H642V509H641V509H640V509H639V509H638V509H637V509H636V509H635V509H634V509H633V509H632V509H631V509H630V509H629V509H628V509H627V509H626V509H625V509H624V509H623V509H622V509H621V509H620V509H619V509H618V509H617V509H616V509H615V509H614V509H613V509H612V509H611V509H610V509H609V509H608V509H607V509H606V509H605V509H604V509H603V509H602V509H601V509H600V509H599V509H598V509H597V509H596V509H595V509H594V509H593V509H592V509H591V509H590V509H589V509H588V509H587V509H586V509H585V509H584V509H583V509H582V509H581V509H580V509H579V509H578V509H577V509H576V509H575V509H574V509H573V509H572V509H571V509H570V509H569V509H568V509H567V509H566V509H565V509H564V509H563V509H562V509H561V509H560V509H559V509H558V509H557V509H556V510H555V510H554V509H553V510H552V509H551V509H550V509H549V509H548V509H547V509H546V509H545V509H544V509H543V509H542V509H541V509H540V509H539V509H538V509H537V509H536V510H535V509H534V509H533V509H532V509H531V509H530V509H529V509H528V509H527V509H526V509H525V509H524V509H523V509H522V509H521V509H520V509H519V509H518V509H517V509H516V509H515V509H514V509H513V509H512V509H511V509H510V509H509V509H508V509H507V509H506V509H505V509H504V509H503V509H502V509H501V509H500V509H499V509H498V509H497V509H496V509H495V510H494V509H493V509H492V509H491V509H490V509H489V509H488V509H487V509H486V509H485V509H484V509H483V509H482V509H481V509H480V509H479V510H478V510H477V509H476V509H475V509H474V509H473V509H472V509H471V509H470V509H469V509H468V509H467V509H466V509H465V509H464V509H463V509H462V509H461V509H460V510H459V509H458V509H457V509H456V509H455V509H454V509H453V509H452V509H451V509H450V509H449V510H448V509H447V509H446V509H445V509H444V509H443V509H442V509H441V509H440V509H439V509H438V509H437V509H436V509H435V509H434V509H433V509H432V509H431V509H430V509H429V509H428V509H427V509H426V509H425V509H424V509H423V509H422V509H421V509H420V509H419V509H418V509H417V509H416V509H415V509H414V509H413V509H412V509H411V509H410V509H409V509H408V510H407V509H406V509H405V509H404V509H403V509H402V509H401V509H400V509H399V509H398V509H397V509H396V509H395V509H394V510H393V509H392V509H391V509H390V509H389V509H388V509H387V509H386V509H385V509H384V509H383V509H382V509H381V509H380V509H379V510H378V509H377V509H376V509H375V509H374V509H373V509H372V509H371V509H370V509H369V509H368V509H367V509H366V509H365V509H364V509H363V509H362V509H361V509H360V509H359V509H358V509H357V509H356V509H355V509H354V509H353V509H352V510H351V509H350V509H349V509H348V509H347V509H346V509H345V509H344V509H343V509H342V509H341V509H340V509H339V509H338V509H337V509H336V509H335V509H334V509H333V509H332V509H331V509H330V509H329V509H328V509H327V509H326V509H325V509H324V509H323V509H322V509H321V509H320V509H319V509H318V509H317V509H316V509H315V509H314V509H313V509H312V509H311V509H310V509H309V509H308V509H307V509H306V509H305V509H304V509H303V509H302V509H301V509H300V509H299V509H298V509H297V510H296V509H295V509H294V509H293V509H292V509H291V509H290V509H289V509H288V509H287V509H286V509H285V509H284V509H283V509H282V509H281V509H280V509H279V509H278V509H277V509H276V510H275V509H274V509H273V509H272V509H271V510H270V509H269V509H268V509H267V509H266V509H265V510H264V509H263V509H262V509H261V509H260V509H259V509H258V510H257V509H256V509H255V509H254V509H253V510H252V509H251V509H250V509H249V509H248V509H247V509H246V509H245V509H244V509H243V509H242V509H241V509H240V509H239V509H238V509H237V509H236V509H235V509H234V509H233V510H232V509H231V509H230V509H229V509H228V509H227V509H226V509H225V509H224V509H223V509H222V510H221V509H220V509H219V509H218V509H217V509H216V509H215V509H214V509H213V509H212V509H211V509H210V509H209V509H208V509H207V509H206V509H205V509H204V509H203V509H202V509H201V509H200V510H199V509H198V509H197V509H196V509H195V510H194V509H193V509H192V509H191V509H190V509H189V509H188V509H187V509H186V509H185V509H184V509H183V509H182V509H181V509H180V510H179V509H178V509H177V509H176V509H175V509H174V509H173V509H172V509H171V509H170V509H169V510H168V509H167V509H166V509H165V509H164V509H163V509H162V509H161V509H160V509H159V509H158V509H157V509H156V509H155V509H154V509H153V509H152V509H151V509H150V509H149V509H148V509H147V509H146V509H145V509H144V510H143V509H142V509H141V509H140V509H139V509H138V509H137V509H136V509H135V509H134V509H133V509H132V509H131V509H130V509H129V509H128V509H127V509H126V510H125V509H124V509H123V509H122V509H121V510H120V509H119V509H118V509H117V509H116V509H115V510H114V509H113V509H112V509H111V509H110V509H109V509H108V509H107V509H106V509H105V509H104V509H103V509H102V509H101V509H100V509H99V509H98V509H97V509H96V509H95V509H94V509H93V509H92V509H91V510H90V509H89V509H88V509H87V510H86V509H85V510H84V509H83V509H82V509H81V509H80V509H79V509H78V509H77V509H76V509H75V509H74V509H73V509H72V509H71V509H70Z"/>
<path fill="#00b8b8" d="M670 503V503H671V503H672V503H673V503H674V503H675V503H676V502H677V503H678V503H679V503H680V503H681V503H682V503H683V503H684V502H685V503H686V503H687V503H688V503H689V503H690V503H691V503H692V503H693V503H694V503H695V503H696V503H697V503H698V503H699V503H700V503H701V503H702V503H703V503H704V503H705V503H706V503H707V503H708V503H709V503H710V503H711V503H712V503H713V503H714V503H715V503H716V503H717V503H718V502H719V502H720V503H721V503H722V503H723V503H724V503H725V503H726V503H727V503H728V503H729V503H730V503H731V503H732V503H733V503H734V503H735V503H736V503H737V503H738V502H739V503H740V503H741V503H742V503H743V503H744V503H745V503H746V503H747V503H748V503H749V503H750V503H751V503H752V503H753V503H754V503H755V503H756V503H757V503H758V503H759V503H760V503H761V503H762V503H763V503H764V503H765V503H766V503H767V503H768V503H769V503H770V503H771V503H772V503H773V503H774V503H775V503H776V502H777V503H778V503H779V502H780V503H781V503H782V503H783V503H784V503H785V503H786V503H787V503H788V503H789V503H790V503H791V502H792V501H793V503H794V503H795V503H796V503H797V503H798V503H799V503H800V503H801V503H802V503H803V503H804V503H805V503H806V503H807V503H808V503H809V502H810V503H811V502H812V503H813V503H814V502H815V503H816V503H817V503H818V503H819V502H820V503H821V503H822V503H823V503H824V503H825V502H826V503H827V503H828V503H829V503H830V503H831V503H832V502H833V503H834V503H835V503H836V503H837V503H838V503H839V503H840V503H841V503H842V503H843V502H844V503H845V503H846V503H847V503H848V503H849V503H850V503H851V503H852V503H853V503H854V503H855V503H856V503H857V503H858V503H859V503H860V502H861V503H862V503H863V503H864V503H865V503H866V503H867V503H868V503H869V503H870V503H871V503H872V502H873V503H874V503H875V503H876V503H877V503H878V503H879V503H880V503H881V503H882V503H883V503H884V501H885V503H886V503H887V502H888V503H889V502H890V503H891V503H892V503H893V503H894V503H895V503H896V503H897V503H898V503H899V503H900V503H901V503H902V503H903V503H904V503H905V503H906V503H907V503H908V503H909V503H910V503H911V503H912V503H913V503H914V503H915V503H916V503H917V503H918V503H919V503H920V503H921V503H922V503H923V503H924V503H925V503H926V503H927V503H928V503H929V503H930V503H931V502H932V503H933V503H934V503H935V503H936V503H937V503H938V503H939V503H940V503H941V503H942V503H943V503H944V503H945V503H946V503H947V503H948V503H949V502H950V502H951V502H952V503H953V503H954V503H955V503H956V502H957V503H958V503H959V503H960V503H961V503H962V503H963V503H964V503H965V503H966V503H967V503H968V503H969V503H970V503H971V502H972V503H973V503H974V503H975V503H976V503H977V503H978V503H979V503H980V503H981V503H982V503H983V503H984V503H985V503H986V503H987V503H988V503H989V503H990V503H991V503H992V503H993V503H994V503H995V503H996V503H997V503H998V503H999V503H1000V503H1001V503H1002V503H1003V503H1004V503H1005V503H1006V503H1007V503H1008V503H1009V503H1010V503H1011V503H1012V503H1013V503H1014V503H1015V503H1016V503H1017V503H1018V503H1019V503H1020V503H1021V503H1022V503H1023V503H1024V503H1025V503H1026V503H1027V503H1028V503H1029V503H1030V503H1031V503H1032V503H1033V502H1034V503H1035V502H1036V503H1037V503H1038V503H1039V503H1040V503H1041V503H1042V503H1043V502H1044V503H1045V503H1046V502H1047V503H1048V503H1049V503H1050V503H1051V503H1052V503H1053V503H1054V503H1055V503H1056V502H1057V503H1058V503H1059V503H1060V503H1061V503H1062V503H1063V503H1064V503H1065V503H1066V503H1067V503H1068V502H1069V503H1070V503H1071V503H1072V503H1073V503H1074V503H1075V503H1076V503H1077V503H1078V503H1079V503H1080V503H1081V503H1082V503H1083V503H1084V503H1085V503H1086V503H1087V503H1088V503H1089V503H1090V503H1091V503H1092V503H1093V503H1094V503H1095V503H1096V502H1097V503H1098V502H1099V503H1100V503H1101V503H1102V503H1103V503H1104V503H1105V503H1106V503H1107V503H1108V503H1109V503H1110V503H1111V503H1112V503H1113V503H1114V503H1115V503H1116V503H1117V501H1118V503H1119V503H1120V503H1121V503H1122V503H1123V502H1124V503H1125V503H1126V503H1127V503H1128V502H1129V503H1130V503H1131V503H1132V503H1133V503H1134V503H1135V503H1136V503H1137V503H1138V503H1139V503H1140V503H1141V503H1142V503H1143V503H1144V503H1145V503H1146V503H1147V503H1148V503H1149V503H1150V503H1151V503H1152V503H1153V503H1154V502H1155V503H1156V503H1157V503H1158V503H1159V503H1160V503H1161V503H1162V503H1163V503H1164V503H1165V503H1166V503H1167V503H1168V503H1169V503H1170V503H1171V503H1172V503H1173V503H1174V503H1175V503H1176V503H1177V503H1178V503H1179V502H1180V502H1181V503H1182V502H1183V503H1184V503H1185V503H1186V503H1187V503H1188V503H1189V503H1190V503H1191V503H1192V503H1193V503H1194V503H1195V503H1196V503H1197V503H1198V502H1199V503H1200V503H1201V503H1202V503H1203V503H1204V503H1205V503H1206V503H1207V503H1208V503H1209V503H1210V503H1211V503H1212V503H1213V503H1214V503H1215V503H1216V502H1217V503H1218V503H1219V503H1220V503H1221V503H1222V503H1223V503H1224V502H1225V502H1226V503H1227V503H1228V503H1229V503H1230V503H1231V503H1232V502H1233V503H1234V503H1235V503H1236V503H1237V503H1238V503H1239V503H1240V503H1241V503H1242V503H1243V503H1244V503H1245V503H1246V503H1247V503H1248V503H1249V503H1250V503H1251V503H1252V502H1253V503H1254V503H1255V503H1256V503H1257V503H1258V503H1259V503H1260V503H1261V503H1262V502H1263V503H1264V503H1265V503H1266V503H1267V503H1268V503H1269V509H1268V509H1267V509H1266V510H1265V509H1264V509H1263V509H1262V509H1261V509H1260V509H1259V509H1258V509H1257V510H1256V509H1255V509H1254V509H1253V510H1252V509H1251V509H1250V509H1249V509H1248V509H1247V509H1246V509H1245V509H1244V509H1243V509H1242V509H1241V509H1240V509H1239V509H1238V509H1237V509H1236V509H1235V509H1234V509H1233V509H1232V509H1231V510H1230V509H1229V509H1228V509H1227V510H1226V510H1225V509H1224V509H1223V509H1222V509H1221V509H1220V509H1219V509H1218V509H1217V509H1216V509H1215V509H1214V509H1213V509H1212V509H1211V509H1210V509H1209V509H1208V509H1207V509H1206V509H1205V509H1204V509H1203V509H1202V509H1201V509H1200V509H1199V509H1198V509H1197V509H1196V509H1195V509H1194V509H1193V510H1192V509H1191V510H1190V510H1189V509H1188V509H1187V509H1186V509H1185V509H1184V509H1183V509H1182V509H1181V509H1180V509H1179V509H1178V509H1177V509H1176V509H1175V509H1174V509H1173V509H1172V509H1171V509H1170V509H1169V509H1168V509H1167V509H1166V509H1165V509H1164V509H1163V509H1162V509H1161V509H1160V509H1159V510H1158V509H1157V509H1156V509H1155V509H1154V510H1153V509H1152V509H1151V509H1150V509H1149V509H1148V510H1147V509H1146V509H1145V509H1144V509H1143V509H1142V509H1141V509H1140V509H1139V509H1138V509H1137V510H1136V509H1135V509H1134V509H1133V509H1132V509H1131V509H1130V509H1129V510H1128V509H1127V509H1126V509H1125V509H1124V509H1123V509H1122V509H1121V509H1120V509H1119V509H1118V509H1117V509H1116V509H1115V509H1114V510H1113V509H1112V509H1111V509H1110V509H1109V509H1108V509H1107V509H1106V509H1105V509H1104V509H1103V509H1102V509H1101V509H1100V509H1099V509H1098V509H1097V509H1096V509H1095V509H1094V509H1093V509H1092V509H1091V509H1090V509H1089V509H1088V509H1087V509H1086V510H1085V511H1084V509H1083V509H1082V509H1081V509H1080V509H1079V509H1078V509H1077V509H1076V509H1075V510H1074V509H1073V509H1072V509H1071V509H1070V509H1069V509H1068V509H1067V509H1066V509H1065V509H1064V509H1063V509H1062V509H1061V509H1060V509H1059V509H1058V509H1057V509H1056V509H1055V509H1054V509H1053V509H1052V509H1051V509H1050V509H1049V509H1048V509H1047V509H1046V509H1045V509H1044V509H1043V510H1042V509H1041V509H1040V509H1039V509H1038V509H1037V509H1036V509H1035V509H1034V509H1033V509H1032V509H1031V509H1030V509H1029V509H1028V509H1027V509H1026V509H1025V509H1024V509H1023V509H1022V509H1021V509H1020V510H1019V510H1018V509H1017V509H1016V509H1015V509H1014V509H1013V509H1012V509H1011V509H1010V509H1009V509H1008V509H1007V509H1006V509H1005V509H1004V509H1003V509H1002V509H1001V509H1000V509H999V509H998V509H997V509H996V509H995V509H994V509H993V509H992V509H991V509H990V509H989V509H988V509H987V509H986V509H985V509H984V509H983V509H982V509H981V509H980V509H979V509H978V509H977V509H976V509H975V509H974V509H973V509H972V509H971V509H970V509H969V510H968V509H967V509H966V509H965V509H964V509H963V509H962V509H961V509H960V509H959V509H958V509H957V509H956V509H955V510H954V509H953V509H952V509H951V509H950V509H949V509H948V509H947V509H946V509H945V509H944V509H943V509H942V509H941V509H940V509H939V510H938V510H937V509H936V509H935V509H934V509H933V509H932V509H931V509H930V509H929V509H928V509H927V509H926V509H925V509H924V509H923V509H922V509H921V509H920V509H919V509H918V509H917V509H916V509H915V509H914V509H913V509H912V509H911V509H910V509H909V509H908V509H907V509H906V509H905V509H904V509H903V509H902V509H901V509H900V510H899V509H898V509H897V509H896V509H895V509H894V509H893V509H892V509H891V509H890V509H889V509H888V509H887V509H886V509H885V509H884V509H883V509H882V509H881V509H880V509H879V509H878V509H877V509H876V509H875V509H874V509H873V509H872V510H871V509H870V509H869V509H868V509H867V509H866V509H865V509H864V509H863V509H862V509H861V509H860V509H859V509H858V509H857V509H856V509H855V510H854V509H853V509H852V509H851V509H850V510H849V509H848V509H847V509H846V509H845V509H844V509H843V509H842V509H841V509H840V509H839V509H838V510H837V509H836V509H835V509H834V509H833V509H832V509H831V510H830V509H829V509H828V509H827V510H826V509H825V509H824V509H823V509H822V509H821V509H820V509H819V509H818V510H817V509H816V509H815V509H814V509H813V509H812V509H811V509H810V509H809V509H808V509H807V509H806V509H805V509H804V509H803V509H802V509H801V509H800V509H799V509H798V510H797V510H796V509H795V511H794V509H793V510H792V509H791V509H790V509H789V509H788V509H787V509H786V509H785V509H784V509H783V509H782V509H781V509H780V509H779V509H778V509H777V509H776V509H775V509H774V509H773V509H772V509H771V509H770V509H769V509H768V510H767V509H766V509H765V509H764V509H763V509H762V509H761V509H760V509H759V509H758V509H757V509H756V509H755V509H754V509H753V509H752V509H751V509H750V509H749V509H748V509H747V509H746V509H745V509H744V509H743V509H742V509H741V509H740V509H739V509H738V510H737V509H736V509H735V509H734V509H733V509H732V510H731V510H730V509H729V509H728V509H727V510H726V509H725V509H724V509H723V509H722V509H721V509H720V509H719V509H718V509H717V509H716V509H715V509H714V509H713V509H712V509H711V509H710V509H709V509H708V509H707V509H706V509H705V509H704V509H703V509H702V509H701V509H700V509H699V509H698V509H697V509H696V509H695V509H694V509H693V509H692V509H691V509H690V509H689V509H688V509H687V509H686V509H685V509H684V509H683V509H682V509H681V509H680V509H679V509H678V509H677V509H676V509H675V511H674V509H673V509H672V509H671V509H670Z"/>
<rect x="70" y="504" width="595" height="4" fill="#00ffff"/>
<rect x="670" y="504" width="599" height="4" fill="#00ffff"/>
<rect x="665" y="506" width="1" height="48" fill="#20a8a8"/>
<rect x="669" y="506" width="1" height="48" fill="#20a8a8"/>
<rect x="665" y="551" width="5" height="5" fill="#20c8c8"/>
<rect x="666" y="553" width="3" height="2" fill="#80ffff"/>
<text x="57" y="185" font-size="9.5" fill="#4a6aff">C6</text>
<text x="57" y="185" font-size="9.5" fill="#ff1818">C</text>
<path d="M63.5 178.5 H68.5 L65.5 185" stroke="#ff1818" stroke-width="1.1" fill="none" shape-rendering="auto"/>
<rect x="60" y="187" width="10" height="2" fill="#ff1818"/>
<rect x="60" y="187" width="1" height="3" fill="#ff1818"/>
<text x="57" y="264" font-size="9.5" fill="#ff66cc">C2</text>
<rect x="60" y="266" width="10" height="2" fill="#ff66cc"/>
<rect x="60" y="266" width="1" height="3" fill="#ff66cc"/>
<rect x="54" y="377" width="16" height="11" rx="2" fill="#e2f2e2"/>
<text x="56" y="386" font-size="9.5" fill="#102010">C5</text>
<rect x="60" y="389" width="10" height="1" fill="#e2f2e2"/>
<rect x="60" y="389" width="1" height="3" fill="#e2f2e2"/>
<text x="57" y="550" font-size="9.5" fill="#00ffff">C3</text>
<rect x="60" y="552" width="10" height="2" fill="#00ffff"/>
<rect x="60" y="552" width="1" height="3" fill="#00ffff"/>
<path fill="#00ffff" d="M1272 524.5 L1278 520.5 L1278 528.5 Z" shape-rendering="auto"/>
<rect x="1270" y="524" width="3" height="1" fill="#00ffff"/>
<path fill="#00ffff" d="M670 579 L675 586 L665 586 Z" shape-rendering="auto"/>
<rect x="669" y="586" width="2" height="8" fill="#00ffff"/>
<text x="66.5" y="17" font-size="12" fill="#efefdc" text-anchor="end" letter-spacing="0.15">5.375 A</text>
<text x="66.5" y="81" font-size="12" fill="#efefdc" text-anchor="end" letter-spacing="0.15">4.375 A</text>
<text x="66.5" y="153" font-size="12" fill="#efefdc" text-anchor="end" letter-spacing="0.15">3.375 A</text>
<text x="66.5" y="225" font-size="12" fill="#efefdc" text-anchor="end" letter-spacing="0.15">2.375 A</text>
<text x="66.5" y="297" font-size="12" fill="#efefdc" text-anchor="end" letter-spacing="0.15">1.375 A</text>
<text x="66.5" y="369" font-size="12" fill="#efefdc" text-anchor="end" letter-spacing="0.15">375 mA</text>
<text x="66.5" y="440" font-size="12" fill="#efefdc" text-anchor="end" letter-spacing="0.15">-625 mA</text>
<text x="66.5" y="512" font-size="12" fill="#efefdc" text-anchor="end" letter-spacing="0.15">-1.625 A</text>
<text x="66.5" y="577" font-size="12" fill="#efefdc" text-anchor="end" letter-spacing="0.15">-2.625 A</text>
<text x="70" y="593" font-size="12" fill="#efefdc" text-anchor="start" letter-spacing="0.15">-50 ms</text>
<text x="190" y="593" font-size="12" fill="#efefdc" text-anchor="middle" letter-spacing="0.15">-40 ms</text>
<text x="310" y="593" font-size="12" fill="#efefdc" text-anchor="middle" letter-spacing="0.15">-30 ms</text>
<text x="430" y="593" font-size="12" fill="#efefdc" text-anchor="middle" letter-spacing="0.15">-20 ms</text>
<text x="550" y="593" font-size="12" fill="#efefdc" text-anchor="middle" letter-spacing="0.15">-10 ms</text>
<text x="670" y="593" font-size="12" fill="#efefdc" text-anchor="middle" letter-spacing="0.15">0 µs</text>
<text x="790" y="593" font-size="12" fill="#efefdc" text-anchor="middle" letter-spacing="0.15">10 ms</text>
<text x="910" y="593" font-size="12" fill="#efefdc" text-anchor="middle" letter-spacing="0.15">20 ms</text>
<text x="1030" y="593" font-size="12" fill="#efefdc" text-anchor="middle" letter-spacing="0.15">30 ms</text>
<text x="1150" y="593" font-size="12" fill="#efefdc" text-anchor="middle" letter-spacing="0.15">40 ms</text>
<text x="1269" y="593" font-size="12" fill="#efefdc" text-anchor="end" letter-spacing="0.15">50 ms</text>
<text x="289" y="171" font-size="11" fill="#ffffff">AOUT2</text>
<rect x="289" y="173" width="38" height="1" fill="#ffffff"/>
<line x1="310" y1="173.5" x2="339" y2="188.5" stroke="#ffffff" stroke-width="1" shape-rendering="auto"/>
<text x="709" y="171" font-size="11" fill="#ffffff">AOUT1</text>
<rect x="709" y="173" width="37" height="1" fill="#ffffff"/>
<line x1="729" y1="173.5" x2="759" y2="191" stroke="#ffffff" stroke-width="1" shape-rendering="auto"/>
<text x="636.5" y="202" font-size="11" fill="#ffffff">Step</text>
<rect x="636" y="204" width="24" height="1" fill="#ffffff"/>
<line x1="648.5" y1="204.5" x2="670.5" y2="219" stroke="#ffffff" stroke-width="1" shape-rendering="auto"/>
<text x="143" y="476" font-size="11" fill="#ffffff">Current_A</text>
<rect x="143" y="477" width="53" height="1" fill="#ffffff"/>
<line x1="171" y1="477.5" x2="208" y2="493" stroke="#ffffff" stroke-width="1" shape-rendering="auto"/>
<text x="630" y="490" font-size="11" fill="#ffffff">nSCS</text>
<rect x="630" y="492" width="29" height="1" fill="#ffffff"/>
<line x1="645" y1="492.5" x2="670" y2="507.5" stroke="#ffffff" stroke-width="1" shape-rendering="auto"/>
<text x="1090" y="292" font-size="11" fill="#ffffff">Current_B</text>
<rect x="1090" y="294" width="52" height="1" fill="#ffffff"/>
<line x1="1120" y1="294.5" x2="1154" y2="309" stroke="#ffffff" stroke-width="1" shape-rendering="auto"/>
</svg>
<div class="a" style="left:5px;top:612px;font-size:13px;font-weight:bold;color:#fff">Measure</div>
<div style="position:absolute;left:0;top:606px;width:1282px;height:18px;overflow:hidden">
<div class="a" style="right:1086px;top:6px;font-size:13px;color:#f4f4f4">P1:max(C1)</div>
<div class="a" style="right:989px;top:6px;font-size:13px;color:#f4f4f4">P2:freq(C1)</div>
<div class="a" style="right:892px;top:6px;font-size:13px;color:#6e6e6e">P3:- - -</div>
<div class="a" style="right:795px;top:6px;font-size:13px;color:#6e6e6e">P4:- - -</div>
<div class="a" style="right:698px;top:6px;font-size:13px;color:#6e6e6e">P5:- - -</div>
<div class="a" style="right:601px;top:6px;font-size:13px;color:#6e6e6e">P6:- - -</div>
<div class="a" style="right:504px;top:6px;font-size:13px;color:#6e6e6e">P7:- - -</div>
<div class="a" style="right:407px;top:6px;font-size:13px;color:#6e6e6e">P8:- - -</div>
<div class="a" style="right:310px;top:6px;font-size:13px;color:#6e6e6e">P9:- - -</div>
<div class="a" style="right:213px;top:6px;font-size:13px;color:#6e6e6e">P10:- - -</div>
<div class="a" style="right:116px;top:6px;font-size:13px;color:#6e6e6e">P11:- - -</div>
<div class="a" style="right:19px;top:6px;font-size:13px;color:#6e6e6e">P12:- - -</div>
</div>
<div style="position:absolute;left:3px;top:625px;width:1261px;height:1px;background:#8c8c8c"></div>
<div style="position:absolute;left:3px;top:626px;width:1261px;height:15px;background:#1b1b1b"></div>
<div class="a" style="left:5px;top:627px;font-size:13px;color:#f4f4f4">value</div>
<div class="a" style="right:1086px;top:627px;font-size:13px;color:#f4f4f4">1.039 A</div>
<div class="a" style="right:989px;top:627px;font-size:13px;color:#f4f4f4">---</div>
<div class="a" style="left:5px;top:644px;font-size:13px;color:#f4f4f4">status</div>
<svg width="1282" height="712" style="pointer-events:none"><path d="M185 649 L188 652 L195 645" stroke="#22dd22" stroke-width="2.5" fill="none"/><path d="M286.5 644 L291.5 653 L281.5 653 Z" fill="#f0d000"/><rect x="286" y="647" width="1" height="3" fill="#000"/><rect x="286" y="651" width="1" height="1" fill="#000"/></svg>
<div class="bx" style="left:4px;background:#444444">
<div class="hd" style="background:#ffff00"></div>
<div class="hl">C1</div>
<div class="bd" style="right:3px;top:1px;width:21px;color:#ffff00">DC</div>
<div class="bd" style="right:26px;top:1px;width:25px;color:#ffff00">BwL</div>
<div class="r1">1.00 A/div</div><div class="r2">-1.3250 A</div>
</div>
<div class="bx" style="left:104px;background:#444444">
<div class="hd" style="background:#ff66b8"></div>
<div class="hl">C2</div>
<div class="bd" style="right:3px;top:1px;width:35px;color:#ff66b8">DC1M</div>
<div class="r1">5.00 V/div</div><div class="r2">1.720 V ofst</div>
</div>
<div class="bx" style="left:204px;background:#444444">
<div class="hd" style="background:#00ffff"></div>
<div class="hl">C3</div>
<div class="bd" style="right:3px;top:1px;width:35px;color:#00ffff">DC1M</div>
<div class="r1">5.00 V/div</div><div class="r2">-18.200 V</div>
</div>
<div style="position:absolute;left:303px;top:657px;width:99px;height:50px;background:#1e8ef8"></div>
<div class="bx" style="left:305px;width:95px;height:47px;background:#2c506c">
<div class="hd" style="background:#e0ffe0"></div>
<div class="hl">C5</div>
<div class="bd" style="right:2px;top:1px;width:21px;color:#e0ffe0">DC</div>
<div class="bd" style="right:25px;top:1px;width:25px;color:#e0ffe0">BwL</div>
<div class="r1">1.00 A/div</div><div class="r2">-1.3750 A</div>
</div>
<div class="bx" style="left:404px;background:#444444">
<div class="hd" style="background:#8080ff"></div>
<div class="hl">C6</div>
<div class="bd" style="right:3px;top:1px;width:35px;color:#8080ff">DC1M</div>
<div class="r1">10.0 V/div</div><div class="r2">14.360 V</div>
</div>
<div class="bx" style="left:504px;background:#444444">
<div class="hd" style="background:#ff0000"></div>
<div class="hl">C7</div>
<div class="bd" style="right:3px;top:1px;width:35px;color:#ff0000">DC1M</div>
<div class="r1">10.0 V/div</div><div class="r2">14.360 V</div>
</div>
<div style="position:absolute;left:604px;top:658px;width:97px;height:49px;box-sizing:border-box;border:1px dashed #e8e8e8"></div>
<div style="position:absolute;left:645px;top:681px;width:13px;height:2px;background:#fff"></div>
<div style="position:absolute;left:650px;top:676px;width:2px;height:12px;background:#fff"></div>
<div style="position:absolute;left:1003px;top:657px;width:57px;height:50px;background:#464646"></div>
<div style="position:absolute;left:1004px;top:658px;width:55px;height:15px;background:#00ee00"></div>
<div class="a" style="left:1004px;top:659px;width:55px;text-align:center;font-size:13px;font-weight:bold;color:#000">HD</div>
<div class="a" style="left:1004px;top:683px;width:55px;text-align:center;font-size:13px;color:#f4f4f4">12 Bits</div>
<div style="position:absolute;left:1063px;top:657px;width:112px;height:50px;background:#464646"></div>
<div style="position:absolute;left:1064px;top:658px;width:110px;height:15px;background:#fafafa"></div>
<div class="a" style="left:1066px;top:659px;font-size:13px;color:#101010">Tbase</div>
<div class="a" style="right:109px;top:659px;font-size:13px;color:#101010">0.0 ms</div>
<div class="a" style="right:109px;top:677px;font-size:13px;color:#f4f4f4">10.0 ms/div</div>
<div class="a" style="left:1066px;top:692px;font-size:13px;color:#f4f4f4">50 MS</div>
<div class="a" style="right:109px;top:692px;font-size:13px;color:#f4f4f4">500 MS/s</div>
<div style="position:absolute;left:1177px;top:657px;width:98px;height:50px;background:#464646"></div>
<div style="position:absolute;left:1178px;top:658px;width:96px;height:15px;background:#fafafa"></div>
<div class="a" style="left:1181px;top:659px;font-size:13px;color:#101010">Trigger</div>
<div class="bd" style="left:1229px;top:659px;width:19px;color:#fff">C3</div>
<div class="bd" style="left:1251px;top:659px;width:21px;color:#fff">DC</div>
<div class="a" style="left:1181px;top:677px;font-size:13px;color:#f4f4f4">Normal</div>
<div class="a" style="right:10px;top:677px;font-size:13px;color:#f4f4f4">2.00 V</div>
<div class="a" style="left:1181px;top:692px;font-size:13px;color:#f4f4f4">Edge</div>
<div class="a" style="right:10px;top:692px;font-size:13px;color:#f4f4f4">Positive</div>
<div style="position:absolute;left:0;top:708px;width:1280px;height:1px;background:#2c2c2c"></div>
<div style="position:absolute;left:0;top:709px;width:1280px;height:1px;background:#5a5f60"></div>
<div style="position:absolute;left:0;top:710px;width:1280px;height:2px;background:#222"></div>
<div style="position:absolute;left:1280px;top:700px;width:2px;height:12px;background:#c0c0c0"></div>
</body></html>
